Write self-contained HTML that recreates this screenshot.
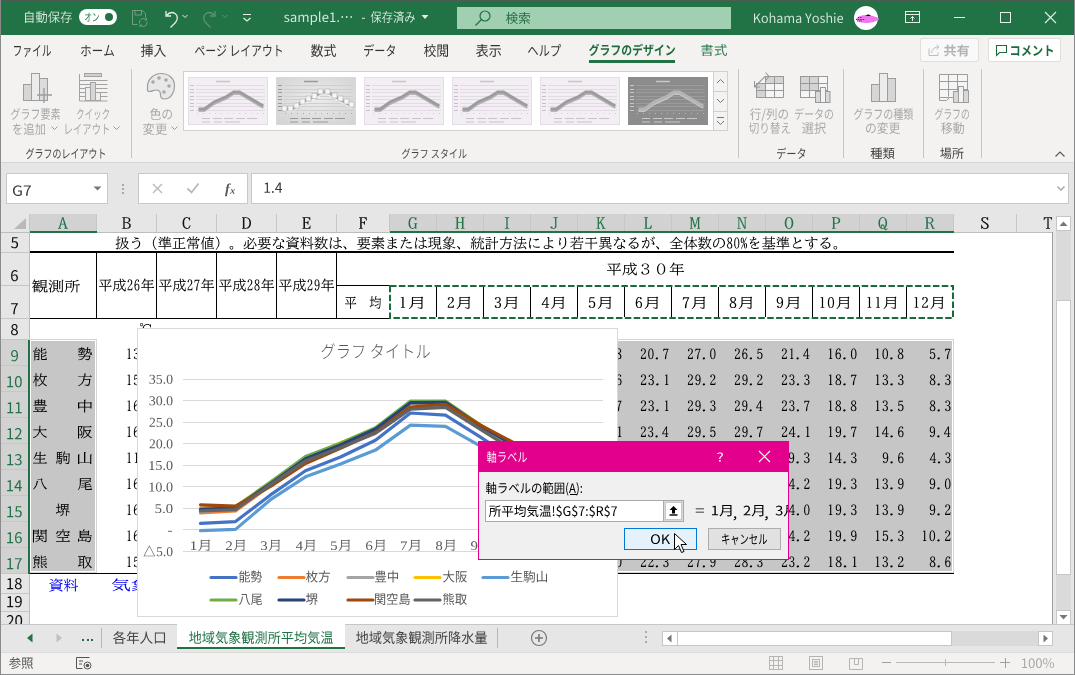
<!DOCTYPE html>
<html><head><meta charset="utf-8">
<style>
*{box-sizing:border-box;margin:0;padding:0}
html,body{width:1075px;height:675px;overflow:hidden;background:#fff;font-family:"Liberation Sans",sans-serif;position:relative}
.a{position:absolute}
.t{white-space:nowrap;transform-origin:0 50%}
svg.a{overflow:visible}
</style></head><body>
<svg width="0" height="0" style="position:absolute"><defs><path id="s0" d="M24-41 77-41 77-26 24-26zM24-48 24-63 77-63 77-48zM24-19 77-19 77-5 24-5zM46-84 44-80 43-75 42-70 16-70 16 8 24 8 24 2 77 2 77 8 85 8 85-70 49-70 51-74 53-79 54-83z"/><path id="s1" d="M66-83 65-77 65-71 65-66 65-61 53-61 53-54 65-54 65-47 64-42 63-36 63-30 61-25 60-20 58-15 56-11 53-7 33-5 33-13 52-13 52-19 33-19 33-25 52-25 52-55 33-55 33-61 54-61 54-67 33-67 33-74 38-75 43-76 48-76 52-77 49-83 44-82 40-81 34-81 29-80 23-79 17-79 11-78 5-78 6-75 7-72 12-73 16-73 21-73 26-74 26-67 4-67 4-61 26-61 26-55 7-55 7-25 26-25 26-19 7-19 7-13 26-13 26-4 4-2 5 4 10 4 14 3 19 3 25 2 30 2 36 1 42 0 47 0 45 1 43 3 46 6 49 8 54 4 58-1 61-6 64-11 67-18 69-24 70-31 71-38 72-46 72-54 86-54 86-42 86-33 85-24 85-18 84-12 84-8 83-4 83-2 82-1 80 0 78 1 74 1 67 0 69 4 69 8 74 8 78 8 82 7 85 6 88 4 89 2 90 0 91-3 91-7 92-12 92-19 93-26 93-35 93-45 94-57 94-59 94-61 72-61 73-66 73-71 73-77 73-83zM13-37 26-37 26-30 13-30zM33-37 46-37 46-30 33-30zM13-50 26-50 26-42 13-42zM33-50 46-50 46-42 33-42z"/><path id="s2" d="M45-73 82-73 82-54 45-54zM38-79 38-47 60-47 60-35 31-35 31-28 55-28 52-24 49-19 45-15 41-11 37-8 32-5 28-2 30 0 33 4 37 1 41-2 45-6 49-10 53-14 57-19 60-23 60 8 67 8 67-24 70-19 74-14 77-10 81-6 85-2 89 1 93 4 95 1 98-2 94-5 90-8 86-11 82-15 78-19 75-24 72-28 95-28 95-35 67-35 67-47 90-47 90-79zM28-84 25-78 23-72 20-67 17-62 13-57 10-52 6-48 2-44 5-40 6-37 10-41 14-45 17-50 17 8 24 8 24-61 27-66 30-71 32-76 35-82z"/><path id="s3" d="M62-36 62-27 34-27 34-20 62-20 62-1 61 0 59 1 56 1 51 1 45 1 46 4 47 8 55 8 61 8 65 7 68 4 69-1 69-20 96-20 96-27 69-27 69-32 73-35 78-38 82-42 86-45 89-49 85-53 83-52 42-52 42-46 76-46 73-42 69-39 64-36zM38-84 37-80 36-75 34-71 6-71 6-64 31-64 29-59 26-54 23-49 19-44 16-40 12-36 8-32 3-28 5-25 7-21 11-25 15-28 19-32 19 8 26 8 26-41 29-45 32-50 35-54 37-59 40-64 94-64 94-71 43-71 45-76 46-82z"/><path id="s4" d="M9-14 14-8 20-11 25-14 30-18 35-22 40-25 44-30 48-34 52-38 55-41 58-45 58-9 58-6 55-5 50-5 46-5 41-6 41 2 46 3 52 3 57 3 62 2 65-1 66-5 66-10 66-16 66-22 66-28 66-34 66-41 66-47 66-53 82-53 86-53 90-52 90-61 86-60 81-60 66-60 65-70 66-74 66-78 57-78 57-75 58-70 58-60 22-60 17-60 12-61 12-52 17-53 22-53 55-53 52-49 49-45 45-41 41-37 36-33 31-28 26-25 20-21 15-17z"/><path id="s5" d="M23-73 17-67 21-64 26-61 30-57 35-53 39-49 42-46 48-53 45-56 41-59 36-63 31-67 27-71zM14-6 19 2 25 1 31-1 36-3 42-5 46-7 51-9 55-11 59-14 64-17 68-20 73-24 77-28 80-32 84-37 87-41 90-45 92-49 88-58 85-54 83-49 80-45 76-40 72-36 68-32 64-28 59-24 54-21 50-19 46-16 42-14 37-12 32-11 26-9 20-7z"/><path id="s6" d="M23 1 29 1 34-1 38-3 41-7 43-11 43-15 42-20 40-24 36-27 31-29 27-31 21-34 17-37 15-41 16-45 19-48 25-49 30-48 34-46 37-44 42-50 38-52 34-54 30-55 25-56 19-55 15-54 11-51 8-48 7-44 6-40 7-35 10-32 13-29 17-26 22-25 26-23 30-21 33-18 34-14 33-10 30-7 24-6 19-6 15-8 11-10 8-12 3-6 7-3 12-1 18 1z"/><path id="s7" d="M22 1 27 1 31-1 36-3 40-6 41 0 48 0 48-33 48-39 47-44 45-48 42-51 39-54 35-55 30-56 23-55 17-53 12-51 8-49 12-42 16-45 22-47 28-48 34-47 37-44 39-39 39-34 31-33 24-32 19-30 14-28 10-25 8-22 6-18 6-14 7-9 9-4 12-1 17 1zM24-6 19-7 16-10 15-15 15-18 17-21 20-23 25-25 31-27 39-28 39-13 34-9 29-7z"/><path id="s8" d="M9 0 18 0 18-39 23-44 28-47 32-48 36-47 40-44 41-40 42-33 42 0 51 0 51-39 56-44 61-47 65-48 69-47 73-44 74-40 75-33 75 0 84 0 84-34 84-41 82-46 80-50 77-53 73-55 68-56 63-55 58-53 54-49 50-45 48-50 45-53 40-55 35-56 30-55 26-53 22-50 18-46 17-54 9-54z"/><path id="s9" d="M9 23 18 23 18 4 18-5 23-2 28 1 33 1 38 1 42-1 46-3 50-6 53-11 55-16 56-21 57-28 56-34 55-39 54-44 51-48 48-51 44-54 40-55 35-56 30-55 26-53 22-51 18-48 17-54 9-54zM32-6 28-7 23-9 18-12 18-41 23-45 28-47 33-48 37-47 41-45 44-42 46-38 47-34 47-28 47-22 45-16 43-12 40-9 36-7z"/><path id="s10" d="M19 1 22 1 24 0 23-6 22-6 21-6 19-7 18-10 18-80 9-80 9-11 10-6 11-2 14 0z"/><path id="s11" d="M31 1 36 1 41 0 45-2 49-4 46-10 42-8 37-7 32-6 27-7 23-8 20-11 17-15 15-20 14-25 51-25 51-27 51-30 51-36 50-41 48-45 46-49 42-52 39-54 34-55 30-56 25-55 20-54 16-51 13-48 10-44 7-39 6-33 5-27 6-21 7-15 10-10 13-6 17-3 21-1 26 1zM14-32 15-37 18-42 21-46 25-48 30-48 34-48 38-46 41-42 43-37 43-32z"/><path id="s12" d="M9 0 49 0 49-8 34-8 34-73 27-73 23-71 18-69 12-68 12-62 25-62 25-8 9-8z"/><path id="s13" d="M14 1 19-1 20-6 19-11 14-13 9-11 7-6 9-1z"/><path id="s14" d="M17-45 12-43 10-38 12-33 17-31 21-33 23-38 21-43zM50-45 45-43 43-38 45-33 50-31 55-33 57-38 55-43zM83-45 79-43 77-38 79-33 83-31 88-33 90-38 88-43z"/><path id="s15" d="M5-24 30-24 30-32 5-32z"/><path id="s16" d="M9-78 14-75 19-72 24-69 27-66 31-72 28-75 23-78 18-81 13-83zM4-51 9-48 14-45 18-43 22-40 26-46 23-49 18-52 13-54 8-56zM7 2 13 7 16 2 18-2 21-7 23-12 26-17 28-21 30-26 25-31 22-26 20-21 17-16 14-11 12-6 9-2zM60-84 60-74 32-74 32-67 42-67 46-63 49-59 53-55 57-52 52-50 47-48 41-47 35-45 29-44 31-41 33-38 39-39 44-41 49-42 54-44 59-46 64-48 68-46 73-44 77-43 82-41 88-40 93-39 95-42 97-45 91-47 86-48 80-49 75-51 71-53 74-56 78-59 81-63 84-67 95-67 95-74 67-74 67-84zM75-67 72-63 68-59 64-56 59-59 55-63 51-67zM79-27 79-18 47-18 48-22 48-26 48-27zM41-39 41-26 41-22 40-18 39-13 38-8 35-4 32 1 28 5 31 7 34 9 37 5 41 2 43-3 45-7 46-11 79-11 79 8 87 8 87-39 79-39 79-34 48-34 48-39z"/><path id="s17" d="M85-51 77-52 77-48 77-43 76-39 76-36 71-38 66-40 60-41 54-43 48-44 51-49 53-55 56-60 58-64 60-68 61-69 62-71 57-75 55-74 52-74 48-74 42-73 35-73 30-73 26-73 22-73 23-65 26-66 30-66 35-66 41-66 47-67 51-67 49-63 47-58 45-54 43-49 40-44 34-43 28-42 23-40 19-38 15-34 11-31 9-27 8-22 7-18 8-12 11-8 15-5 20-4 25-4 29-7 33-11 35-15 38-20 40-25 43-31 45-37 51-36 56-35 60-34 65-32 70-30 74-28 72-23 70-19 67-14 64-10 59-6 54-3 48 0 54 6 60 3 64 0 68-3 71-7 74-10 77-15 79-19 81-24 84-21 88-18 91-16 95-24 91-27 87-29 83-32 83-37 84-41 84-46zM37-37 35-32 33-27 31-23 29-19 26-15 24-12 20-12 16-13 14-18 15-23 17-27 20-31 25-34 31-36z"/><path id="s18" d="M40-45 40-19 61-19 59-15 57-12 55-9 51-5 46-2 41 0 34 3 36 6 38 8 45 6 50 3 55 0 59-3 62-7 65-11 66-14 69-10 72-5 76-2 79 1 83 4 88 6 93 8 95 5 97 2 92 0 87-2 82-5 78-9 75-13 72-19 92-19 92-45 69-45 69-54 85-54 85-59 90-56 94-54 96-57 98-60 93-62 89-65 84-68 80-72 76-76 72-80 69-84 62-84 59-80 56-75 52-71 47-67 42-64 37-61 37-63 26-63 26-84 19-84 19-63 5-63 5-56 19-56 17-50 15-43 13-37 11-32 8-26 6-22 3-18 5-14 7-11 9-15 11-19 14-23 16-28 18-33 19-39 19 8 26 8 26-39 29-34 32-29 34-25 38-31 36-34 33-39 29-44 26-48 26-56 37-56 39-54 43-56 47-59 47-54 62-54 62-45zM66-77 69-74 72-70 75-67 79-64 83-60 49-60 54-64 59-69 63-73zM47-39 62-39 62-30 62-28 62-25 47-25zM69-39 85-39 85-25 69-25 69-28 69-30z"/><path id="s19" d="M63-10 69-7 74-3 80 0 84 4 88 7 94 2 90-1 85-4 80-8 74-11 69-14zM29-14 25-10 20-7 15-4 10-1 4 2 8 4 10 7 15 5 19 2 24-1 28-4 32-8 36-11zM7-59 7-40 14-40 14-52 41-52 37-48 32-44 28-41 22-43 18-39 22-36 28-33 32-30 36-27 30-23 7-23 7-16 46-17 46 8 54 8 54-17 82-18 85-15 88-12 93-17 90-20 86-23 82-26 77-29 72-32 68-35 63-31 67-29 71-26 74-23 41-23 45-26 50-29 54-32 59-35 63-38 67-41 71-44 64-48 60-45 56-41 52-38 47-35 43-31 38-34 33-38 37-40 41-44 45-47 49-51 46-52 86-52 86-40 93-40 93-59 54-59 54-69 92-69 92-75 54-75 54-84 46-84 46-75 8-75 8-69 46-69 46-59z"/><path id="s20" d="M10 0 19 0 19-23 32-38 54 0 64 0 38-46 61-73 50-73 20-36 19-36 19-73 10-73z"/><path id="s21" d="M30 1 35 1 40-1 44-3 48-6 51-10 53-15 55-21 55-27 55-34 53-39 51-44 48-48 44-51 40-54 35-55 30-56 25-55 21-54 17-51 13-48 10-44 7-39 6-34 5-27 6-21 7-15 10-10 13-6 17-3 21-1 25 1zM30-6 26-7 22-9 19-12 17-16 15-21 15-27 15-33 17-38 19-42 22-45 26-47 30-48 35-47 39-45 42-42 44-38 46-33 46-27 46-21 44-16 42-12 39-9 35-7z"/><path id="s22" d="M9 0 18 0 18-39 22-43 26-46 29-47 33-48 38-47 41-44 43-40 44-33 44 0 53 0 53-34 52-41 51-46 49-50 45-53 41-55 36-56 31-55 26-53 22-50 18-47 18-58 18-80 9-80z"/><path id="s23" d="M22 0 31 0 31-28 53-73 44-73 34-53 32-47 29-42 27-36 26-36 24-42 22-47 19-53 10-73 0-73 22-28z"/><path id="s24" d="M9 0 18 0 18-54 9-54zM14-66 18-67 20-72 18-76 14-78 9-76 8-72 9-67z"/><path id="s25" d="M86-66 80-70 77-70 75-70 72-70 67-70 61-70 54-70 46-70 39-70 33-70 28-70 24-70 19-70 14-70 14-62 19-62 24-62 28-62 33-62 39-62 46-62 54-62 61-62 67-62 73-62 76-62 75-57 73-51 71-46 69-40 66-34 62-29 59-25 56-22 52-18 47-15 42-12 37-10 30-7 24-5 30 2 36 0 42-2 47-5 51-8 56-11 60-14 63-17 67-21 70-25 73-29 76-35 78-40 80-46 82-51 83-57 85-62 85-64z"/><path id="s26" d="M86-50 82-55 79-54 76-54 74-54 69-54 62-54 55-54 48-54 41-54 34-54 30-54 27-54 22-54 18-55 18-47 22-47 27-47 30-47 35-47 42-47 50-47 58-47 66-47 71-47 75-47 73-44 70-40 66-36 62-32 58-29 64-24 69-28 73-32 77-37 80-41 83-45 84-48 85-49zM53-40 44-40 45-37 45-34 45-29 44-24 43-19 41-14 38-9 35-5 29-1 26 1 22 2 30 8 35 4 40 0 44-4 47-8 49-13 51-17 52-23 52-28 53-34z"/><path id="s27" d="M9-36 13-28 19-30 24-32 30-35 36-37 41-39 46-42 51-45 51-8 51-2 50 3 60 3 59-2 59-8 59-50 64-53 69-57 74-61 78-64 82-68 86-72 80-78 76-75 73-71 69-68 65-64 61-61 57-58 52-55 48-52 43-50 38-47 33-45 27-42 21-40 15-38z"/><path id="s28" d="M52-2 58 2 59 1 61 0 66-2 70-5 75-8 79-12 84-15 88-19 92-23 95-28 90-34 87-30 83-25 79-21 74-18 70-15 65-12 61-10 61-12 61-16 61-23 61-30 61-38 61-45 61-53 61-59 61-65 61-68 61-72 62-75 52-75 53-72 53-68 53-65 53-59 53-53 53-45 53-37 53-29 53-21 53-15 53-10 53-8 53-5zM7-3 14 2 18-1 22-5 25-10 28-15 30-20 32-25 33-29 34-34 34-40 34-46 35-52 35-58 35-63 35-68 35-72 36-75 26-75 27-71 27-67 27-62 27-56 27-50 26-43 26-37 25-32 24-27 22-22 20-18 17-14 14-9 11-6z"/><path id="s29" d="M34-38 27-41 25-37 22-32 19-28 15-23 12-19 8-15 15-11 18-14 22-19 25-23 29-28 32-33zM76-41 69-38 72-34 75-30 78-25 81-20 84-15 86-11 93-15 91-19 88-24 85-29 82-33 79-38zM11-62 11-53 15-53 20-54 48-54 48-53 48-50 48-45 48-38 48-31 48-24 48-17 48-12 48-8 47-5 44-5 39-5 32-6 33 2 37 3 42 3 47 3 52 2 55-1 56-5 56-9 56-14 56-21 56-29 56-36 56-43 56-49 56-53 56-54 82-54 86-53 90-53 90-62 86-61 82-61 56-61 56-71 56-75 56-78 47-78 47-75 48-71 48-61 20-61 15-61z"/><path id="s30" d="M10-43 10-34 14-34 19-34 24-34 27-34 32-34 38-34 45-34 52-34 59-34 65-34 71-34 76-34 79-34 85-34 90-34 90-43 85-43 79-43 76-43 71-43 65-43 59-43 52-43 44-43 38-43 32-43 27-43 24-43 19-43 14-43z"/><path id="s31" d="M17-11 12-11 7-11 9-2 13-2 17-3 22-3 27-4 34-4 40-5 48-6 55-7 62-8 68-8 74-9 80-10 82-5 84-1 85 3 93 0 92-5 89-10 86-15 83-21 80-26 77-32 74-37 71-41 64-38 67-34 70-29 73-23 76-17 71-17 66-16 61-15 55-15 49-14 43-13 37-13 31-12 33-17 34-22 37-28 39-34 41-40 43-46 45-52 46-57 48-62 49-65 51-71 52-75 42-77 42-73 40-67 39-63 38-59 36-53 34-47 32-41 30-34 28-28 26-22 24-16 22-11z"/><path id="s32" d="M39-50 39-7 46-7 46-12 62-12 62 8 69 8 69-12 85-12 85-8 92-8 92-50 69-50 69-58 95-58 95-64 69-64 69-73 75-74 81-75 86-76 91-76 87-82 82-81 78-81 73-80 67-79 61-79 55-78 49-78 43-78 38-77 39-74 39-71 45-72 50-72 56-72 62-73 62-64 36-64 36-58 62-58 62-50zM46-28 62-28 62-18 46-18zM46-34 46-44 62-44 62-34zM85-28 85-18 69-18 69-28zM85-34 69-34 69-44 85-44zM18-84 18-64 4-64 4-57 18-57 18-35 3-31 4-24 18-28 18-1 18 0 16 1 12 1 6 1 8 4 8 8 14 8 19 7 22 6 24 4 25-1 25-30 36-33 35-40 25-37 25-57 35-57 35-64 25-64 25-84z"/><path id="s33" d="M44-58 42-50 40-42 37-35 34-28 30-22 26-16 21-11 16-6 10-2 4 2 7 5 10 8 16 4 22 0 26-5 31-10 35-15 39-21 42-27 45-34 48-41 51-48 52-42 54-37 57-31 60-25 63-19 67-13 72-7 77-2 84 3 91 8 93 4 97 1 86-6 77-14 70-23 65-32 61-40 58-49 56-57 55-65 55-72 55-78 23-78 23-70 48-70 48-66 48-62 49-58z"/><path id="s34" d="M70-60 71-64 74-66 78-67 81-66 84-64 85-60 84-56 81-54 78-53 74-54 71-56zM66-60 67-55 69-51 73-49 78-48 83-49 86-51 89-55 90-60 89-65 86-69 83-71 78-72 73-71 69-69 67-65zM5-26 13-19 15-22 18-26 22-30 25-35 29-40 33-45 36-49 39-52 42-52 45-50 48-46 52-42 57-38 61-33 65-29 68-25 72-21 76-16 79-12 83-7 87-3 94-10 90-14 86-19 81-24 77-28 73-32 70-36 66-40 61-45 57-49 53-53 49-57 44-61 40-62 36-60 32-56 29-52 25-48 22-44 18-40 15-36 12-33 9-29z"/><path id="s35" d="M72-75 66-72 69-69 71-65 73-61 75-56 81-59 79-63 76-67 74-71zM85-79 79-77 82-73 84-70 86-66 89-62 94-64 92-68 90-72 87-76zM29-76 24-69 28-67 33-64 38-61 42-58 46-55 51-62 47-64 43-67 38-71 33-74zM14-5 18 4 23 2 29 1 35-1 41-3 46-6 52-9 57-12 62-16 67-19 71-23 76-27 80-31 84-36 87-40 90-45 85-53 82-48 79-44 76-39 72-35 67-31 63-27 58-23 53-19 47-16 42-13 37-11 31-9 25-7 19-6zM14-54 9-47 13-45 18-42 23-39 28-36 31-33 36-40 32-42 28-45 23-48 18-51z"/><path id="s36" d="M22-3 28 2 30 1 32 0 40-2 47-5 53-8 60-11 66-15 72-18 77-22 82-26 87-31 91-36 86-43 82-38 78-33 73-29 67-25 61-21 55-18 49-15 43-12 37-10 32-9 32-11 32-16 31-21 32-28 32-35 32-43 32-50 32-56 32-62 32-65 32-70 32-74 22-74 23-70 23-65 23-62 23-56 23-50 23-43 23-35 23-28 23-21 23-16 23-11 23-8 23-6z"/><path id="s37" d="M93-68 88-72 85-72 81-72 78-72 73-72 67-72 60-72 52-72 44-72 37-72 31-72 26-72 24-72 18-72 12-73 12-64 18-64 24-64 26-64 31-64 37-64 44-64 51-64 59-64 66-64 73-64 78-64 81-64 79-61 76-57 72-53 68-48 63-45 59-42 66-36 70-40 75-44 79-48 83-53 86-57 88-61 90-64 92-66zM53-54 44-54 45-51 45-47 45-42 44-36 43-31 42-27 41-22 38-18 35-14 32-10 27-7 22-4 18-2 25 4 32 0 38-5 43-9 46-14 49-20 51-26 52-32 53-39 53-47z"/><path id="s38" d="M88-61 83-64 80-64 76-63 54-63 54-73 54-76 54-80 44-80 45-76 45-73 45-63 23-63 18-63 14-64 14-60 14-56 14-51 14-44 14-38 14-35 14-32 22-32 22-35 22-38 22-43 22-50 22-56 78-56 77-51 76-46 75-41 73-36 71-31 68-27 65-22 61-18 56-14 51-11 46-9 41-7 36-5 31-4 37 4 43 2 49 0 54-3 59-6 63-9 67-13 71-16 74-20 77-25 79-30 82-35 83-40 85-45 86-50 87-55 87-58z"/><path id="s39" d="M34-9 34-3 33 3 43 3 42-3 42-9 42-42 46-40 51-39 56-37 62-35 67-32 72-30 77-28 81-26 85-34 80-36 75-38 70-41 64-43 59-45 53-47 47-49 42-51 42-67 42-72 43-77 33-77 34-72 34-67 34-63 34-58 34-52 34-44 34-37 34-29 34-22 34-16 34-12z"/><path id="s40" d="M44-82 42-78 39-73 36-69 41-66 44-70 47-75 50-79zM8-79 11-75 13-70 14-66 20-69 19-73 17-77 14-82zM63-84 62-78 61-72 59-67 58-61 56-56 54-51 52-47 49-43 46-39 50-36 52-34 55-38 58-42 60-46 61-40 63-34 65-29 67-24 69-18 66-14 62-10 58-7 54-3 49 0 45-3 41-5 37-8 40-11 41-15 43-20 44-24 53-24 53-31 26-31 30-38 28-38 32-38 32-53 37-49 42-45 46-42 50-48 47-50 42-53 36-56 32-59 53-59 53-66 32-66 32-84 25-84 25-66 4-66 4-59 23-59 20-56 16-52 12-49 8-46 3-44 6-41 8-38 12-41 17-44 21-48 25-53 25-39 22-39 18-31 4-31 4-24 15-24 13-19 10-14 8-10 14-8 16-11 21-8 26-6 21-3 16-1 11 0 4 2 6 5 8 8 14 6 19 5 24 3 28 0 32-2 37 0 41 3 44 6 46 3 48 6 50 8 54 6 59 3 63 0 66-4 70-7 73-11 76-6 79-2 83 2 87 5 92 8 94 5 97 2 92-1 88-5 84-9 81-13 78-18 80-22 82-27 83-31 85-36 86-42 88-47 89-53 90-59 96-59 96-66 67-66 68-71 69-77 70-83zM23-24 37-24 35-19 33-15 31-11 27-13 23-15 19-16zM65-59 82-59 81-53 80-47 79-41 77-36 75-31 73-26 71-31 70-36 68-42 67-47 66-53z"/><path id="s41" d="M71-79 75-76 79-73 83-69 85-66 90-71 88-74 84-77 80-80 76-83zM56-84 57-79 57-74 57-70 57-65 6-65 6-58 58-58 58-47 60-37 61-27 64-19 66-11 69-4 72 1 76 5 80 7 85 8 88 8 91 6 93 3 95-1 96-7 97-14 93-16 90-19 89-10 89-4 87-1 86 0 83 0 80-2 77-6 75-10 73-16 71-23 69-30 67-39 66-48 65-58 95-58 95-65 65-65 65-70 65-74 65-79 64-84zM6-2 8 5 13 4 18 3 23 2 28 1 34-1 39-2 45-3 51-5 56-6 56-13 34-8 34-36 53-36 53-43 9-43 9-36 27-36 27-7z"/><path id="s42" d="M20-73 20-65 25-65 30-65 34-65 40-65 47-65 54-65 60-65 64-65 69-65 73-65 73-73 69-73 64-72 60-73 54-73 47-72 40-72 34-72 29-72 25-73zM78-81 73-79 76-75 79-70 81-65 87-68 84-72 81-77zM90-85 84-83 87-79 90-74 92-69 98-72 95-76 92-81zM8-48 8-40 13-40 17-40 47-40 47-34 46-29 45-24 44-19 41-15 39-11 35-8 31-5 27-2 22 0 30 6 35 3 39-1 43-5 47-8 50-12 52-17 53-22 54-28 55-34 55-40 83-40 87-40 90-40 90-48 86-48 83-48 80-48 74-48 67-47 59-47 50-48 41-48 33-48 26-48 20-48 17-48 13-48z"/><path id="s43" d="M54-78 44-81 43-77 41-74 40-70 37-67 35-63 32-59 28-55 24-50 20-46 15-42 9-39 16-34 21-37 25-41 29-44 33-48 36-52 40-56 42-60 76-60 75-56 73-51 71-46 69-42 66-37 63-32 58-35 54-38 50-41 46-43 42-46 36-40 40-38 44-35 49-32 53-29 57-26 54-22 50-19 46-15 41-12 36-9 31-6 25-4 19-2 26 4 32 2 38-1 43-4 48-7 52-10 57-14 60-17 64-21 68-18 72-15 75-12 81-19 77-22 73-25 69-28 73-33 76-38 79-44 81-49 83-54 85-59 86-61 87-64 81-68 78-67 74-67 47-67 49-71 51-74z"/><path id="s44" d="M53-59 51-55 48-50 45-46 41-42 38-38 40-36 43-34 47-38 51-42 54-47 57-52 60-56zM74-56 78-52 82-48 85-43 88-38 90-34 97-38 94-42 91-46 88-51 84-55 80-60zM64-84 64-69 40-69 40-62 95-62 95-69 71-69 71-84zM77-42 75-36 73-31 70-26 67-21 64-26 61-31 59-36 56-41 50-39 52-34 54-29 57-24 60-20 62-15 59-12 55-8 51-5 46-2 41 0 36 2 38 5 40 8 45 6 50 3 55 1 59-3 63-6 67-10 71-6 74-2 78 1 83 4 87 6 92 8 94 5 97 2 92 0 88-3 83-5 79-8 75-12 72-15 75-20 78-25 80-29 82-35 84-40zM20-84 20-63 5-63 5-56 19-56 18-50 16-43 14-37 11-32 9-26 6-22 3-18 5-14 7-11 9-14 12-19 14-23 16-28 18-34 20-39 20 8 27 8 27-39 30-33 33-28 36-24 40-30 38-33 34-38 30-44 27-48 27-56 39-56 39-63 27-63 27-84z"/><path id="s45" d="M35-31 64-31 64-20 35-20zM88-80 54-80 54-47 84-47 84-2 84 0 82 0 74 0 75-3 75-7 72-8 70-9 69-2 67-1 64-1 61-1 59-1 59-3 59-15 71-15 71-36 62-36 64-40 67-44 60-47 58-41 55-36 44-36 42-41 38-46 32-44 35-40 37-36 29-36 29-15 38-15 37-11 35-7 32-4 28-2 22 0 24 3 26 5 31 3 36 1 39-2 42-6 43-10 44-15 52-15 52-3 53 1 55 4 60 4 64 4 68 4 71 4 73 3 74 5 74 8 80 8 85 7 88 6 91 4 92-2 92-80zM38-61 38-53 16-53 16-61zM38-66 16-66 16-74 38-74zM84-61 84-52 61-52 61-61zM84-66 61-66 61-74 84-74zM9-80 9 8 16 8 16-47 45-47 45-80z"/><path id="s46" d="M14 1 16 8 21 7 26 6 32 4 37 3 43 1 49 0 55-2 61-4 60-10 36-4 36-27 40-30 44-33 47-36 50-39 53-32 55-26 58-20 62-15 66-10 70-5 75-1 80 2 86 5 92 8 94 4 97 1 91-1 86-3 82-6 77-9 73-13 70-17 74-19 78-22 83-25 87-28 91-31 85-36 81-32 76-28 71-25 66-22 64-26 61-30 59-34 58-39 94-39 94-46 54-46 54-55 86-55 86-61 54-61 54-69 90-69 90-76 54-76 54-84 46-84 46-76 10-76 10-69 46-69 46-61 14-61 14-55 46-55 46-46 6-46 6-39 41-39 37-36 33-33 28-30 23-28 18-25 13-23 8-21 3-20 5-17 8-13 13-15 18-17 23-20 28-22 28-2z"/><path id="s47" d="M23-35 21-30 19-26 16-21 13-17 10-13 7-9 4-6 7-3 10-1 14-5 17-9 20-13 23-18 26-23 29-28 31-33zM68-32 72-27 76-22 79-16 82-11 84-6 86-1 93-4 92-9 89-14 86-19 83-25 79-30 75-35zM15-77 15-69 85-69 85-77zM6-52 6-45 46-45 46-2 46 0 44 0 40 0 35 0 28 0 30 4 31 8 37 8 42 8 46 7 49 7 53 4 54-2 54-45 94-45 94-52z"/><path id="s48" d="M6-28 14-21 16-24 19-28 23-32 26-37 30-42 34-47 37-51 40-53 43-54 46-51 49-48 53-44 58-40 62-35 66-31 69-27 73-23 76-18 80-14 84-9 88-5 95-12 91-16 87-21 82-25 78-30 74-34 70-38 67-42 62-47 58-51 54-55 50-59 45-63 41-63 37-62 33-58 30-54 26-50 23-45 19-41 16-38 13-35 10-31z"/><path id="s49" d="M80-72 82-77 87-78 92-77 94-72 92-67 87-65 82-67zM76-72 76-70 76-69 73-68 70-68 66-68 59-68 52-68 45-68 38-68 31-68 26-68 23-68 18-69 13-69 13-60 17-60 23-61 26-61 31-61 37-61 45-61 52-61 60-61 66-61 71-61 74-61 73-55 72-50 70-44 67-38 64-33 61-28 58-24 54-20 50-17 46-14 41-11 35-8 29-6 22-4 29 4 35 1 40-1 45-3 50-6 54-9 58-12 62-16 65-19 68-23 71-28 74-33 77-39 79-44 81-50 82-55 83-60 83-61 85-61 87-61 91-61 95-64 98-67 98-72 98-76 95-80 91-82 87-83 83-82 79-80 77-76z"/><path id="b50" d="M90-86 82-83 85-79 87-74 90-69 98-73 95-77 93-82zM54-76 40-80 38-75 35-70 33-67 31-63 28-59 24-55 20-50 15-46 10-42 4-38 15-30 20-33 25-37 29-41 33-45 37-49 40-54 68-54 67-50 66-45 63-40 61-35 58-31 54-26 51-23 48-20 44-17 41-14 36-11 32-9 26-6 20-4 14-2 26 9 32 6 37 4 42 1 47-2 52-5 56-9 59-12 63-16 66-19 70-24 73-29 76-34 78-39 81-44 82-49 84-53 85-57 87-60 78-65 86-68 84-73 81-78 78-82 70-79 73-75 75-70 77-66 73-65 68-65 48-65 48-66 51-70z"/><path id="b51" d="M22-77 22-64 27-64 33-64 36-64 42-64 49-64 55-64 62-64 67-64 71-64 77-64 82-64 82-77 77-76 71-76 68-76 62-76 56-76 49-76 42-76 37-76 33-76 27-76zM90-48 82-53 79-52 74-52 71-52 66-52 60-52 53-52 46-52 39-52 33-52 28-52 25-52 19-52 13-53 13-40 20-40 25-40 29-40 34-40 40-40 47-40 54-40 60-40 66-40 70-40 73-40 71-36 69-32 66-27 63-23 59-20 55-17 51-14 46-11 40-9 34-7 28-6 38 6 43 4 48 2 52 0 57-2 61-5 66-8 70-12 74-16 77-20 80-25 83-29 85-34 87-39 88-44 89-46z"/><path id="b52" d="M89-67 79-73 75-72 71-72 68-72 63-72 56-72 49-72 41-72 35-72 29-72 25-72 21-72 17-73 13-73 13-59 18-59 25-59 29-59 35-59 41-59 49-59 56-59 63-59 68-59 72-59 71-55 69-50 68-45 65-40 63-35 60-31 57-27 53-24 49-20 45-17 40-14 34-12 28-9 21-8 32 4 37 2 43 0 48-3 53-6 57-9 61-12 65-16 69-19 72-23 75-28 78-34 80-39 82-45 84-50 86-55 87-60 88-63z"/><path id="b53" d="M45-62 44-57 43-52 42-47 41-42 39-38 37-30 34-25 32-21 30-18 27-18 24-19 22-21 20-26 19-33 20-37 21-41 23-46 26-50 29-54 34-57 39-60zM58-62 64-61 68-58 72-55 75-51 77-46 79-41 79-36 79-30 77-24 74-20 71-16 67-13 62-10 56-9 52-8 47-7 55 5 62 3 68 1 74-2 79-5 83-9 87-13 89-18 91-23 92-29 93-35 92-42 91-48 89-53 86-58 82-63 77-67 72-70 66-72 59-74 52-74 45-74 38-72 31-69 25-66 20-61 15-56 11-51 9-45 7-38 6-31 7-25 8-20 10-15 12-11 15-7 19-4 23-3 27-2 31-3 34-5 38-7 41-11 44-16 47-21 50-28 52-35 54-41 55-46 56-51 57-57z"/><path id="b54" d="M19-76 19-63 24-63 30-63 34-63 39-63 46-63 53-63 58-63 62-63 68-63 73-63 73-76 68-75 62-75 58-75 53-75 46-75 39-75 34-75 30-75 24-75zM79-82 71-79 74-75 77-70 79-65 87-69 85-73 82-78zM91-87 83-84 86-79 88-74 91-70 99-73 97-78 94-82zM7-50 7-37 12-37 17-37 44-37 44-31 43-25 41-20 38-15 35-11 30-7 25-3 20-1 32 8 37 5 42 1 46-3 49-7 52-12 54-16 55-21 57-26 58-31 58-37 82-37 87-37 91-37 91-50 87-49 82-49 79-49 74-49 67-49 58-49 50-49 41-49 33-49 25-49 20-49 17-49 12-49z"/><path id="b55" d="M82-78 75-76 77-71 79-66 80-62 87-64 86-68 84-73zM92-81 85-79 87-74 89-70 91-65 98-67 96-72 94-77zM4-59 4-46 8-46 15-46 23-46 23-32 23-26 23-22 37-22 37-26 36-32 36-46 60-46 60-42 60-35 59-29 58-24 56-19 53-16 50-12 47-9 43-7 38-4 32-2 43 8 50 5 55 1 60-3 64-7 67-12 69-17 71-23 72-29 73-36 73-43 73-46 81-46 87-46 92-46 92-59 87-58 80-58 73-58 73-69 73-74 74-78 60-78 60-74 60-69 60-58 36-58 36-68 37-73 37-77 23-77 23-73 23-68 23-58 15-58 8-59z"/><path id="b56" d="M6-39 12-26 18-28 23-30 28-32 33-34 38-36 43-38 48-41 48-9 48-4 47 1 47 4 63 4 62 1 62-4 62-9 62-49 67-52 72-56 76-60 81-63 85-67 89-71 78-81 75-78 71-74 68-70 63-67 59-63 54-60 50-57 46-54 41-52 36-49 31-47 25-45 19-43 13-41z"/><path id="b57" d="M24-76 15-66 19-63 23-59 28-55 33-51 37-48 40-44 50-55 46-58 42-62 37-66 33-70 28-73zM12-9 20 4 26 3 32 1 37-1 43-3 48-5 53-8 57-10 62-14 67-17 72-21 77-25 81-30 85-34 88-38 91-43 94-47 86-61 84-57 82-53 79-49 76-45 72-41 68-37 64-33 60-29 55-26 50-22 46-20 41-18 36-16 30-14 24-12 18-11z"/><path id="s58" d="M26-7 75-7 75 0 26 0zM26-12 26-18 75-18 75-12zM18-23 18 8 26 8 26 5 75 5 75 8 83 8 83-23zM6-33 6-28 94-28 94-33 53-33 53-39 88-39 88-44 53-44 53-50 82-50 82-61 94-61 94-66 82-66 82-77 53-77 53-84 46-84 46-77 16-77 16-72 46-72 46-66 6-66 6-61 46-61 46-55 15-55 15-50 46-50 46-44 12-44 12-39 46-39 46-33zM53-72 75-72 75-66 53-66zM53-55 53-61 75-61 75-55z"/><path id="b59" d="M57-14 62-10 67-6 71-2 76 2 80 6 83 9 95 2 92-1 87-5 82-9 77-13 72-16 68-20zM30-19 27-16 24-12 19-9 15-5 10-2 5 1 8 3 12 6 15 9 19 6 23 3 28 0 32-3 36-7 40-11 43-14zM8-66 8-54 26-54 26-35 4-35 4-23 96-23 96-35 74-35 74-54 93-54 93-66 74-66 74-84 62-84 62-66 38-66 38-84 26-84 26-66zM38-35 38-54 62-54 62-35z"/><path id="b60" d="M36-85 35-81 34-77 33-73 6-73 6-62 28-62 25-57 22-52 19-47 15-43 11-39 7-36 2-32 5-30 8-26 10-23 15-27 19-31 24-35 24 9 35 9 35-10 72-10 72-4 71-3 70-2 67-2 62-2 57-3 58 1 60 5 60 9 66 9 71 9 75 8 78 7 81 5 83 1 84-4 84-54 37-54 39-58 41-62 95-62 95-73 46-73 47-78 49-82zM35-27 72-27 72-20 35-20zM35-37 35-43 72-43 72-37z"/><path id="b61" d="M14-17 14-2 18-3 23-3 27-3 73-3 73 2 87 2 87-4 87-10 87-61 87-66 87-71 83-70 78-70 28-70 24-70 20-71 16-71 16-57 19-57 24-57 28-58 73-58 73-16 27-16 22-16 18-16z"/><path id="b62" d="M29-64 21-54 26-50 31-47 35-44 40-41 44-38 48-35 44-31 41-27 37-23 33-20 29-17 25-14 20-11 15-8 10-5 21 5 26 2 31-1 36-5 41-8 45-12 48-15 52-19 55-22 58-26 62-22 66-19 70-15 73-12 77-8 80-4 91-15 87-19 83-23 79-26 75-30 71-34 67-37 70-42 72-47 74-51 77-56 78-60 80-64 82-69 84-74 69-79 68-74 67-70 65-65 63-60 61-55 59-50 56-46 52-49 47-52 43-55 38-58 33-61z"/><path id="b63" d="M31-10 31-5 31 0 30 4 46 4 46 0 45-6 45-10 45-38 50-36 55-34 61-32 66-30 71-28 77-25 81-23 87-37 83-39 78-41 73-43 68-45 62-47 56-49 50-51 45-52 45-67 45-71 46-75 46-79 30-79 31-75 31-71 31-67 31-64 31-59 31-52 31-45 31-38 31-31 31-24 31-18 31-13z"/><path id="s64" d="M76-80 71-78 74-73 77-68 79-64 85-66 82-71 79-76zM88-84 82-82 85-77 88-73 90-68 96-70 93-75 90-80zM50-75 40-78 39-74 37-70 35-67 33-63 30-58 26-54 22-49 17-45 12-41 6-36 13-31 18-35 23-39 27-43 31-47 35-52 38-56 72-56 71-51 69-46 66-40 63-35 60-30 56-25 53-21 49-18 46-15 42-12 37-9 33-6 27-4 22-2 16 0 23 7 29 4 35 2 40-1 45-4 49-7 53-10 57-13 60-17 63-20 67-25 70-30 73-35 76-40 78-45 79-50 81-55 82-58 83-60 76-64 74-63 70-63 43-63 45-67 47-71z"/><path id="s65" d="M23-74 23-66 27-66 32-66 36-67 41-66 48-66 55-66 62-66 68-66 71-66 76-66 80-66 80-74 76-74 71-74 68-74 62-74 55-74 48-74 41-74 36-74 32-74 27-74zM88-48 82-52 80-51 77-51 74-51 68-51 62-51 54-51 46-51 39-51 32-51 27-51 24-51 19-51 14-52 14-43 19-43 24-43 27-43 32-43 39-43 47-43 55-43 62-43 69-43 74-43 77-43 76-39 74-34 71-30 69-25 65-21 61-18 57-14 52-11 47-9 42-6 36-4 30-3 36 4 41 3 46 1 50-1 55-3 59-6 64-9 68-13 72-17 75-21 78-26 81-30 83-35 85-40 86-45 87-47z"/><path id="s66" d="M12-64 12-39 38-39 32-29 5-29 5-23 28-23 25-19 22-15 20-12 17-9 24-6 26-9 31-8 36-7 40-6 44-5 40-3 35-2 30-1 25 0 19 0 13 1 6 1 8 4 9 8 15 7 21 7 27 6 33 5 38 4 43 3 47 1 51 0 55-2 62-1 68 1 73 3 79 5 83 6 88 8 92 2 88 1 84-1 79-2 74-4 69-6 63-7 67-10 70-14 73-18 76-23 96-23 96-29 41-29 47-38 44-39 89-39 89-64 65-64 65-73 93-73 93-80 7-80 7-73 34-73 34-64zM37-23 67-23 65-19 62-15 58-12 54-9 48-11 42-12 36-13 30-14zM41-73 58-73 58-64 41-64zM19-58 34-58 34-45 19-45zM41-58 58-58 58-45 41-45zM65-58 81-58 81-45 65-45z"/><path id="s67" d="M63-9 69-6 74-3 80 0 84 3 88 6 94 1 90-2 85-5 80-8 74-11 69-13zM29-13 25-10 20-7 15-4 10-1 4 1 7 4 10 6 15 4 19 2 24-1 28-4 32-7 36-10zM6-52 6-46 38-46 34-43 31-40 27-36 20-40 15-36 20-33 25-30 30-27 34-24 30-22 6-21 7-15 46-16 46 8 54 8 54-16 84-17 87-14 89-11 95-16 92-19 88-22 84-25 80-28 75-31 70-33 65-29 69-27 72-25 76-22 41-22 46-25 50-28 55-31 60-34 64-38 68-41 62-45 58-42 54-38 50-35 45-32 40-28 37-31 32-34 36-36 40-40 44-43 48-46 94-46 94-52 54-52 54-59 84-59 84-64 54-64 54-71 90-71 90-77 54-77 54-84 46-84 46-77 12-77 12-71 46-71 46-64 17-64 17-59 46-59 46-52z"/><path id="s68" d="M88-44 85-52 81-50 77-48 73-46 68-44 64-42 58-40 57-43 54-46 50-48 45-49 41-48 36-47 31-45 34-48 36-52 38-56 40-60 46-61 52-61 57-61 63-62 68-62 74-63 74-71 69-70 64-69 59-69 53-68 48-68 43-68 45-74 46-79 38-80 37-76 37-72 35-67 29-67 23-67 18-68 12-68 12-61 18-60 23-60 28-60 33-60 31-57 29-53 26-49 23-44 19-40 15-35 10-30 16-25 20-28 23-32 25-35 29-38 33-40 38-42 43-42 47-42 50-40 52-36 47-33 42-30 37-27 34-24 31-20 29-16 28-11 29-6 31-2 34 0 38 2 43 4 48 4 54 4 59 4 65 4 71 4 76 3 81 3 82-5 76-4 70-4 65-3 59-3 54-3 48-3 43-4 40-5 37-8 36-12 37-16 39-19 42-23 47-26 52-29 52-23 52-18 52-13 59-13 59-32 65-35 70-37 75-39 79-41 84-43z"/><path id="s69" d="M6-77 11-73 16-69 20-65 23-61 29-66 26-70 21-74 16-78 11-82zM26-44 5-44 5-38 19-38 19-12 15-9 11-6 7-3 4 0 8 7 11 4 15 1 19-3 23-6 26-2 30 1 35 3 40 5 45 6 51 6 56 6 61 6 67 6 73 6 79 6 84 6 89 6 94 6 95 2 96-2 92-2 86-1 80-1 74-1 67-1 61-1 56-1 51-1 45-2 39-3 34-5 30-8 26-12zM37-74 37-9 89-9 89-38 45-38 45-47 85-47 85-74 62-74 66-83 57-84 56-79 54-74zM45-67 78-67 78-54 45-54zM45-31 82-31 82-16 45-16z"/><path id="s70" d="M57-72 57 6 64 6 64-1 84-1 84 6 91 6 91-72zM64-8 64-64 84-64 84-8zM20-83 19-65 5-65 5-58 19-58 19-50 18-43 18-36 17-29 15-23 14-17 12-11 9-6 6-1 3 3 6 5 9 8 12 3 16-2 18-7 20-14 22-20 24-27 25-34 26-42 26-50 26-58 42-58 41-47 41-37 41-29 41-23 40-17 40-12 39-9 39-6 38-4 38-3 36-1 34-1 30-1 24-1 25 2 26 6 32 6 38 6 42 5 44 2 45 1 46-2 47-5 47-9 48-14 48-21 48-29 49-38 49-49 49-61 49-64 49-65 27-65 27-83z"/><path id="s71" d="M54-78 44-81 43-76 41-73 39-69 37-65 34-61 30-56 26-52 21-47 16-43 10-39 17-34 22-38 27-42 31-46 35-50 39-54 42-58 76-58 75-54 73-48 70-43 67-37 64-32 60-27 57-24 53-20 50-17 46-14 41-11 37-9 31-6 26-4 20-2 27 4 33 2 39-1 44-3 49-6 53-9 57-12 61-16 64-19 67-23 71-28 74-33 77-38 80-43 82-48 84-53 85-57 86-60 87-62 80-67 78-66 74-66 47-66 49-70 51-73z"/><path id="s72" d="M48-58 41-55 43-50 45-44 47-38 49-33 56-36 55-41 52-47 50-53zM84-52 76-55 75-49 74-44 72-39 70-34 68-29 65-24 62-20 58-16 54-12 50-9 45-6 40-3 35-1 30 1 36 8 41 5 46 3 51 0 56-3 60-7 65-11 69-16 72-21 75-26 78-31 80-36 82-42 83-47 84-49zM25-53 18-50 19-47 21-42 23-36 25-31 27-27 34-30 33-34 31-39 29-44 27-49z"/><path id="s73" d="M47-34 23-34 23-52 47-52zM55-34 55-52 80-52 80-34zM33-84 30-80 28-76 25-72 21-68 17-64 13-60 8-56 4-53 6-50 9-47 12-50 16-52 16-8 16-3 18 1 20 4 24 6 30 7 37 7 40 7 46 7 53 7 60 7 67 7 73 7 76 7 82 7 87 5 91 3 93-1 95-6 96-12 92-13 88-15 87-9 86-4 84-2 81 0 76 0 72 0 66 0 59 0 52 0 45 0 40 0 36 0 30 0 26-2 24-4 23-8 23-27 80-27 80-23 88-23 88-59 59-59 62-63 64-67 67-71 69-74 64-78 62-77 38-77 41-83zM23-59 26-63 30-67 33-71 58-71 56-67 53-63 50-59z"/><path id="s74" d="M48-64 47-59 46-53 45-48 43-42 42-37 39-30 37-24 34-19 32-16 29-14 27-14 24-14 21-16 19-20 17-25 17-32 17-36 18-41 20-46 23-50 27-54 31-58 36-61 41-63zM56-64 62-63 67-61 72-59 76-55 79-51 81-46 82-41 83-35 82-29 80-24 78-19 75-15 71-12 67-9 62-7 57-6 53-5 49-4 53 3 60 2 66 0 72-3 77-6 81-9 84-13 87-18 89-23 90-29 91-35 90-41 89-47 87-52 84-57 80-61 76-65 71-68 65-70 59-71 52-72 45-71 39-70 32-67 27-64 22-60 17-55 14-49 11-44 9-38 9-31 9-24 11-19 13-14 16-10 19-7 23-5 27-4 30-5 33-6 36-9 39-12 42-17 45-22 48-28 50-36 51-41 53-47 54-53 55-59z"/><path id="s75" d="M72-59 76-55 80-51 84-47 87-43 90-39 96-43 93-46 90-50 86-55 82-59 78-62zM21-62 19-58 16-54 13-50 9-47 4-44 7-42 10-40 14-43 18-47 22-51 26-55 29-60zM46-84 46-74 6-74 6-67 39-67 38-63 38-59 37-55 35-50 32-46 28-42 23-38 26-36 28-33 34-37 38-41 41-45 43-50 44-54 45-58 46-62 46-66 46-67 60-67 60-45 59-44 58-44 54-44 47-44 49-40 49-37 55-37 60-37 63-38 66-41 67-45 67-67 94-67 94-74 54-74 54-84zM39-39 36-35 33-32 29-28 24-25 19-22 13-19 7-16 10-14 12-11 17-13 21-15 25-18 29-20 32-17 36-13 39-10 43-8 38-6 33-4 28-2 22-1 16 0 10 1 5 2 7 5 8 8 14 7 19 6 25 5 30 4 35 2 41 1 45-1 50-3 55-1 59 1 64 3 69 4 74 5 80 7 86 7 92 8 94 5 96 1 90 1 84 0 78-1 73-2 68-4 63-5 58-7 62-10 66-13 70-16 74-20 77-24 80-28 75-32 73-31 42-31 45-34 47-37zM35-24 35-25 68-25 65-21 60-17 56-14 51-11 46-14 42-17 38-21z"/><path id="s76" d="M25-24 19-21 21-17 24-13 28-10 31-7 27-5 23-3 17-1 11 0 5 2 7 5 9 8 15 7 21 5 26 3 31 1 35-1 38-3 42-1 47 1 52 3 57 4 62 5 68 6 74 6 80 7 87 7 94 8 95 4 97 0 90 0 83 0 76-1 70-1 64-2 59-3 54-4 49-6 44-8 48-12 50-16 52-20 53-25 87-25 87-63 54-63 54-72 94-72 94-79 6-79 6-72 47-72 47-63 16-63 16-25 46-25 44-20 41-16 37-11 33-15 29-19zM23-41 47-41 47-37 47-34 46-31 23-31zM54-31 54-34 54-37 54-41 80-41 80-31zM23-57 47-57 47-47 23-47zM54-57 80-57 80-47 54-47z"/><path id="s77" d="M80-67 75-71 72-70 67-70 64-70 59-70 52-70 45-70 38-70 32-70 29-70 23-70 19-71 19-62 23-62 29-62 32-62 37-62 44-62 52-62 59-62 65-62 68-62 66-58 64-53 61-48 58-43 55-38 51-34 48-30 44-27 40-23 35-19 30-16 26-12 21-9 15-7 10-4 16 2 21 0 26-3 31-6 35-9 40-12 44-16 48-19 52-23 55-27 60-23 64-19 68-14 72-10 76-5 80-1 83 3 90-3 87-7 83-11 79-16 75-20 70-25 65-29 61-33 64-38 67-43 70-48 73-53 76-58 78-62 79-65z"/><path id="s78" d="M43-54 43-21 64-21 64-14 42-14 42-8 64-8 64 0 36 0 36 6 96 6 96 0 71 0 71-8 93-8 93-14 71-14 71-21 93-21 93-54 71-54 71-60 95-60 95-66 71-66 71-74 78-74 84-75 89-76 94-77 90-83 86-82 81-81 76-81 70-80 64-79 59-79 53-79 47-78 41-78 42-75 43-72 48-72 53-73 59-73 64-73 64-66 39-66 39-60 64-60 64-54zM50-35 64-35 64-27 50-27zM71-35 86-35 86-27 71-27zM50-48 64-48 64-40 50-40zM71-48 86-48 86-40 71-40zM36-83 32-81 27-79 22-78 16-77 10-75 4-74 6-72 6-69 11-69 16-70 21-71 21-56 5-56 5-49 20-49 18-44 16-39 14-34 11-29 8-25 6-21 3-17 5-14 7-10 9-14 12-18 14-22 17-27 19-31 21-36 21 8 29 8 29-35 32-31 35-26 38-23 42-29 40-32 36-36 32-40 29-43 29-49 41-49 41-56 29-56 29-73 33-74 37-75 41-77z"/><path id="s79" d="M40-82 38-78 36-73 34-70 39-68 42-71 44-75 46-80zM7-80 9-76 11-72 13-68 18-70 17-74 15-78 12-82zM58-42 85-42 85-33 58-33zM58-27 85-27 85-17 58-17zM58-57 85-57 85-48 58-48zM60-9 57-6 52-3 47 0 41 3 44 5 46 8 51 6 55 3 60 1 64-2 67-6zM75-5 80-2 84 1 89 5 92 8 98 4 94 1 90-3 85-6 81-9zM23-36 23-28 5-28 5-22 23-22 22-18 20-14 18-10 15-6 10-3 3 1 6 3 8 6 13 3 18 0 22-4 25-7 27-11 31-8 35-4 39-1 42 1 47-4 43-7 39-10 34-14 29-18 29-20 29-22 48-22 48-28 30-28 30-36zM23-83 23-66 5-66 5-60 21-60 18-56 15-53 11-49 7-46 4-44 6-42 8-39 12-42 16-45 20-49 23-54 23-39 30-39 30-53 34-50 38-47 41-44 44-42 48-47 45-49 39-53 34-56 30-59 30-60 47-60 47-66 30-66 30-83zM51-63 51-11 92-11 92-63 72-63 75-73 96-73 96-79 48-79 48-73 67-73 66-68 65-63z"/><path id="s80" d="M50-62 82-62 82-54 50-54zM50-75 82-75 82-68 50-68zM43-81 43-48 89-48 89-81zM33-43 33-36 47-36 44-32 40-27 36-23 32-19 27-16 30-14 32-12 37-15 41-19 45-23 56-23 52-19 49-14 45-10 41-6 37-3 33-1 36 2 38 4 42 1 46-2 50-6 53-10 57-14 60-19 62-23 72-23 70-18 67-13 64-8 60-3 56 1 52 4 55 6 58 8 62 5 65 1 68-3 71-8 74-13 76-18 78-23 86-23 85-15 84-8 84-4 83-1 82 1 80 2 79 2 75 2 70 1 71 4 72 8 77 8 82 8 85 7 88 5 89 3 90 0 91-4 92-10 93-17 93-26 94-28 94-29 50-29 53-33 55-36 96-36 96-43zM3-18 6-10 11-12 15-15 20-17 26-20 31-22 36-25 34-32 24-27 24-55 35-55 35-62 24-62 24-83 17-83 17-62 5-62 5-55 17-55 17-24 12-21 7-19z"/><path id="s81" d="M6-78 6-72 49-72 49-78zM88-83 84-81 80-79 75-77 70-76 65-74 60-73 54-74 54-48 53-43 53-38 53-33 52-27 51-22 50-17 48-12 45-7 42-2 38 3 41 5 44 8 47 3 51-2 53-7 55-12 57-17 59-22 60-28 60-33 61-38 61-43 78-43 78 8 86 8 86-43 97-43 97-50 61-50 61-66 67-68 73-69 79-71 84-73 90-75 94-77zM10-61 10-34 10-29 10-24 9-18 8-12 7-7 5-1 2 4 5 6 8 8 11 3 13-2 14-7 15-13 16-19 17-25 17-30 47-30 47-61zM17-54 39-54 39-37 17-37z"/><path id="s82" d="M44-78 44-71 93-71 93-78zM27-84 24-80 20-76 16-73 12-69 8-65 4-62 6-59 8-56 12-59 16-62 20-66 24-70 27-73 31-77 34-81zM39-50 39-43 73-43 73-2 72 0 70 0 67 1 61 1 54 0 56 4 57 8 64 8 69 8 73 7 76 7 79 4 80-2 80-43 96-43 96-50zM31-63 28-58 24-53 20-48 16-44 11-39 7-36 2-32 5-29 8-26 12-29 15-33 19-36 19 8 27 8 27-45 30-48 33-52 35-56 38-60z"/><path id="s83" d="M1 18 8 18 38-79 31-79z"/><path id="s84" d="M60-73 60-18 67-18 67-73zM84-82 84-2 83 0 81 1 78 1 73 1 66 1 68 4 69 8 75 8 80 8 84 7 87 7 90 4 91-2 91-82zM44-50 43-44 41-39 39-33 37-28 33-31 29-34 24-38 19-40 21-45 24-50zM6-79 6-72 23-72 22-66 20-61 18-55 15-49 13-44 10-39 6-35 2-30 5-28 8-26 10-28 13-32 15-35 20-32 25-28 30-25 34-22 31-17 28-13 24-9 21-6 17-3 13 0 8 3 11 5 14 8 19 5 25 1 29-4 34-9 38-15 42-22 45-29 48-37 51-46 52-56 48-57 46-57 26-57 28-62 30-67 31-72 56-72 56-79z"/><path id="s85" d="M40-75 40-68 58-68 57-59 57-51 56-43 55-35 53-27 51-20 47-13 43-7 38-2 31 2 34 5 36 8 43 3 49-2 54-9 58-16 60-24 62-32 64-41 64-50 65-59 65-68 86-68 86-55 86-44 85-34 85-26 84-19 84-14 83-9 82-6 82-4 81-2 79-1 77 0 74 0 69 0 63-1 65 3 66 7 71 7 76 7 80 7 84 6 88 2 89 1 90-2 91-6 91-11 92-17 92-24 93-33 93-44 94-57 94-71 94-74 94-75zM15-81 15-54 3-52 4-45 15-47 15-22 15-17 17-13 20-12 24-11 30-11 35-11 39-12 41-14 43-17 44-22 44-29 41-31 38-32 37-24 36-19 34-18 30-18 26-18 23-19 22-22 22-49 46-54 45-61 22-56 22-81z"/><path id="s86" d="M34-79 25-79 25-75 24-71 24-66 23-61 22-55 22-49 21-43 21-38 21-32 22-27 22-22 30-23 30-28 29-31 30-35 31-40 33-46 35-51 38-56 42-60 46-64 50-66 55-67 59-66 63-64 66-61 68-57 70-52 71-46 71-39 71-32 69-26 67-21 64-16 60-13 55-9 50-7 45-5 39-3 32-2 37 5 44 3 51 1 57-1 63-5 67-9 71-13 75-18 77-25 79-32 79-40 79-46 78-52 76-58 74-62 71-66 68-70 65-72 61-73 56-74 51-73 46-71 42-68 38-64 34-60 31-56 29-51 30-56 31-62 32-68 33-74z"/><path id="s87" d="M26-12 74-12 74-2 26-2zM26-18 26-28 74-28 74-18zM19-34 19 8 26 8 26 4 74 4 74 8 81 8 81-34zM24-84 24-75 9-75 9-69 24-69 24-65 24-60 6-60 6-54 22-54 20-50 18-47 14-43 10-39 4-36 7-34 9-31 14-34 18-37 22-41 25-44 27-48 32-44 37-40 41-37 46-42 42-45 38-48 34-51 29-54 30-54 47-54 47-60 31-60 31-65 32-69 45-69 45-75 32-75 32-84zM68-84 68-75 53-75 53-69 68-69 68-68 67-64 67-60 50-60 50-54 65-54 62-50 59-46 54-43 48-40 50-37 52-34 58-38 63-41 67-44 69-48 72-52 74-47 78-42 82-38 87-35 92-32 94-35 96-38 92-40 87-43 83-46 80-50 77-54 94-54 94-60 74-60 75-64 75-68 75-69 91-69 91-75 75-75 75-84z"/><path id="s88" d="M31-79 30-72 35-71 41-70 47-69 54-68 59-67 65-67 70-66 71-74 66-74 61-74 55-75 48-76 42-77 36-78zM73-50 68-56 66-55 63-55 59-54 54-54 47-53 41-53 35-52 30-52 27-52 22-52 18-52 19-43 22-44 27-44 31-45 36-45 42-46 48-46 53-46 58-47 54-43 50-39 45-34 40-29 35-24 30-19 25-14 21-11 18-7 17-6 14-3 12-1 19 4 22 0 26-4 30-8 34-12 37-16 40-18 43-21 47-22 51-20 53-16 54-13 55-8 56-5 59 0 62 2 66 4 72 4 76 4 81 3 86 3 90 2 91-6 87-5 82-5 77-4 72-4 66-5 63-9 62-15 60-21 57-26 52-28 50-28 48-28 51-31 56-35 60-39 64-43 67-46 70-48z"/><path id="s89" d="M5-78 9-74 14-69 17-65 20-61 26-65 23-69 20-73 15-78 11-82zM68-16 73-13 78-10 83-7 86-4 94-7 89-10 84-13 79-16 73-19zM50-19 46-16 41-14 36-11 31-9 34-7 36-4 42-7 47-10 52-13 56-17zM24-44 4-44 4-38 17-38 17-11 12-7 8-3 3 0 7 7 11 4 14 1 18-3 21-6 24-2 28 1 33 3 38 4 43 5 50 6 54 6 60 6 66 6 72 6 78 6 84 6 89 6 94 6 95 2 96-1 91-1 86-1 79-1 73-1 66-1 60-1 54-1 49-1 44-1 39-2 34-4 30-6 27-9 24-12zM70-49 70-42 53-42 53-49 46-49 46-42 31-42 31-36 46-36 46-26 28-26 28-20 95-20 95-26 77-26 77-36 92-36 92-42 77-42 77-49zM53-36 70-36 70-26 53-26zM32-68 32-58 33-53 35-51 41-50 45-50 50-50 54-50 58-51 60-53 62-58 58-59 56-61 55-56 53-56 47-56 42-56 39-56 38-58 38-63 58-63 58-80 30-80 30-75 52-75 52-68zM65-68 65-58 66-53 68-51 74-50 78-50 84-50 88-50 92-51 95-54 96-59 93-60 90-61 89-57 87-56 81-56 75-56 72-56 71-58 71-63 91-63 91-80 63-80 63-75 84-75 84-68z"/><path id="s90" d="M46-78 46-44 46-39 45-34 45-28 44-23 43-17 41-12 39-7 36-2 32 3 35 5 37 8 41 4 44-1 47-6 49-11 50-17 51-22 52-27 53-33 53-38 65-38 67-32 69-26 70-20 73-15 75-10 78-6 81-1 85 2 88 5 92 8 95 5 98 2 94-1 90-4 86-8 83-12 81-16 78-21 76-26 74-32 73-38 92-38 92-78zM53-71 85-71 85-45 53-45zM3-31 5-24 20-28 20-1 19 1 17 1 13 1 6 1 7 5 8 8 15 8 20 7 23 7 26 4 27-1 27-29 41-33 40-40 27-36 27-57 40-57 40-64 27-64 27-84 20-84 20-64 5-64 5-57 20-57 20-35z"/><path id="s91" d="M61-69 81-69 78-64 74-60 70-55 66-59 62-62 57-65zM64-84 62-80 58-76 54-72 50-68 45-64 39-61 41-59 44-56 48-59 52-61 57-58 61-55 65-51 60-49 56-46 51-44 46-42 40-41 43-38 44-35 50-37 56-39 62-42 67-45 72-48 77-52 81-57 85-62 88-67 91-73 86-76 85-75 67-75 69-79 72-83zM66-30 86-30 84-26 81-22 78-18 74-15 71-17 68-20 64-23 60-25 63-28zM70-46 67-42 64-39 61-35 56-31 51-27 46-24 40-21 43-18 45-16 50-18 54-21 58-19 62-16 66-13 69-10 64-8 60-5 54-3 49-1 44 0 38 2 40 5 42 8 49 6 56 4 63 1 69-2 75-6 80-11 85-16 90-21 93-28 96-35 91-37 90-37 72-37 75-41 77-45zM36-83 32-81 27-79 22-78 16-77 10-75 4-74 6-72 6-69 11-69 16-70 21-71 21-56 5-56 5-49 20-49 18-44 16-39 14-34 11-29 8-25 6-21 3-17 5-14 7-10 9-14 12-18 14-22 17-27 19-31 21-36 21 8 29 8 29-35 32-31 35-26 38-23 42-29 40-32 36-36 32-40 29-43 29-49 41-49 41-56 29-56 29-73 33-74 37-75 41-77z"/><path id="s92" d="M39 1 45 1 50 0 54-2 58-4 62-7 62-38 37-38 37-30 53-30 53-11 49-9 45-7 40-7 35-7 30-8 26-10 23-13 20-17 18-21 17-26 16-31 15-37 16-43 17-49 19-54 22-59 25-62 30-64 34-66 40-66 45-66 49-64 52-62 56-60 60-66 58-68 54-71 50-73 45-74 39-75 34-74 28-73 24-71 19-68 15-64 12-60 9-55 7-50 6-43 6-37 6-30 7-24 9-18 12-13 15-9 19-5 23-2 28 0 33 1z"/><path id="s93" d="M20 0 29 0 30-8 30-16 31-23 32-30 34-36 36-43 39-49 42-55 46-61 51-68 51-73 5-73 5-66 40-66 36-60 33-54 30-48 27-42 25-36 24-29 22-23 21-16 20-8z"/><path id="I94" d="M11-41 3-41 4-44 12-46 13-52 14-58 17-63 20-66 24-68 28-70 34-70 38-70 42-69 40-59 37-59 36-64 35-65 33-65 31-64 29-62 28-59 26-54 25-46 35-46 34-41 24-41 13 21 0 21z"/><path id="I95" d="M21-18 13-12 12-10 11-9 10-8 9-7 9-6 9-5 9-4 11-3 10 0 0 0-1-1-1-2-1-4 0-6 2-8 5-11 19-22 9-42 5-43 6-46 20-46 28-30 33-34 36-36 37-38 38-39 38-41 38-42 36-43 36-46 47-46 47-45 48-44 47-41 45-38 41-35 31-26 42-4 46-3 45 0 31 0z"/><path id="s96" d="M34 0 43 0 43-20 52-20 52-28 43-28 43-73 32-73 2-26 2-20 34-20zM34-28 12-28 28-52 30-56 32-60 34-63 34-59 34-54 34-50z"/><path id="r97" d="M21-77 27-77 42-9 43-7 44-5 45-4 48-4 48 0 31 0 31-4 34-5 35-6 35-7 34-8 31-28 16-28 13-10 13-9 12-8 12-7 13-6 14-4 15-4 16-4 16 0 2 0 2-4 4-4 5-5 6-7 7-9zM23-67 17-33 30-33z"/><path id="r98" d="M5-76 24-76 29-75 34-74 37-71 40-68 42-63 42-58 42-54 41-50 39-47 35-43 30-41 35-38 39-35 42-31 44-27 44-21 44-16 43-12 41-8 39-5 35-2 30-1 25 0 5 0 5-4 9-5 10-8 10-68 10-70 9-71 7-72 5-72zM16-43 22-43 26-43 30-45 33-48 35-52 35-58 35-62 34-66 31-69 28-70 24-71 20-71 17-70 16-66zM16-38 16-10 17-7 17-6 19-5 21-5 25-5 30-6 34-9 36-13 37-16 37-21 37-26 35-30 33-33 29-37 24-38z"/><path id="r99" d="M41-55 38-55 37-60 35-64 34-67 30-71 27-73 23-72 21-70 18-66 17-62 15-57 14-51 14-45 14-38 14-32 14-26 15-21 16-17 18-13 20-8 24-6 27-5 31-5 33-8 36-11 37-15 39-19 40-25 43-23 42-17 41-13 40-9 38-5 35-1 31 1 26 2 22 1 19-1 15-4 12-9 10-13 9-17 8-21 7-26 7-32 6-38 7-44 7-50 8-56 10-61 11-66 14-71 18-75 22-77 26-78 31-77 35-73 36-72 37-71 37-72 38-76 41-76z"/><path id="r100" d="M4-76 21-76 27-75 32-73 36-70 39-65 41-61 43-56 44-51 45-45 45-38 45-32 44-26 43-21 42-16 40-12 38-8 34-5 31-2 26-1 21 0 4 0 4-4 6-4 7-5 8-6 8-9 8-68 8-70 7-71 6-72 4-72zM15-67 15-10 15-7 16-6 17-5 19-5 22-5 26-6 30-9 33-14 35-17 36-22 37-27 38-33 38-39 38-45 37-51 36-56 35-60 33-65 30-68 26-70 21-71 19-71 17-71 15-70 15-69z"/><path id="r101" d="M5-76 41-76 42-57 38-57 37-63 35-68 32-70 28-71 21-71 19-71 17-70 17-69 17-67 17-43 23-43 26-44 29-46 29-49 30-53 33-53 33-27 30-27 29-32 28-35 26-37 23-38 17-38 17-9 17-7 18-6 19-5 22-5 28-5 33-6 37-9 38-12 39-16 40-21 43-21 42 0 5 0 5-4 8-4 9-5 10-7 10-8 10-67 10-70 9-71 8-72 5-72z"/><path id="r102" d="M7-76 42-76 43-55 39-55 39-60 37-64 36-67 33-70 29-71 22-71 21-71 19-70 19-69 19-67 19-43 24-43 27-43 29-45 30-48 31-52 34-52 34-27 31-27 30-32 29-35 27-37 24-38 19-38 19-8 19-6 20-5 21-4 24-4 24 0 7 0 7-4 9-4 11-5 12-6 12-8 12-67 12-70 11-71 9-72 7-72z"/><path id="r103" d="M38 2 36-8 34-4 31-1 28 1 24 2 21 1 17-1 14-4 12-8 10-12 8-17 7-21 6-27 6-32 6-38 6-45 7-51 8-56 9-62 11-66 14-71 18-75 21-77 26-78 30-77 33-76 35-73 36-72 37-71 38-73 39-76 42-76 42-56 38-56 36-63 35-67 31-71 26-73 23-72 20-69 17-65 16-60 15-56 14-50 13-44 13-38 13-31 14-25 15-19 16-14 18-10 21-5 25-4 29-5 33-9 35-14 35-20 35-28 35-31 34-32 33-33 30-34 30-37 47-37 47-34 44-33 43-32 42-30 42-27 42 2z"/><path id="r104" d="M4-76 20-76 20-72 18-72 17-71 16-70 16-67 16-43 34-43 34-67 34-70 34-71 32-72 30-72 30-76 46-76 46-72 43-72 42-71 41-70 41-67 41-8 41-6 42-5 43-4 46-4 46 0 30 0 30-4 32-4 34-5 34-6 34-8 34-38 16-38 16-8 16-6 17-5 18-4 20-4 20 0 4 0 4-4 7-4 8-5 9-6 9-8 9-67 9-70 8-71 7-72 4-72z"/><path id="r105" d="M15-76 35-76 35-72 32-72 30-71 29-70 28-67 28-9 29-6 30-5 32-4 35-4 35 0 15 0 15-4 19-4 20-5 21-7 22-9 22-67 21-70 20-71 18-72 15-72z"/><path id="r106" d="M21-76 40-76 40-72 37-72 35-71 34-69 34-67 34-18 34-13 33-8 31-5 28-1 24 1 20 2 15 1 11-1 8-5 6-10 7-11 7-13 9-15 12-15 14-15 16-13 17-12 17-10 16-7 14-5 16-3 19-3 23-4 26-7 27-11 28-18 28-67 27-70 26-71 24-72 21-72z"/><path id="r107" d="M5-76 21-76 21-72 19-72 17-71 17-70 16-67 16-38 31-67 32-69 32-70 31-71 28-72 28-76 43-76 43-72 41-72 39-71 37-69 36-67 26-46 40-9 41-7 43-5 44-4 46-4 46 0 30 0 30-4 33-4 34-6 33-8 33-9 22-39 16-29 16-8 17-6 17-5 19-4 21-4 21 0 5 0 5-4 7-4 9-5 10-6 10-8 10-67 10-70 9-71 7-72 5-72z"/><path id="r108" d="M8-76 26-76 26-72 23-72 21-71 20-69 20-66 20-10 20-8 21-6 22-5 25-5 28-5 32-6 34-8 36-12 38-17 39-23 43-23 41 0 8 0 8-4 10-4 12-5 13-7 13-10 13-66 13-69 12-71 10-72 8-72z"/><path id="r109" d="M1-76 14-76 25-21 36-76 48-76 48-72 46-72 45-71 45-70 44-68 44-8 45-6 45-5 46-4 48-4 48 0 34 0 34-4 36-4 37-5 38-6 38-8 38-66 26-8 22-8 10-67 10-8 10-6 10-5 12-4 14-4 14 0 1 0 1-4 3-4 4-5 5-6 5-8 5-68 5-70 5-71 3-72 1-72z"/><path id="r110" d="M4-76 17-76 37-14 38-14 38-67 37-69 36-71 35-72 32-72 32-76 47-76 47-72 45-72 43-71 42-69 42-67 42 1 36 1 14-67 13-67 13-8 13-6 14-5 16-4 19-4 19 0 4 0 4-4 6-4 8-5 9-6 9-8 9-67 9-70 8-71 6-72 4-72z"/><path id="r111" d="M25-78 29-77 33-75 36-72 39-67 40-63 42-59 43-54 44-49 44-44 45-38 44-31 44-25 43-19 41-14 39-9 36-4 33-1 29 1 25 2 21 1 17-1 14-4 11-9 9-14 7-19 6-25 6-31 5-38 6-44 6-50 7-56 8-60 10-65 12-69 16-74 20-77zM25-73 22-72 19-69 17-65 16-60 14-56 14-50 13-44 13-38 13-31 14-26 14-20 16-16 17-12 19-7 22-4 25-4 29-5 33-10 34-14 35-19 36-25 37-31 37-38 37-45 36-52 35-58 34-63 32-67 29-71z"/><path id="r112" d="M6-76 25-76 31-75 35-74 39-71 41-67 43-63 44-59 44-54 44-49 43-45 41-41 39-38 34-35 29-34 24-33 18-33 18-8 18-6 19-5 20-4 23-4 23 0 6 0 6-4 8-4 10-5 11-6 11-8 11-67 11-70 10-71 8-72 6-72zM18-38 24-38 28-39 32-41 35-44 36-48 37-54 36-60 35-64 33-67 30-70 25-71 22-71 20-71 18-70 18-69 18-67z"/><path id="r113" d="M47-1 45 5 43 9 39 10 36 9 33 5 31-1 28 1 25 2 21 1 17 0 14-3 11-7 10-11 8-15 7-20 6-26 5-31 5-38 5-43 6-49 6-54 8-58 9-63 11-67 14-72 17-75 21-77 25-78 29-77 32-75 35-72 38-68 40-64 42-60 43-55 44-49 44-44 45-38 44-32 44-26 43-20 42-16 40-11 38-8 36-4 38 2 40 4 41 3 43 1 44-1 44-4zM17-8 16-11 16-15 16-20 17-24 20-28 24-29 27-28 29-26 31-23 33-18 34-11 35-15 36-20 37-25 37-31 38-38 37-44 37-50 36-55 35-60 34-64 31-69 28-72 25-73 22-72 19-70 17-66 15-62 14-57 13-51 12-45 12-37 12-31 13-25 13-20 14-15 15-11 16-8zM30-8 29-14 27-19 25-21 23-22 21-20 20-14 20-8 22-5 25-4 27-4 29-5 30-7z"/><path id="r114" d="M4-76 24-76 29-75 33-74 37-70 39-67 41-62 42-56 41-51 40-47 37-43 33-40 27-38 32-36 34-32 36-28 37-24 39-18 41-12 42-8 43-6 45-4 48-4 48 0 36 0 35-8 33-14 31-20 30-24 29-28 28-31 25-35 21-36 16-36 16-8 16-6 17-5 18-4 20-4 20 0 4 0 4-4 7-4 8-5 9-6 9-8 9-67 9-70 8-71 7-72 4-72zM16-41 21-41 27-42 31-45 33-48 34-52 35-56 34-62 33-66 31-69 27-70 23-71 19-71 18-71 16-70 16-69 16-67z"/><path id="r115" d="M8-26 11-26 12-19 14-14 16-9 18-6 22-4 25-4 29-4 32-7 35-12 35-18 35-23 32-27 29-31 26-35 20-40 16-44 13-48 10-53 9-57 8-62 9-66 10-70 13-73 16-76 20-77 24-78 29-77 34-73 35-73 36-74 37-77 40-77 40-56 37-56 35-62 33-66 30-70 28-72 24-73 20-71 17-68 16-65 15-61 16-57 18-52 21-49 24-46 30-41 34-37 37-34 39-31 41-27 42-23 43-18 42-12 41-8 38-3 34 0 30 1 26 2 22 1 18 0 15-3 14-4 13-4 12-3 11 1 8 1z"/><path id="r116" d="M6-76 44-76 45-56 42-56 41-63 39-67 36-70 32-71 28-71 28-8 29-6 29-5 31-4 34-4 34 0 16 0 16-4 19-4 21-5 21-6 22-8 22-71 18-71 14-70 11-67 9-62 8-56 5-56z"/><path id="s117" d="M26 1 31 1 35 0 39-2 43-5 46-9 48-13 50-18 50-24 50-30 48-36 45-40 42-43 38-45 33-47 28-47 22-46 17-44 19-66 47-66 47-73 11-73 9-39 14-36 17-38 21-40 26-40 31-40 35-37 38-34 40-29 41-24 40-18 38-13 35-9 30-7 25-6 19-7 15-9 11-11 7-14 3-8 6-6 10-3 14-1 20 1z"/><path id="s118" d="M30 1 35 1 39-1 43-4 46-7 49-12 51-17 51-22 51-29 49-34 47-38 44-41 40-44 36-45 31-46 26-45 22-43 18-40 14-37 15-45 16-51 18-56 20-60 23-63 26-66 29-67 33-67 37-66 41-64 45-62 50-67 47-70 43-72 38-74 33-75 28-74 24-73 21-71 17-69 14-66 11-61 9-56 7-50 6-43 6-35 6-28 7-22 8-16 10-12 13-8 15-5 19-2 22 0 26 1zM14-29 18-34 22-37 26-38 29-39 34-38 38-36 40-32 42-28 42-22 42-17 40-12 37-9 34-7 30-6 26-7 22-9 19-12 17-17 15-22z"/><path id="s119" d="M28 1 34 1 39-1 43-3 46-6 49-9 50-13 51-18 50-23 48-28 46-31 42-34 39-37 42-41 45-45 47-50 48-55 48-60 46-65 43-69 39-72 34-74 28-74 23-74 18-72 14-69 11-66 9-61 8-56 9-50 11-46 14-42 18-39 18-38 14-36 10-33 7-29 5-24 5-18 5-14 7-9 10-6 13-3 17-1 22 1zM33-40 28-42 23-44 20-47 17-51 16-56 17-61 20-64 23-67 28-68 33-67 37-64 40-60 40-55 40-49 37-44zM28-6 23-6 19-8 16-11 13-15 13-19 13-24 16-28 19-32 23-36 28-34 32-31 36-29 39-26 41-22 42-18 41-13 38-9 34-6z"/><path id="s120" d="M24 1 28 1 32 0 35-2 39-5 42-8 45-13 47-18 49-24 50-31 50-40 50-47 49-54 47-59 44-64 42-68 38-71 34-73 30-74 25-75 21-74 16-72 12-70 9-66 7-62 5-57 4-51 5-45 6-40 9-35 12-32 15-30 20-28 25-28 29-28 34-30 38-33 42-37 41-29 40-22 38-17 36-13 33-10 30-8 27-7 23-6 19-7 14-9 11-12 6-6 9-3 13-1 18 1zM41-44 38-40 34-37 30-35 26-35 21-35 18-37 15-41 14-45 13-51 14-56 15-61 18-65 21-67 26-68 30-67 34-65 37-62 39-57 41-51z"/><path id="s121" d="M28 1 32 1 36 0 39-2 42-5 44-8 47-12 48-17 50-23 50-30 51-37 50-44 50-51 48-56 47-61 44-65 42-69 39-71 36-73 32-74 28-75 24-74 20-73 17-71 14-69 11-65 9-61 7-56 6-51 5-44 5-37 5-30 6-23 7-17 9-12 11-8 14-5 17-2 20 0 24 1zM28-6 24-7 21-8 19-11 17-16 15-21 14-28 14-37 14-45 15-52 17-58 19-62 21-65 24-67 28-67 31-67 34-65 37-62 39-58 40-52 41-45 42-37 41-28 40-21 39-16 37-11 34-8 31-7z"/><path id="s122" d="M4 0 50 0 50-8 30-8 26-8 22-8 18-7 23-12 28-17 32-22 36-26 39-31 42-35 44-40 46-44 47-49 47-53 47-58 45-63 43-67 40-70 36-73 31-74 26-75 20-74 16-73 11-70 8-68 4-64 9-59 13-62 16-65 20-67 24-67 29-66 33-65 36-61 37-57 38-53 38-49 37-45 35-41 33-36 30-32 26-27 22-22 17-17 11-11 4-5z"/><path id="s123" d="M26 1 32 1 37-1 41-3 45-6 48-10 49-14 50-20 49-25 47-30 44-34 39-36 34-38 34-39 39-41 42-43 45-47 47-51 47-56 47-62 45-66 41-70 37-72 32-74 26-75 20-74 15-72 10-69 6-66 10-60 15-64 20-66 26-67 31-66 35-64 37-60 38-56 38-52 36-48 34-46 30-43 25-42 18-42 18-35 25-34 31-33 36-31 38-28 40-24 41-20 40-15 38-11 35-9 31-7 26-6 20-7 15-9 11-12 8-15 3-9 6-6 10-3 15-1 20 1z"/><path id="r124" d="M54-49 54-47 53-42 52-36 51-31 50-26 48-21 46-16 44-11 41-7 38-2 35 2 30 7 27 4 31 0 34-5 37-10 40-15 41-20 43-25 44-30 46-36 47-42 47-48 48-54 48-60 48-67 48-72 34-72 33-76 73-76 77-80 81-76 83-73 83-72 82-72 79-70 78-65 77-59 75-54 73-49 85-49 88-53 93-48 94-46 94-45 93-44 91-43 89-37 87-32 85-28 82-23 80-19 76-15 80-11 84-8 89-4 93-1 98 2 95 5 93 8 88 4 84 1 80-3 76-6 73-10 69-7 65-3 60 0 56 2 52 5 47 7 43 8 41 5 46 3 51 0 55-3 60-7 64-11 69-15 66-19 63-24 61-28 59-33 57-38 55-43 54-48zM73-20 76-24 78-28 81-33 83-39 84-44 71-44 71-43 70-42 70-40 64-42 66-47 68-52 69-56 71-61 72-67 74-72 55-72 55-66 55-60 56-54 58-49 59-44 61-38 64-33 66-29 69-24zM24-58 24-37 29-39 33-41 38-43 38-39 34-37 30-35 26-33 24-32 24 1 23 5 20 7 17 8 14 8 14 6 12 4 9 4 5 3 5-1 11 0 16 0 17 0 18-1 18-2 18-29 14-28 10-26 9-23 8-22 6-24 3-31 9-33 14-34 18-35 18-58 5-58 4-62 18-62 18-84 24-84 28-83 29-82 28-80 24-79 24-62 28-62 32-68 35-65 38-61 36-58z"/><path id="r125" d="M37-64 46-70 41-72 37-75 34-79 37-82 40-79 43-77 47-76 52-75 58-75 62-74 65-72 66-69 65-66 62-65 61-66 60-66 58-66 55-66 51-66 45-64 39-61zM24-51 25-48 27-47 28-47 31-49 37-51 43-53 48-54 53-55 57-55 62-55 66-54 70-52 72-49 74-46 76-42 76-37 77-32 76-26 75-21 73-16 70-11 67-7 63-4 59-1 54 1 49 3 43 5 37 6 34 3 41 1 47-1 52-4 56-7 60-10 63-14 66-18 67-23 68-27 69-33 68-38 68-42 67-46 65-48 63-50 60-50 57-51 53-50 48-49 44-48 39-45 35-43 30-39 28-38 26-37 24-38 21-41 20-44 20-47 20-48 20-49z"/><path id="r126" d="M88 10 84 6 81 3 78-1 75-6 73-10 70-16 68-21 67-27 66-33 66-38 66-43 67-48 68-54 70-59 72-64 75-69 78-74 81-78 84-82 88-85 93-85 89-81 85-76 82-72 80-67 77-62 76-58 74-53 73-48 73-43 72-38 73-32 73-27 75-22 76-16 79-11 81-6 84-2 86 1 90 5 93 10z"/><path id="r127" d="M68-65 68-58 78-58 82-61 86-58 89-55 87-53 68-53 68-45 78-45 82-49 86-46 89-43 88-41 68-41 68-32 83-32 87-37 90-34 94-31 92-28 47-28 47-24 41-24 41-58 38-55 35-51 32-49 29-52 33-55 36-60 39-64 41-69 44-74 46-79 48-84 54-82 56-80 55-78 52-78 50-74 48-69 62-69 64-74 66-79 67-84 74-81 77-79 76-78 73-77 70-73 67-69 81-69 86-74 90-71 93-68 91-65zM62-65 47-65 47-58 62-58zM47-32 62-32 62-41 47-41zM62-53 47-53 47-45 62-45zM53-11 53 9 47 9 47-11 5-11 4-16 47-16 47-24 52-23 56-23 57-21 56-20 53-18 53-16 84-16 89-21 93-18 96-14 95-11zM7-70 12-67 16-65 19-62 19-60 19-58 17-56 16-55 14-55 13-56 12-58 11-61 8-64 5-67zM38-74 22-44 21-41 21-39 21-37 21-35 22-31 22-27 22-25 21-24 20-23 18-23 15-24 14-25 14-26 15-27 15-32 15-34 15-38 13-40 10-41 6-41 6-45 8-45 10-45 14-46 17-49 20-52 23-57 26-61 29-66 32-71 34-76zM14-83 18-81 22-79 24-77 26-75 27-73 27-71 25-70 24-69 22-68 21-69 20-71 18-74 15-78 12-81z"/><path id="r128" d="M56-2 82-2 88-8 92-5 96 0 94 3 5 3 4-2 23-2 23-50 28-50 32-49 33-47 32-46 29-44 29-2 49-2 49-68 10-68 9-73 77-73 83-79 87-76 91-71 90-68 56-68 56-38 73-38 78-44 82-41 85-37 83-34 56-34z"/><path id="r129" d="M53-34 53-25 77-25 80-29 85-25 87-22 87-21 86-21 84-19 84-5 83-1 81 1 78 2 74 3 73 1 71-1 68-1 63-2 63-6 68-6 74-5 76-6 77-6 78-7 78-8 78-20 53-20 53 9 47 9 47-20 22-20 22 3 16 3 16-28 19-27 23-25 47-25 47-34 31-34 31-31 25-31 25-57 28-56 31-54 68-54 72-58 76-54 78-52 78-51 77-50 75-49 75-31 69-31 69-34zM31-39 69-39 69-50 31-50zM47-66 47-85 53-84 56-83 57-82 56-81 53-79 53-66 63-66 65-70 68-74 70-78 72-82 77-80 80-78 81-76 80-75 76-75 72-70 68-66 85-66 88-70 93-66 95-63 96-61 96-60 95-60 91-59 88-54 84-50 81-52 83-57 85-62 17-62 16-56 14-51 12-48 9-47 8-47 6-49 5-50 4-51 5-52 6-54 9-58 11-61 12-66 13-71 16-70 17-68 17-66zM22-82 28-79 32-76 34-73 35-71 35-69 34-68 32-67 30-66 29-67 28-68 26-72 23-76 20-79z"/><path id="r130" d="M56-58 59-58 60-61 61-66 61-67 35-67 34-72 62-72 62-76 63-80 63-84 70-83 73-81 72-80 69-79 68-75 68-72 84-72 88-77 92-74 96-70 94-67 67-67 66-62 65-58 78-58 82-61 87-57 88-55 88-54 85-52 85-8 79-8 79-12 56-12 56-6 50-6 50-60 54-59zM56-53 56-44 79-44 79-53zM56-40 56-31 79-31 79-40zM56-26 56-17 79-17 79-26zM21-56 25-55 26-53 25-52 22-50 22 9 16 9 16-46 14-41 11-36 8-32 5-28 2-30 5-34 8-39 10-44 12-49 14-54 16-60 18-65 20-71 22-78 23-84 30-82 33-79 31-78 28-77 27-72 25-66 23-61zM39 3 39 9 33 9 33-50 40-49 43-47 42-46 39-44 39-1 85-1 90-7 94-3 97 0 96 3z"/><path id="r131" d="M7 10 11 5 15 0 18-4 20-9 23-14 24-18 26-23 27-28 27-33 28-38 27-43 27-49 25-54 24-60 21-65 19-70 16-74 14-77 10-81 7-85 12-85 16-82 19-78 22-75 25-70 27-66 30-60 32-54 33-49 34-43 34-38 34-33 33-28 32-22 30-17 28-12 25-7 22-2 19 2 16 6 12 10z"/><path id="r132" d="M19-17 23-17 27-14 30-12 31-8 32-4 31-1 30 3 27 6 23 8 19 8 16 8 13 7 11 5 9 4 7 0 6-5 6-7 7-10 9-13 12-15 15-17 17-17zM19-13 17-13 15-12 12-9 11-4 11-2 12 0 15 3 19 4 22 3 25 2 27-1 27-4 27-8 24-11 22-12z"/><path id="r133" d="M40-23 44-27 48-32 51-36 55-41 59-46 62-51 65-56 68-62 71-67 74-73 81-70 83-67 82-66 78-65 74-59 71-54 67-48 64-43 60-38 56-33 53-29 49-24 45-20 41-16 40-15 40-5 40-3 41-2 45-1 53-1 59-1 63-2 66-2 68-3 69-6 70-9 71-15 71-22 75-20 75-15 75-11 75-6 76-3 77-3 79-2 78 1 77 3 75 4 71 4 67 4 63 4 58 5 52 5 46 5 41 4 38 4 35 2 34 0 34-2 33-4 33-10 30-7 25-4 21-1 17 2 12 4 7 6 4 3 9 0 15-3 20-6 25-9 29-13 33-17 33-59 39-59 42-58 44-56 43-55 40-53zM35-82 42-78 48-75 53-72 56-69 59-67 60-64 61-62 61-60 59-59 58-58 57-58 55-58 54-60 51-64 47-68 43-72 38-75 33-79zM76-49 80-45 83-41 87-37 90-33 93-28 95-23 96-19 96-17 95-16 93-14 91-14 89-15 88-17 87-22 85-27 83-32 80-37 77-41 73-46zM19-50 23-48 22-42 21-36 20-31 19-26 17-22 15-19 12-15 9-13 7-14 6-15 5-16 5-17 5-19 6-20 9-24 12-28 14-33 16-38 18-43z"/><path id="r134" d="M78-39 21-39 21-35 15-35 15-66 18-64 21-63 35-63 35-73 6-73 5-78 82-78 87-83 91-80 95-76 94-73 63-73 63-63 78-63 81-67 86-63 88-61 88-60 87-59 84-57 84-36 78-36zM42-58 42-44 57-44 57-58zM42-63 57-63 57-73 42-73zM78-44 78-58 63-58 63-44zM21-58 21-44 35-44 35-58zM29-10 27-8 26-6 20-9 24-13 27-17 30-21 33-24 5-24 4-29 36-29 39-34 42-39 48-37 51-35 49-34 46-33 45-31 44-29 83-29 88-34 93-31 96-27 94-24 73-24 71-20 68-16 65-11 62-7 68-5 73-4 78-3 82-1 85 0 89 2 91 4 91 5 90 7 89 8 88 9 86 8 85 8 81 6 76 4 70 2 64-1 57-3 53 0 48 3 43 5 37 6 32 7 27 8 21 9 14 9 8 9 6 5 13 5 20 4 26 3 32 2 37 1 42-1 47-3 51-5 45-6 41-7 36-8 32-9zM32-13 36-13 41-12 48-10 55-8 58-12 61-16 64-20 66-24 40-24 38-21 35-17z"/><path id="r135" d="M64-45 68-43 67-39 66-34 66-32 66-29 67-23 68-18 73-16 78-14 83-11 87-7 89-3 88 0 85 1 83 0 81-2 76-6 72-9 68-11 68-10 68-9 68-5 66-1 64 2 61 4 57 5 52 5 47 5 43 4 39 2 35-1 33-4 32-8 33-11 35-14 38-17 42-19 47-20 52-20 57-20 61-19 61-23 60-26 60-30 60-33 61-38 62-42zM61-14 56-15 51-15 46-15 42-13 39-11 38-8 38-6 41-3 45-2 51-1 55-2 59-3 61-6 61-10 61-12 61-13zM33-80 34-81 36-81 39-80 42-79 44-77 45-74 45-73 44-71 43-68 41-65 41-64 41-63 45-65 47-67 49-68 51-68 54-67 56-66 56-65 56-64 55-62 52-61 46-59 38-57 38-56 35-51 33-45 30-40 27-35 25-31 22-26 19-22 16-18 14-16 11-18 10-21 11-24 12-26 15-30 18-33 21-37 24-42 26-46 29-51 31-56 29-56 27-56 22-56 18-58 15-60 13-63 16-66 20-62 25-61 30-61 34-62 36-69 37-73 35-76 31-77zM73-49 77-51 81-51 82-51 82-52 82-53 80-55 77-58 74-60 69-62 71-66 77-64 82-61 86-59 89-56 90-53 91-49 90-47 89-45 88-44 87-44 85-44 84-45 81-46 78-47 76-47 75-46z"/><path id="r136" d="M25-44 74-44 77-47 82-43 84-41 84-40 83-40 81-38 81-7 75-7 75-9 24-9 24-6 18-6 18-46 21-45zM24-39 24-34 75-34 75-39zM75-14 75-19 24-19 24-14zM75-24 75-29 24-29 24-24zM62-64 60-60 57-57 53-54 49-51 44-49 38-47 32-45 30-49 36-50 41-52 46-55 50-58 53-61 57-66 58-71 47-71 44-68 40-64 36-61 33-64 36-67 39-70 42-74 44-77 46-81 47-85 54-83 56-81 55-80 52-79 51-77 50-76 84-76 87-79 92-75 94-72 94-71 93-70 89-70 87-67 84-64 80-61 77-64 80-68 83-71 63-71 64-67 66-63 70-60 74-57 79-54 84-52 89-50 96-49 93-46 91-43 86-45 81-46 77-49 73-51 69-54 66-57 64-60zM9-82 16-79 22-77 26-75 28-73 29-71 29-70 28-68 27-67 26-67 24-67 23-68 20-72 16-74 12-77 7-79zM35-61 35-57 31-55 26-53 21-51 16-49 11-47 10-44 9-44 7-46 4-52 10-53 15-54 20-56 25-57 30-59zM2 5 9 4 15 2 21 0 26-2 31-4 35-7 40-3 42-1 42 0 40 0 39 0 37 0 32 2 26 4 21 6 15 7 10 8 4 9zM58-7 64-6 70-5 75-4 80-3 84-2 88-1 92 2 94 4 94 6 93 7 91 8 90 9 89 9 88 8 84 6 80 4 75 2 69 0 63-2 56-4z"/><path id="r137" d="M21-40 5-40 4-45 22-45 22-84 27-83 31-83 32-81 31-80 28-78 28-45 36-45 40-50 43-47 46-43 44-40 28-40 28-34 34-30 39-26 42-23 44-20 45-17 44-16 42-14 41-14 40-13 39-14 38-15 35-20 32-25 28-29 28 9 22 9 22-28 19-23 16-18 12-14 9-9 5-4 2-7 6-12 9-17 12-21 14-26 17-31 19-35zM76-25 76-83 82-82 85-81 86-80 85-78 82-77 82-27 87-28 90-35 94-32 97-28 96-25 83-22 83 9 76 9 76-21 49-14 46-18zM54-74 60-71 64-68 68-65 70-62 71-59 70-58 69-56 67-55 66-55 65-56 64-57 62-61 60-64 56-68 52-71zM7-77 10-72 13-67 15-62 16-59 17-55 16-51 12-50 11-51 10-53 10-59 8-64 6-70 4-75zM51-53 57-50 61-47 65-44 67-40 68-37 68-35 66-34 64-33 63-33 62-33 61-35 59-39 57-43 53-46 49-50zM31-52 33-57 35-61 37-67 38-72 40-77 46-75 49-72 48-71 45-70 42-65 40-60 37-55 34-50z"/><path id="r138" d="M57-49 55-44 52-39 50-36 46-38 49-43 51-48 53-53 55-58 56-64 57-68 58-73 59-78 60-84 66-83 69-81 70-80 69-79 66-78 65-72 64-67 62-63 85-63 89-68 93-65 96-61 95-58 86-58 86-57 85-51 84-45 83-39 81-34 79-29 77-24 74-19 78-15 81-11 85-7 89-4 93-1 98 2 95 4 92 7 87 4 83 0 78-5 75-9 71-13 68-9 64-5 60-1 55 2 50 6 45 8 43 5 48 2 52-1 56-5 60-9 64-14 68-19 65-23 63-28 62-33 60-38 58-43zM60-56 61-50 63-44 64-39 66-34 68-29 71-24 73-30 75-35 77-40 78-46 79-52 80-58 61-58 60-57zM22-59 5-59 4-63 25-63 25-83 32-83 35-81 34-80 31-78 31-63 43-63 46-68 49-65 52-61 50-59 31-59 31-56 38-53 43-51 46-48 47-46 47-45 46-43 45-42 44-42 43-42 42-43 39-47 35-50 31-52 31-39 25-39 25-54 22-50 18-47 14-43 10-41 5-38 3-41 7-44 11-47 15-50 18-54zM33-4 30-1 26 1 22 4 17 6 12 7 6 8 4 5 10 3 15 1 20-1 24-4 28-7 25-9 21-11 16-13 15-11 13-9 8-11 11-16 14-21 16-26 4-26 3-31 19-31 20-35 22-39 28-36 30-34 29-33 26-33 25-32 25-31 43-31 47-35 50-32 53-29 52-26 44-26 42-21 40-16 38-12 36-9 41-6 44-4 45-2 45 0 44 1 43 2 42 3 41 2 40 1 37-2zM23-26 21-21 18-16 23-14 27-13 31-11 33-16 35-21 37-26zM8-80 14-77 18-73 19-71 19-69 19-67 18-66 16-65 15-65 14-65 13-67 11-71 9-75 6-78zM35-67 38-71 41-76 43-81 48-78 50-76 49-75 47-74 44-71 41-68 38-65z"/><path id="r139" d="M38-59 40-56 44-54 47-53 52-53 55-53 60-53 65-54 65-59 65-63 65-67 65-68 64-72 62-74 60-75 58-76 60-79 65-79 69-78 72-75 73-72 73-71 72-70 72-67 72-62 71-56 71-55 77-57 81-58 82-60 84-60 86-60 88-59 89-57 90-56 89-54 86-52 82-51 77-50 71-49 71-43 71-37 72-32 72-26 72-20 78-19 82-17 87-16 91-13 95-10 97-6 97-5 96-4 95-3 94-2 92-3 90-4 86-7 82-10 77-12 73-14 73-13 73-12 73-11 73-10 72-6 71-3 68 0 65 2 61 3 56 3 51 3 47 2 42 0 39-3 37-6 36-10 37-14 39-17 43-19 47-21 52-22 58-22 61-22 66-21 66-27 66-33 65-38 65-44 65-48 60-48 56-47 52-47 47-48 43-49 40-50 38-53 35-56zM66-16 60-17 55-17 50-17 46-16 43-13 42-10 43-7 46-4 50-3 55-2 60-3 64-5 66-8 66-12zM25-29 27-26 24-20 22-15 21-11 21-7 21-6 21-5 21-2 21 0 21 3 19 4 16 3 14-1 13-5 11-9 11-15 11-21 11-25 11-30 12-35 12-39 13-44 15-50 17-58 17-61 17-63 18-66 18-69 17-73 15-76 18-79 21-77 24-74 26-71 27-67 26-65 25-62 23-57 21-51 19-46 18-40 17-34 17-29 16-24 16-21 16-18 17-14z"/><path id="r140" d="M8-17 13-14 18-12 22-9 25-6 27-2 28 2 28 4 27 5 26 7 23 8 21 7 20 6 19 5 19 3 16-2 13-6 10-10 6-14z"/><path id="r141" d="M33-35 38-38 42-42 46-47 52-43 54-41 53-40 51-40 50-40 49-40 46-38 42-36 37-34 37-33 40-31 41-28 40-27 39-25 38-24 37-24 36-24 35-25 31-29 27-32 23-35 18-38 20-41 25-39 30-37zM83-21 78-21 73-20 68-20 62-19 57-19 53-18 53 9 46 9 46-18 40-17 36-17 31-17 25-16 19-16 13-16 12-13 10-12 9-13 8-16 6-22 13-22 19-22 25-22 30-22 34-22 37-23 42-25 46-28 51-30 55-33 59-37 63-40 67-43 73-40 75-38 74-37 71-36 70-36 66-34 62-31 57-29 51-26 46-23 54-23 59-23 64-24 70-24 75-24 80-25 76-28 71-31 73-34 80-31 86-27 90-24 92-22 93-19 93-17 91-16 90-15 89-15 87-15 86-17 85-19zM53-69 53-63 73-63 78-67 82-64 85-61 83-58 53-58 53-52 82-52 88-57 92-54 96-50 94-47 6-47 5-52 46-52 46-58 16-58 15-63 46-63 46-69 10-69 9-74 46-74 46-84 52-84 56-83 57-82 56-81 53-79 53-74 78-74 84-79 87-76 91-72 89-69zM4 3 9 1 13-1 18-4 22-7 27-10 31-14 37-10 39-8 38-7 36-6 35-6 34-7 29-4 25-1 20 1 16 3 11 5 6 6zM62-15 69-13 74-11 79-9 83-7 86-5 91-2 92 1 92 2 91 4 89 5 88 5 87 5 86 4 83 1 80-1 76-4 71-6 66-9 60-12z"/><path id="r142" d="M43-79 45-80 47-80 51-80 54-78 56-76 57-74 57-73 56-72 56-68 56-60 59-61 62-62 67-63 70-65 72-65 74-65 77-65 79-64 81-63 81-61 80-59 78-58 74-57 70-57 63-56 56-55 56-54 56-50 56-46 56-42 56-41 61-42 65-43 68-44 70-45 72-45 76-45 78-43 79-42 79-41 78-39 75-38 72-37 68-36 62-36 56-35 56-34 56-30 56-25 56-21 56-19 63-18 68-16 73-14 77-12 82-10 85-7 85-4 85-2 82-1 80-1 77-3 73-5 68-8 62-10 57-13 57-12 57-11 57-10 56-5 55-1 52 2 48 3 44 5 39 5 34 5 29 3 24 2 20-1 18-4 17-8 18-12 20-16 24-19 29-20 34-21 39-21 44-21 50-20 50-21 50-25 50-29 50-33 50-34 45-34 40-34 34-35 29-36 24-38 21-41 23-44 25-42 28-41 32-40 38-39 43-40 49-40 49-44 49-49 49-54 44-54 38-54 33-54 28-55 24-56 21-58 17-61 19-64 22-62 26-60 30-59 36-59 40-59 44-59 49-60 49-65 49-71 48-74 46-76 42-76zM50-15 46-16 41-16 37-16 32-16 27-14 24-12 23-8 24-5 27-3 32-1 38-1 45-2 48-4 50-7 50-13z"/><path id="r143" d="M35-79 37-80 39-80 43-79 46-77 47-75 48-73 47-72 47-71 46-69 44-65 42-59 41-57 45-58 47-59 50-60 52-62 54-63 56-63 59-63 62-62 62-61 63-60 61-57 57-55 53-54 49-53 44-52 39-51 37-47 36-43 34-38 32-32 30-29 29-25 26-20 24-15 21-9 20-6 19-4 17-1 16 1 15 2 13 2 12 2 11 2 10-1 10-3 10-6 12-10 15-13 18-18 21-24 23-29 26-34 28-39 30-45 32-51 30-50 27-50 22-51 17-53 15-55 12-58 15-61 18-58 22-56 27-56 30-56 34-56 35-57 35-59 36-62 38-68 38-72 38-74 35-75 34-75 33-75zM49-19 51-14 53-11 56-9 60-7 64-6 69-6 75-6 79-7 82-7 84-7 87-7 90-5 90-4 91-3 90-1 87 0 82 1 76 1 69 1 64 0 59-1 55-2 52-5 49-8 47-12 45-17zM64-35 70-40 65-40 60-39 55-37 50-35 49-39 54-42 59-44 64-45 69-46 73-47 79-46 83-45 84-43 85-42 84-41 82-40 77-39 72-36 68-33z"/><path id="r144" d="M49-27 49-23 43-23 43-81 46-80 49-79 81-79 84-83 89-78 91-76 91-75 90-74 88-73 88-23 81-23 81-27 74-27 74-2 75 0 75 1 77 1 81 1 85 1 87 1 88-1 89-4 90-9 90-16 94-15 94-10 94-7 94-3 95-1 95 0 97 1 98 0 97 4 94 6 92 7 88 7 81 7 74 7 70 6 69 4 68 0 68-27 61-27 60-21 59-16 57-12 55-7 52-4 49-1 45 2 40 5 35 7 29 9 26 5 31 3 36 1 40-1 43-3 47-7 50-11 52-16 53-21 54-27zM49-32 81-32 81-43 49-43zM49-48 81-48 81-59 49-59zM49-63 81-63 81-74 49-74zM24-70 24-47 28-47 32-53 35-49 38-46 36-43 24-43 24-20 29-21 34-23 38-25 38-21 34-18 30-16 25-14 20-12 15-10 10-8 9-5 8-4 7-6 5-9 3-14 8-15 12-16 17-17 18-18 18-43 6-43 5-47 18-47 18-70 5-70 4-75 29-75 33-80 36-77 39-73 38-70z"/><path id="r145" d="M18-57 14-55 8-51 6-55 10-58 15-61 19-64 23-68 26-72 30-76 33-80 36-85 43-83 45-81 44-80 41-79 39-78 38-76 57-76 61-80 66-76 68-74 68-73 66-72 63-70 61-68 58-65 54-62 77-62 80-66 85-62 87-60 87-59 86-58 83-57 83-39 77-39 77-41 54-41 50-39 46-36 50-32 53-28 56-23 61-26 65-28 69-31 73-34 77-38 82-34 84-31 84-30 82-30 81-30 79-30 74-27 69-25 64-23 58-21 63-18 68-15 73-12 79-10 84-8 90-7 96-6 93-3 91 1 86-1 81-3 76-5 72-7 67-10 63-13 58-16 59-13 59-9 59-3 58 2 56 5 54 7 50 8 46 9 46 7 44 6 41 5 35 4 35 0 39 0 43 1 47 1 50 0 52-2 53-6 53-10 53-13 53-15 49-13 45-10 41-8 35-5 30-3 24-1 18 1 13 3 7 4 5 0 10-1 16-3 21-5 27-7 32-9 37-12 42-15 47-18 50-21 51-21 50-23 49-26 45-24 41-21 35-19 30-17 25-15 20-13 15-11 9-10 7-14 12-15 18-17 23-18 28-21 32-23 37-25 41-28 46-31 44-33 42-34 38-32 33-30 28-28 22-26 17-25 11-23 8-27 14-28 20-30 26-32 31-34 36-36 40-38 45-41 24-41 24-38 18-38zM24-58 24-46 47-46 47-58zM26-62 48-62 52-66 54-69 57-72 34-72 31-68 28-65 25-63 25-62zM53-58 53-46 77-46 77-58z"/><path id="r146" d="M19-41 24-42 30-42 34-43 32-46 30-50 33-52 37-47 41-43 42-39 43-35 43-33 41-32 40-31 39-31 38-31 37-32 37-33 37-34 36-36 36-39 35-39 31-38 26-37 26 9 20 9 20-36 15-35 9-35 8-33 7-32 5-34 3-41 9-41 14-41 17-45 20-49 23-53 26-58 28-62 31-67 34-72 40-69 42-66 41-65 38-65 34-60 31-55 27-51 23-46 20-42zM60-46 65-46 71-47 77-47 84-48 83-48 80-53 77-57 79-59 83-56 87-53 89-50 92-47 94-43 95-40 94-39 93-37 92-37 90-36 89-37 88-38 87-41 86-44 85-44 80-43 74-42 69-42 63-41 57-40 51-40 49-37 48-37 46-39 44-46 47-46 50-46 55-46 57-50 60-54 62-58 63-63 64-64 45-64 44-68 65-68 65-84 71-84 74-83 75-81 74-80 71-79 71-68 85-68 89-74 90-73 91-72 94-70 96-67 95-64 71-64 69-59 66-55 63-50zM14-66 17-70 19-75 21-80 22-85 29-82 31-80 30-79 27-78 25-74 22-70 20-67 17-64 20-60 22-56 21-54 20-53 19-52 18-52 16-52 15-54 13-59 9-63 5-67 7-70 11-68zM3 1 4-4 6-10 7-15 8-21 8-28 15-26 18-24 17-23 14-22 13-16 12-11 10-6 8-2 6 2zM32-30 36-24 39-19 41-15 41-11 40-7 37-6 35-7 35-8 34-13 33-18 32-23 29-28zM95-15 94-11 94-8 95-4 95-2 96-1 98-1 97 2 96 4 94 6 91 6 85 6 80 6 76 6 73 5 72 3 71-1 71-36 77-36 80-35 81-33 80-32 77-31 77-3 78-1 79 0 80 0 83 0 86 0 88 0 89-3 90-9 91-16zM36 5 41 2 45-1 48-4 50-8 52-12 54-17 55-22 55-26 55-30 55-35 61-34 64-33 65-32 65-30 62-29 61-23 61-18 60-14 58-9 56-6 53-1 49 2 44 6 38 8z"/><path id="r147" d="M17 3 17 9 10 9 10-28 13-27 17-25 34-25 38-29 42-25 44-22 43-21 41-19 41 9 35 9 35 3zM17-2 35-2 35-21 17-21zM73-42 73 9 67 9 67-42 46-42 45-47 67-47 67-82 72-81 76-80 77-79 76-77 73-76 73-47 85-47 90-53 93-50 96-46 95-42zM39-64 43-69 46-66 50-63 48-60 5-60 4-64zM32-51 37-56 40-53 44-50 42-47 11-47 10-51zM32-38 37-43 40-40 44-37 42-34 11-34 10-38zM32-77 36-82 40-79 43-75 41-73 12-73 11-77z"/><path id="r148" d="M46-64 46-83 52-83 56-82 57-80 56-79 53-77 53-64 80-64 86-70 90-66 94-62 92-59 48-59 48-53 47-48 46-42 75-42 79-46 84-42 86-39 86-38 85-38 83-36 82-28 82-22 81-16 80-11 79-6 78-3 76 1 73 4 69 6 67 7 64 7 64 5 63 4 60 3 55 2 48 1 48-3 53-3 59-2 64-2 68-3 71-5 72-7 73-11 74-16 75-20 76-26 76-31 76-37 45-37 44-31 42-26 40-22 38-17 36-13 33-10 30-6 26-2 21 1 16 5 10 8 8 4 12 1 17-2 21-5 24-8 27-12 30-16 33-20 35-25 37-30 38-35 39-40 40-46 41-52 41-59 8-59 7-64z"/><path id="r149" d="M64-39 84-39 89-45 93-41 96-37 94-34 63-34 61-29 59-25 56-20 54-15 51-10 48-5 52-6 57-6 63-7 68-7 74-8 80-9 77-13 74-18 69-23 72-25 77-21 81-17 85-13 88-9 91-5 93-1 94 2 94 4 93 5 91 6 89 7 88 6 87 4 85-1 83-5 81-5 75-4 70-3 65-2 59-1 54 0 48 1 42 1 37 2 35 5 34 6 33 5 31 1 30-4 35-5 39-5 43-5 45-9 47-14 49-18 51-23 53-28 55-33 56-34 31-34 29-39 58-39 58-59 37-59 36-64 58-64 58-83 63-82 67-81 68-80 67-78 64-77 64-64 78-64 82-70 86-66 89-62 88-59 64-59zM11-83 18-80 22-76 25-74 26-71 25-69 24-67 23-66 21-66 20-66 19-68 17-72 14-76 9-80zM33-61 20-21 19-16 19-12 19-11 19-8 20-4 20 0 20 4 20 6 19 8 18 8 16 8 13 8 12 6 12 4 13 0 13-3 13-7 13-12 10-16 8-17 5-17 5-21 8-21 9-21 12-21 15-24 16-26 18-30 20-36 22-41 24-46 26-51 28-57 29-63zM6-61 12-57 16-54 19-51 20-48 19-46 17-44 16-44 15-44 14-44 13-46 11-51 8-55 4-58z"/><path id="r150" d="M25-26 29-24 27-18 25-13 25-8 25-7 25-5 25-3 25-1 25 2 23 3 20 1 17-3 15-8 14-13 13-19 13-26 13-30 13-34 14-39 15-44 16-50 17-55 18-57 18-58 19-63 20-66 19-70 16-74 19-76 23-74 26-71 28-68 28-65 28-62 26-59 25-56 23-52 21-46 20-40 19-35 19-29 18-24 19-19 20-14zM57-54 64-60 63-60 62-60 56-60 51-61 47-62 44-64 45-68 48-66 52-65 57-65 61-65 66-66 70-67 74-68 76-68 79-68 81-67 83-65 83-63 83-62 81-61 80-60 77-60 74-60 70-58 65-55 60-51zM44-24 46-19 49-16 53-13 57-12 61-11 66-11 70-11 74-11 78-12 80-12 81-13 83-13 85-13 88-11 89-10 90-8 89-6 86-5 82-4 77-4 71-4 65-4 60-5 55-6 51-7 48-10 45-13 42-17 40-21z"/><path id="r151" d="M42-80 44-80 46-80 50-80 53-79 55-77 56-74 56-72 56-70 55-68 55-66 55-61 55-56 58-55 62-55 68-56 72-58 74-58 76-59 78-58 80-57 82-56 82-55 81-52 78-51 73-50 66-49 60-50 55-51 55-47 55-42 55-37 55-31 55-26 56-19 61-18 66-17 70-15 75-13 80-10 83-8 85-4 84-3 83-1 82-1 81-1 78-1 76-3 70-6 65-9 60-11 56-13 56-12 56-10 56-8 56-7 55-3 53 1 50 3 45 5 39 5 33 5 28 4 23 2 19-1 17-4 16-8 17-12 19-15 22-18 26-20 32-21 39-21 44-21 49-20 49-25 49-31 49-35 48-40 48-43 48-62 47-70 47-73 45-75 42-76 41-76zM49-15 45-15 40-16 36-16 31-16 26-14 23-12 22-8 23-5 27-3 32-1 38-1 43-1 47-3 49-6 49-11 49-12 49-13 49-14z"/><path id="r152" d="M38-44 40-42 37-37 35-33 34-28 33-24 33-21 31-20 30-21 28-22 26-27 25-32 24-38 25-42 25-47 26-53 28-59 29-64 29-67 28-71 26-74 29-76 34-73 37-69 38-66 37-63 36-60 34-58 33-55 31-49 30-43 30-38 30-37 30-35zM58-76 61-78 64-79 68-78 70-76 72-72 73-68 74-63 74-57 75-51 75-43 75-37 74-32 73-27 72-22 70-17 68-13 65-9 62-6 58-2 54 0 50 3 45 5 39 7 37 3 42 1 47-2 52-5 56-9 59-12 62-17 64-21 65-26 66-32 67-38 67-45 67-52 67-58 66-63 66-67 65-70 64-73 62-74 61-73 59-73z"/><path id="r153" d="M34-27 74-27 78-31 83-27 85-25 84-24 84-23 81-22 81 9 75 9 75 3 34 3 34 9 27 9 27-23 23-20 19-16 14-13 10-10 5-7 2-10 8-14 12-17 17-21 21-24 25-29 29-33 33-37 36-42 6-42 5-47 39-47 42-52 44-57 47-62 53-60 55-57 54-56 51-55 48-51 46-47 83-47 88-52 92-48 96-45 94-42 43-42 40-37 36-33 32-28 33-28zM34-23 34-2 75-2 75-23zM68-66 68-55 62-55 62-66 37-66 37-55 31-55 31-66 6-66 5-71 31-71 31-83 37-83 40-82 41-80 40-79 37-78 37-71 62-71 62-83 67-83 71-82 72-80 71-79 68-78 68-71 83-71 88-77 92-73 95-69 94-66z"/><path id="r154" d="M53-68 53-40 80-40 86-46 90-42 94-38 92-35 53-35 53 8 46 8 46-35 8-35 6-40 46-40 46-68 14-68 13-73 74-73 79-79 84-76 88-71 86-68z"/><path id="r155" d="M76-45 66-45 66-35 77-35 82-40 86-36 89-33 87-30 66-30 66-18 84-18 89-23 93-20 96-16 94-13 6-13 4-18 33-18 33-30 13-30 11-35 33-35 33-45 23-45 23-42 17-42 17-81 18-81 19-81 21-80 24-79 75-79 78-83 83-78 85-76 85-75 84-74 82-73 82-42 76-42zM76-50 76-60 52-60 52-50zM76-65 76-74 52-74 52-65zM46-50 46-60 23-60 23-50zM46-65 46-74 23-74 23-65zM60-45 39-45 39-35 60-35zM39-30 39-18 60-18 60-30zM6 6 12 4 17 2 22-1 27-4 31-7 36-10 41-7 43-4 42-3 40-2 39-2 38-3 33 0 28 2 24 4 19 6 14 8 9 9zM60-10 69-8 76-6 82-4 86-2 90 0 92 1 92 3 92 4 91 6 89 7 88 8 87 7 84 6 81 3 78 1 73-1 69-3 63-5 58-7z"/><path id="r156" d="M28-74 31-72 34-71 36-71 41-72 46-73 53-75 54-75 55-75 57-76 59-77 60-78 62-78 64-77 67-75 69-72 69-70 69-68 68-68 66-67 63-65 60-62 56-59 52-56 48-52 44-48 39-44 35-39 39-41 44-43 48-44 53-44 58-45 63-44 68-43 72-42 76-39 80-36 82-32 84-28 84-24 84-18 82-13 79-9 75-5 71-2 67 0 62 2 57 3 52 3 47 3 43 2 39 1 35-1 31-4 28-8 27-12 28-16 31-19 35-21 39-22 44-21 48-20 52-18 55-15 57-12 59-8 60-4 64-6 69-9 72-12 74-15 76-19 76-24 75-28 73-33 70-36 65-38 61-40 55-40 50-40 46-39 41-37 36-35 32-32 29-30 25-26 22-23 21-21 20-20 19-18 17-18 15-19 14-23 14-26 16-28 16-29 18-31 21-34 25-37 28-41 32-44 36-48 40-52 45-57 50-62 54-66 57-69 60-72 60-73 56-71 52-70 48-68 46-68 42-66 38-64 35-63 34-63 30-64 27-67 25-72zM53-3 51-8 49-12 46-15 43-17 39-17 35-16 33-12 34-10 36-7 38-6 40-5 45-3 50-3z"/><path id="r157" d="M11-55 12-53 15-52 18-52 25-54 29-55 33-56 35-61 36-66 36-69 34-73 30-75 31-78 33-78 34-78 38-78 41-77 43-75 44-72 44-70 43-68 42-66 41-62 41-61 40-59 40-58 40-57 43-57 46-58 50-57 54-55 56-52 59-48 60-43 60-37 60-31 59-25 58-20 55-14 53-9 50-5 47-1 44 1 42 1 40 1 40 0 39 0 39-1 38-5 36-9 34-10 31-12 33-15 37-13 41-11 42-11 42-10 43-10 44-10 46-11 47-14 49-17 51-21 52-25 53-30 54-35 54-39 53-45 52-50 49-52 46-53 42-53 38-52 36-46 34-40 32-34 30-29 28-23 25-18 23-13 20-8 17-3 14 0 13 1 12 1 11 0 10-1 9-4 10-7 12-10 14-13 17-17 19-21 21-25 24-31 26-36 29-42 31-49 32-50 27-49 22-47 19-45 16-44 14-43 11-44 8-48 8-53zM75-36 81-35 84-35 86-35 87-37 86-41 83-46 81-50 77-53 74-57 70-59 65-62 68-65 73-63 77-60 81-58 84-55 87-51 91-47 93-42 95-37 96-31 95-28 94-25 93-24 91-23 90-23 89-25 85-28 81-30 79-31 75-32zM76-78 81-76 85-73 88-70 89-66 88-64 87-63 86-62 85-62 83-63 82-65 80-69 77-73 74-76zM85-85 90-83 94-81 97-77 98-73 98-71 97-70 96-70 95-69 93-70 92-71 92-72 91-73 90-77 87-80 83-83z"/><path id="r158" d="M53-77 56-74 59-70 62-67 66-64 70-60 74-57 78-55 83-52 87-50 92-47 97-45 94-43 92-39 87-42 82-45 77-48 73-51 69-54 65-57 61-61 57-65 54-69 50-74 47-69 43-64 39-60 35-56 31-52 27-48 22-45 17-42 12-39 6-36 3-39 8-42 13-45 18-48 22-51 26-55 30-59 34-63 36-67 39-70 42-74 45-79 47-83 54-81 56-79 55-78zM53-40 53-24 69-24 74-29 77-26 81-22 79-19 53-19 53 0 79 0 85-6 88-3 92 1 90 4 10 4 8 0 46 0 46-19 21-19 19-24 46-24 46-40 25-40 23-45 65-45 70-49 73-47 77-43 75-40z"/><path id="r159" d="M63-51 63-16 70-16 74-21 75-20 76-19 78-17 80-14 79-11 63-11 63 9 57 9 57-11 43-11 41-16 57-16 57-48 55-43 53-38 50-33 47-28 44-24 40-19 37-15 33-11 29-7 26-10 30-14 34-19 37-23 41-28 44-33 47-38 49-43 52-49 54-55 54-56 31-56 29-60 57-60 57-83 63-83 66-82 68-80 67-79 63-77 63-60 83-60 88-66 91-63 95-59 94-56 65-56 66-55 69-50 72-44 75-40 78-35 82-31 86-26 90-22 94-18 98-15 95-13 92-10 88-13 85-17 81-22 78-26 75-31 72-36 69-41 66-46zM22-54 26-53 28-51 27-50 24-48 24 9 17 9 17-45 14-40 11-36 8-32 5-28 2-30 5-35 8-39 11-44 13-49 16-54 18-59 19-63 21-68 22-73 24-79 25-84 31-82 34-81 35-79 34-78 31-77 29-72 27-67 25-63 24-58z"/><path id="r160" d="M52-4 57-5 62-7 67-9 71-11 74-14 78-18 81-22 83-27 83-32 84-37 83-42 82-47 81-52 78-56 75-59 72-62 69-65 64-67 59-68 54-68 52-68 50-68 51-63 52-58 52-54 51-49 50-44 48-39 47-34 44-29 41-24 39-19 36-15 32-12 29-9 25-7 21-6 17-7 14-9 11-13 10-17 9-22 8-28 9-33 10-38 11-43 14-49 16-53 19-57 23-60 26-63 31-66 35-69 40-70 44-72 49-73 54-73 60-73 65-72 70-70 75-68 79-65 83-61 87-56 89-52 91-47 92-42 92-38 92-32 91-27 89-23 87-19 85-15 82-12 78-9 74-7 70-5 65-3 60-1 54 0zM45-67 40-66 35-63 30-60 26-56 23-52 20-47 18-43 17-38 16-33 16-27 16-21 17-17 19-14 22-13 25-15 30-19 32-22 35-26 37-31 40-35 42-41 44-46 45-51 46-56 46-60 46-64z"/><path id="r161" d="M20-40 16-44 13-48 11-51 10-55 9-59 10-64 11-68 13-72 17-75 21-77 26-78 31-77 35-75 38-72 40-68 41-64 42-59 41-55 40-51 37-47 34-44 30-41 35-38 38-34 41-29 43-24 44-18 43-13 42-8 40-4 36-1 31 1 25 2 20 1 15-1 11-4 9-8 7-13 7-18 7-23 9-28 12-32 15-36zM26-44 29-46 32-49 34-54 35-59 35-64 34-68 30-72 26-73 22-72 18-69 17-65 16-59 17-54 20-50 21-48 24-46 25-44zM24-37 20-34 17-31 15-27 14-23 13-18 14-13 16-9 18-6 21-4 25-3 30-4 33-8 36-12 36-18 36-22 35-26 33-29 30-33 27-35 25-37z"/><path id="r162" d="M25-78 30-77 34-74 37-69 39-65 40-60 42-55 42-50 43-43 43-37 43-30 42-24 41-18 40-13 38-8 36-4 32-1 29 1 25 2 21 1 18 0 15-3 12-7 11-11 9-15 8-20 7-25 7-31 7-37 7-44 8-50 8-56 10-61 11-66 13-70 17-74 21-77zM25-74 21-72 18-67 17-64 16-60 15-55 15-49 14-43 14-37 14-30 15-25 15-20 16-15 17-11 19-6 22-3 25-2 28-3 30-6 32-10 34-14 35-19 35-24 36-30 36-37 36-44 35-50 35-56 34-61 32-65 31-69 28-72z"/><path id="r163" d="M42-81 45-78 8 4 5 2zM14-77 18-76 22-72 23-68 24-63 25-57 24-52 24-48 23-44 20-41 17-39 14-38 9-39 6-42 4-46 3-51 3-57 3-63 4-68 6-72 9-76zM14-73 12-72 11-71 10-68 10-63 9-57 9-52 10-48 10-45 12-43 14-42 15-43 17-44 17-47 18-51 18-57 18-63 17-68 17-70 15-72zM36-38 41-37 44-33 46-30 47-25 47-19 47-14 46-9 45-6 43-2 40 0 36 1 32 0 29-4 27-8 26-13 25-19 26-25 27-30 28-33 32-37zM36-34 35-33 33-32 33-29 32-25 32-19 32-13 32-9 33-7 34-4 36-3 38-4 39-5 40-8 40-13 41-19 40-25 40-29 39-32 38-33z"/><path id="r164" d="M38-82 39-82 41-82 44-82 47-80 49-79 50-77 50-75 49-74 48-73 47-71 44-66 42-64 47-65 51-67 54-69 56-70 59-70 61-70 63-69 65-68 65-67 64-65 62-64 58-62 54-61 49-60 44-58 38-58 37-56 34-52 32-48 29-44 27-41 32-45 38-47 43-47 47-47 51-45 54-42 56-37 61-39 65-41 69-42 73-44 75-46 74-48 72-49 75-51 80-48 83-46 84-43 83-41 81-39 77-38 72-36 68-35 64-34 58-31 59-26 59-21 59-19 57-16 56-15 54-14 52-15 51-16 51-17 51-18 51-20 51-24 51-26 50-28 44-26 40-23 36-20 32-16 31-11 32-8 36-6 39-4 43-3 48-3 53-3 61-3 67-4 71-5 73-6 75-6 77-6 79-5 81-3 81-1 80 1 76 2 71 3 66 3 60 4 53 4 47 4 42 3 38 2 34 0 29-3 27-6 26-11 27-16 29-20 33-24 36-26 40-29 45-31 50-34 49-37 48-40 45-42 41-43 37-42 32-40 29-37 26-33 25-32 24-30 23-29 22-29 20-29 19-30 18-32 18-35 18-37 20-39 22-41 24-45 25-46 26-47 28-50 30-53 32-57 31-57 29-57 24-58 19-60 18-62 17-64 19-67 23-63 28-62 32-62 35-62 39-68 40-73 41-75 40-78 36-79z"/><path id="r165" d="M27-35 27-66 9-66 8-71 27-71 27-84 33-84 36-83 37-82 36-80 33-79 33-71 66-71 66-84 72-84 75-83 76-82 75-80 72-79 72-71 81-71 86-77 89-73 93-69 91-66 72-66 72-35 83-35 89-41 93-37 96-33 94-30 67-30 71-27 76-24 81-22 86-20 92-18 98-17 95-13 93-10 87-12 82-14 77-17 72-20 68-23 65-27 61-30 39-30 36-27 32-23 29-20 24-17 20-14 15-12 10-9 5-7 2-11 8-13 13-16 18-19 23-22 27-26 31-30 6-30 4-35zM33-66 33-59 66-59 66-66zM33-55 33-48 66-48 66-55zM33-43 33-35 66-35 66-43zM47 1 47-10 25-10 23-15 47-15 47-26 52-26 55-25 57-24 56-22 53-21 53-15 66-15 70-19 73-16 77-13 75-10 53-10 53 1 78 1 83-4 87-1 91 3 89 6 11 6 9 1z"/><path id="r166" d="M28-78 30-78 32-79 36-78 39-77 41-74 42-72 42-69 41-67 41-65 41-62 41-57 42-52 43-48 44-43 47-45 52-47 56-50 62-53 64-54 65-55 67-56 68-58 67-60 66-61 69-63 73-61 75-59 77-56 77-54 76-51 73-49 69-48 64-46 57-43 51-40 46-37 42-35 38-33 35-31 31-27 28-24 26-20 25-17 26-13 29-11 33-8 37-7 43-6 50-6 56-6 62-7 67-7 70-9 73-10 75-10 78-10 80-9 82-7 82-5 81-2 77-1 72 0 66 0 61 1 57 1 54 1 47 1 40 0 35-1 31-3 27-4 24-7 22-10 21-13 20-17 21-20 22-24 25-28 29-32 33-36 39-40 37-45 36-49 35-55 34-61 33-67 33-71 31-73 29-74 26-75z"/><path id="r167" d="M52-63 52-68 52-73 51-76 49-78 46-79 47-82 53-82 57-81 59-79 60-77 60-76 60-75 59-72 59-68 59-67 59-63 64-64 68-64 73-64 78-64 81-65 83-66 84-66 89-65 93-63 94-61 95-60 94-58 92-57 91-57 89-57 86-58 83-58 78-59 73-59 69-59 65-59 59-58 58-51 58-46 58-42 61-37 62-31 63-25 62-19 61-13 60-8 57-4 54 0 49 3 44 6 39 9 36 5 41 3 46-1 50-4 53-8 54-12 55-16 56-21 53-16 50-13 46-12 42-13 38-15 36-19 34-24 33-30 34-36 36-40 40-44 44-47 48-48 50-48 52-47 52-48 52-52 52-57 52-58 44-57 38-56 32-55 27-54 23-53 20-52 17-52 15-51 12-52 9-54 7-57 6-61 9-64 10-62 12-60 14-60 17-59 20-59 25-60 32-61 38-61 43-62 48-62zM48-43 45-42 42-39 40-35 39-30 40-24 42-20 44-18 46-17 49-18 51-21 53-24 54-28 54-33 53-38 52-41 50-43z"/><path id="r168" d="M34-37 34-30 40-30 43-34 46-31 49-28 47-25 34-25 34-17 40-17 43-21 46-19 49-15 47-13 34-13 34-4 41-4 45-9 49-6 51-3 50 0 18 0 18 6 12 6 12-33 10-30 7-27 4-24 1-27 5-31 8-35 11-39 14-44 16-49 19-54 4-54 3-59 20-59 22-64 23-69 14-69 11-64 8-59 4-62 7-66 9-70 11-74 12-79 14-85 20-83 22-81 22-80 19-79 18-76 17-74 38-74 42-79 46-75 48-72 47-69 29-69 28-64 27-59 40-59 44-64 48-61 51-57 49-54 25-54 23-50 21-46 19-42 29-42 31-47 33-53 39-51 41-49 40-48 37-47 36-45 34-42 41-42 45-47 48-43 51-40 49-37zM29-37 18-37 18-30 29-30zM29-25 18-25 18-17 29-17zM29-13 18-13 18-4 29-4zM69-27 69-20 67-15 66-9 63-5 61-2 58 1 54 4 50 7 45 9 42 6 47 3 52 0 55-4 58-8 60-13 62-17 63-22 63-27 59-27 59-23 53-23 53-81 57-80 60-79 83-79 87-83 92-78 93-76 93-75 90-73 90-23 84-23 84-27 80-27 80-1 80 0 81 1 82 2 84 2 87 1 89 0 90-3 91-9 91-16 95-14 95-8 95-3 95-1 96 0 98 0 98 3 97 5 95 6 91 7 86 7 79 7 75 5 74 3 74 0 74-27zM84-32 84-43 59-43 59-32zM84-48 84-59 59-59 59-48zM84-63 84-74 59-74 59-63z"/><path id="r169" d="M39-19 39-15 33-15 33-80 35-79 37-78 38-78 39-78 54-78 58-81 62-77 64-75 64-74 63-74 61-72 61-15 55-15 55-19zM39-60 55-60 55-73 39-73zM39-55 39-42 55-42 55-55zM39-37 39-23 55-23 55-37zM9-83 15-79 19-76 22-74 22-71 22-69 20-67 19-66 18-66 17-66 16-68 14-72 11-76 7-80zM30-63 19-21 18-16 17-12 17-10 18-8 18-4 19 0 19 3 19 6 18 8 17 8 15 8 12 8 11 6 11 4 12 0 12-3 12-7 11-12 9-16 7-17 4-17 4-21 6-21 8-21 11-22 14-25 15-29 17-32 18-37 20-42 21-47 23-53 24-59 26-65zM51-14 57-10 61-6 64-3 66 0 66 3 66 5 65 6 63 7 62 7 60 7 60 5 58 0 56-4 53-8 49-12zM70-1 76 0 82 0 84-1 85-1 85-2 85-4 85-83 91-82 94-81 95-80 94-78 91-77 91 0 90 5 87 7 84 8 82 8 81 6 80 5 77 4 70 3zM5-61 10-57 14-54 16-51 17-48 16-46 15-44 13-44 12-43 11-44 10-46 9-50 6-54 3-58zM23 5 26 2 29-1 32-5 35-9 38-14 44-11 46-8 45-7 41-7 38-2 34 2 30 5 26 8zM69-15 69-74 74-73 78-72 79-71 78-69 75-68 75-15z"/><path id="r170" d="M17-28 17-22 16-16 15-11 13-6 11-1 9 3 6 7 3 5 5 0 7-4 9-9 10-14 11-20 11-26 11-33 11-59 15-58 18-56 38-56 41-61 46-56 47-54 47-53 46-53 44-51 44-23 38-23 38-28zM17-33 38-33 38-52 17-52zM60-73 66-74 71-76 75-77 79-80 83-82 89-78 91-76 90-75 88-74 87-75 85-75 81-73 76-72 71-71 65-70 60-69 60-48 85-48 90-54 93-50 97-46 95-43 81-43 81 9 75 9 75-43 60-43 60-37 59-31 58-25 57-20 56-15 54-9 52-5 49 0 46 4 42 8 39 6 42 1 45-4 48-9 50-14 51-20 52-24 53-29 53-34 53-39 53-44 53-75 56-74zM39-74 44-80 47-76 50-72 48-69 7-69 6-74z"/><path id="r171" d="M53-31 82-31 87-37 92-33 95-29 93-26 53-26 53 9 46 9 46-26 6-26 5-31 46-31 46-70 10-70 9-75 77-75 83-81 87-77 91-73 89-70 53-70zM61-37 64-41 66-46 69-50 71-55 73-60 75-66 81-63 84-61 85-59 84-58 80-57 77-52 74-48 71-43 68-39 64-35zM18-64 22-60 26-56 29-52 31-48 33-43 34-40 34-37 32-35 30-35 29-35 28-36 27-38 25-43 23-48 21-52 18-57 15-61z"/><path id="r172" d="M64-19 62-24 60-29 58-35 57-41 56-46 55-53 54-59 21-59 21-44 40-44 43-48 48-44 49-41 48-40 46-39 46-30 46-23 45-18 44-14 43-11 41-8 38-7 34-6 34-8 32-9 30-10 26-11 24-11 24-15 29-14 34-14 37-15 38-16 39-17 39-19 40-23 40-27 40-32 41-38 40-40 20-40 20-34 20-28 19-22 18-17 17-11 15-6 12-1 9 4 6 8 3 6 6 1 8-5 10-10 12-16 13-20 14-25 14-30 14-35 14-41 14-67 17-66 21-64 54-64 54-68 53-72 53-77 53-84 59-83 62-83 63-81 62-80 60-79 60-77 60-73 60-69 60-64 85-64 89-70 93-67 96-62 95-59 60-59 61-54 62-48 63-43 64-38 65-33 67-29 68-25 71-29 74-34 77-39 79-45 82-51 88-48 91-45 89-44 86-43 83-37 80-32 77-27 74-23 71-19 74-15 76-11 79-8 83-5 84-3 86-3 87-4 88-6 90-10 91-15 92-21 95-18 94-11 94-7 93-3 94-1 94 1 95 2 97 2 95 6 91 7 87 6 82 4 78 0 74-4 70-8 67-14 63-10 58-6 54-2 49 1 44 4 39 7 36 3 40 1 44-1 47-4 51-7 55-10 58-13 61-16zM70-83 76-79 80-76 83-73 83-71 83-69 81-68 80-67 79-67 77-67 76-69 74-73 71-77 67-80z"/><path id="r173" d="M8 0 8-6 9-12 11-17 13-21 15-24 18-28 21-32 22-33 24-35 27-39 29-43 31-46 32-50 33-54 34-59 33-64 32-68 28-72 23-73 20-73 18-71 16-69 15-67 17-65 18-62 18-60 17-59 16-57 13-57 11-57 9-59 8-61 8-63 9-67 11-71 14-75 19-77 24-78 29-77 33-75 37-72 39-68 41-64 41-58 41-54 40-49 38-45 36-42 34-39 31-36 28-32 26-31 22-27 19-22 17-18 15-13 13-8 30-8 34-9 37-11 39-14 40-20 43-20 41 0z"/><path id="r174" d="M14-39 16-42 19-45 23-47 27-47 31-47 35-44 38-40 40-37 41-33 42-28 42-23 42-17 41-12 39-8 37-3 34 0 30 1 26 2 21 1 17-1 14-4 11-9 10-13 8-17 8-22 7-28 7-34 7-40 8-46 9-52 10-57 11-62 13-67 16-72 19-75 23-77 28-78 33-77 37-74 40-71 40-67 40-65 40-63 38-62 36-61 34-62 32-63 31-65 31-66 32-69 33-71 31-72 28-73 24-72 21-69 18-64 17-60 16-55 15-50 14-45zM26-42 23-41 20-39 17-35 15-30 14-24 15-18 16-13 18-9 21-4 25-3 29-4 33-8 34-12 35-17 35-22 35-29 34-34 32-37 29-41z"/><path id="r175" d="M27-65 24-60 21-55 18-51 14-47 10-43 7-46 10-50 14-54 16-59 19-63 21-68 24-73 26-79 27-84 33-83 36-81 38-80 36-78 33-77 31-73 29-70 79-70 84-76 88-72 92-68 90-65 58-65 58-47 75-47 80-53 84-50 88-46 86-42 58-42 58-22 83-22 89-28 93-24 96-20 95-17 58-17 58 9 51 9 51-17 5-17 4-22 23-22 23-50 26-49 29-47 51-47 51-65zM51-42 29-42 29-22 51-22z"/><path id="r176" d="M9-76 43-76 43-71 40-65 38-60 36-54 34-48 33-43 31-38 30-34 30-29 29-25 28-19 28-14 28-9 27-4 26 1 23 3 20 1 19-3 19-7 20-12 20-17 21-23 23-29 24-35 26-41 28-47 30-53 32-58 34-63 36-68 19-68 16-67 13-65 11-61 10-56 7-56z"/><path id="r177" d="M36-37 32-33 28-30 23-29 19-29 15-32 12-36 10-39 9-43 8-48 8-53 8-59 9-64 11-68 13-73 16-76 20-77 24-78 29-77 32-76 35-73 38-69 40-65 41-60 42-55 43-49 43-42 43-35 42-28 42-22 40-17 39-13 37-9 34-4 31-1 27 1 22 2 17 1 13-2 10-5 9-10 9-11 10-12 12-14 14-15 16-14 18-13 19-11 19-10 18-7 17-5 19-4 22-3 26-4 29-7 32-12 34-16 35-20 35-25 36-31zM25-73 21-72 17-68 16-64 15-59 15-54 15-47 16-42 18-39 21-35 24-34 28-35 31-38 34-42 35-47 36-52 35-57 34-62 33-66 31-69 28-72z"/><path id="r178" d="M41-43 47-43 53-43 57-45 60-48 63-51 64-55 64-59 64-63 62-67 60-70 55-72 49-73 45-73 41-72 37-70 35-69 34-67 37-65 38-62 37-59 36-58 34-56 32-56 30-56 28-57 27-59 26-62 28-67 31-71 35-74 39-76 44-78 49-78 55-77 59-76 64-74 67-71 70-67 72-64 72-59 72-54 70-50 67-46 64-43 60-42 56-41 52-40 57-39 62-38 65-36 69-33 72-29 74-25 74-20 74-14 72-9 69-5 64-2 60 0 54 1 48 2 43 2 38 1 34-1 30-3 27-6 24-10 24-14 24-16 25-17 27-19 30-20 32-20 33-19 35-17 35-14 34-11 32-9 35-6 39-5 43-3 48-3 53-3 57-5 60-7 64-10 66-15 67-20 66-25 65-29 62-32 59-34 56-36 52-37 47-37 41-37z"/><path id="r179" d="M50-78 55-77 59-76 62-74 66-71 69-66 71-62 73-58 75-53 76-48 76-43 76-37 76-32 76-27 75-22 74-18 72-14 69-9 66-5 62-2 58 0 54 1 50 2 45 1 41 0 36-3 33-6 30-10 28-15 26-20 25-25 24-31 24-37 24-43 24-48 25-53 27-58 29-62 31-66 34-70 37-74 41-76 46-77zM50-74 45-73 41-70 38-65 36-62 34-58 33-53 33-48 32-43 32-37 32-30 33-24 34-19 36-14 38-9 42-5 46-3 50-2 54-3 58-5 61-8 63-12 65-16 66-20 67-25 68-31 68-37 68-43 67-49 67-54 65-58 64-62 62-66 59-70 54-73z"/><path id="r180" d="M18-17 18-53 5-53 4-57 18-57 18-83 26-82 28-80 27-79 25-77 25-57 29-57 34-63 37-60 40-56 38-53 25-53 25-19 29-21 34-23 39-25 39-21 35-18 30-16 25-14 20-12 15-10 10-8 9-5 8-4 6-6 4-13 8-14 13-15zM53-65 84-65 88-69 93-64 95-62 94-61 94-60 91-59 91-50 91-41 91-33 90-26 90-20 89-15 89-10 88-6 87-3 87 0 84 4 79 7 76 7 74 8 73 5 70 4 66 3 59 2 59-2 63-2 68-1 73-1 77-1 80-3 81-5 82-8 83-11 83-15 84-20 84-25 84-31 85-37 85-44 85-52 85-60 51-60 48-55 45-49 42-45 39-40 35-43 38-47 41-51 43-56 45-61 47-66 48-72 50-78 51-84 56-82 60-81 61-80 60-78 56-77 55-72 54-68zM78-30 78-25 74-23 69-21 65-19 60-17 55-15 50-13 49-10 48-9 45-11 43-18 47-19 52-20 57-21 62-23 67-25 72-27zM67-45 71-50 75-46 78-43 76-40 47-40 46-45z"/><path id="r181" d="M14-70 14-74 20-75 25-76 29-79 29-11 29-8 31-5 33-4 37-4 37 0 14 0 14-4 18-4 21-6 22-8 22-11 22-65 22-68 22-69 21-70 19-70z"/><path id="r182" d="M73-27 29-27 28-21 27-17 26-12 24-8 21-4 18 0 14 4 10 8 7 5 10 1 14-3 16-7 19-12 20-17 21-21 22-26 23-31 23-37 23-79 26-78 30-76 72-76 76-80 81-76 83-73 82-72 79-70 79-1 78 4 75 6 72 7 68 8 68 6 67 5 64 4 60 3 53 2 53-2 59-2 64-1 69-1 71-1 73-2 73-3 73-4zM73-55 73-71 29-71 29-55zM73-50 29-50 29-37 29-34 29-32 73-32z"/><path id="r183" d="M18-43 22-43 27-44 31-48 33-53 33-59 33-64 32-67 30-70 27-72 23-73 17-72 14-68 17-66 17-64 17-62 17-61 15-60 13-59 9-60 8-65 9-69 12-73 15-76 19-77 23-78 28-77 32-75 36-72 38-68 40-64 40-59 40-53 38-49 36-45 32-42 27-40 32-38 36-36 39-33 41-29 42-25 42-20 42-15 41-11 39-7 36-3 33 0 29 1 24 2 18 1 13-1 9-4 8-8 7-12 7-14 8-16 10-17 12-18 13-18 14-17 16-15 17-13 16-9 14-8 16-5 19-4 23-3 27-4 30-6 32-9 34-12 34-16 35-20 34-25 33-30 31-33 27-36 22-37 18-37z"/><path id="r184" d="M30-77 36-77 36-25 46-25 46-20 36-20 36-9 36-7 37-5 39-4 43-4 43 0 22 0 22-4 26-4 28-5 29-7 30-9 30-20 3-20 3-25zM30-67 9-25 30-25z"/><path id="r185" d="M12-76 40-76 39-68 16-68 14-44 17-47 21-49 25-50 30-49 35-46 39-42 41-39 42-34 43-30 43-25 43-19 42-15 41-10 39-6 36-3 32 0 28 1 24 2 19 1 15 0 12-2 8-7 7-12 8-14 9-16 10-17 12-18 15-17 16-16 17-14 18-12 17-10 14-8 15-6 17-5 20-3 23-3 28-4 32-8 34-13 35-18 36-25 36-31 34-35 32-39 29-43 24-44 20-43 16-40 13-36 9-38z"/><path id="r186" d="M18-15 18 9 12 9 12-50 15-49 19-48 39-48 42-51 47-47 48-45 48-44 47-44 45-42 45 1 45 4 43 6 41 7 37 8 36 8 35 6 34 5 31 4 26 3 26 0 31 0 35 0 37 0 38 0 39-1 39-3 39-15zM18-34 39-34 39-43 18-43zM18-29 18-20 39-20 39-29zM63-64 68-65 72-68 76-70 80-72 84-75 89-71 91-69 90-68 89-67 87-68 86-68 82-66 77-64 73-63 68-61 63-59 63-49 63-47 64-46 67-46 75-46 80-46 83-46 85-48 86-50 87-54 87-60 91-58 91-56 91-54 91-51 91-48 92-47 94-47 94-43 91-42 88-41 83-40 75-40 67-40 62-41 59-42 57-44 57-48 57-82 62-82 66-81 67-80 66-78 63-77zM63-18 68-20 73-23 77-25 81-28 85-31 90-27 92-24 91-23 90-23 88-23 87-23 82-21 78-19 73-17 68-15 63-14 63-3 63-1 65 0 68 0 76 0 81 0 84 0 86-1 87-4 88-8 89-15 92-13 92-11 92-10 92-5 93-2 94-1 95-1 96-1 95 2 94 4 92 5 90 6 86 6 80 6 74 6 67 6 62 6 59 5 57 2 57-2 57-37 62-36 66-35 67-34 66-32 63-31zM14-60 16-65 18-69 20-74 22-79 23-83 28-82 32-80 33-78 32-77 28-77 26-73 24-69 21-65 18-60 22-61 27-61 32-61 37-62 43-62 40-66 38-69 35-71 37-74 43-70 48-66 51-62 53-59 53-56 53-54 51-53 50-52 49-52 48-53 47-54 46-57 45-59 44-59 38-58 33-57 27-56 21-55 15-55 9-54 8-52 7-51 5-53 3-60 10-60z"/><path id="r187" d="M48-19 46-14 43-9 39-5 35-1 30 2 26 4 20 6 14 7 8 8 5 5 12 3 18 2 23 0 27-3 32-6 36-10 39-14 41-19 11-19 10-23 43-23 44-27 44-31 52-30 54-28 53-27 50-26 50-25 50-24 78-24 81-27 86-23 88-21 88-20 87-20 85-18 84-12 83-7 82-2 80 1 78 4 75 6 72 8 67 8 66 6 64 5 62 4 58 4 52 3 52-1 58 0 63 0 68 0 72 0 74-2 76-5 77-8 78-13 79-19zM70-66 70-61 69-57 69-53 73-50 76-47 77-44 76-43 75-42 74-41 73-41 72-41 71-42 69-45 67-48 65-43 62-39 59-36 56-33 51-30 49-33 52-36 56-39 58-43 61-47 62-52 59-54 56-56 52-58 55-61 60-58 63-56 64-60 64-65 53-65 51-70 64-70 64-71 64-74 64-84 71-84 74-82 73-81 70-80 70-74 70-71 70-70 79-70 82-74 87-70 88-68 88-67 87-66 85-65 85-59 85-54 86-51 87-46 88-40 89-39 90-40 92-44 93-50 97-48 95-42 95-38 95-36 95-33 97-32 95-29 92-29 89-29 86-32 84-37 82-40 81-45 80-50 80-55 79-60 79-66zM31-43 31-36 35-37 39-38 45-38 50-39 50-35 44-34 39-33 33-32 27-31 22-30 16-29 10-29 9-26 8-25 6-27 4-34 9-34 14-35 20-35 25-36 25-43 9-43 8-47 25-47 25-54 31-53 33-52 33-51 31-50 31-47 39-47 42-50 45-48 49-45 47-43zM31-73 31-68 42-68 46-71 50-68 52-66 50-63 36-63 36-58 37-57 38-56 41-56 44-57 46-58 46-60 46-62 49-61 49-59 50-58 50-57 51-57 52-57 51-54 49-53 46-52 42-52 37-52 33-53 31-54 31-57 31-63 24-63 22-59 20-56 16-53 12-50 6-49 4-52 9-54 13-56 16-59 18-63 5-63 4-68 25-68 25-73 10-73 8-77 25-77 25-84 26-84 32-84 34-83 33-82 31-80 31-77 39-77 43-81 45-79 48-76 47-73z"/><path id="r188" d="M15-12 17-11 19-10 22-8 23-4 22-1 21 1 18 3 15 4 13 4 11 3 8 0 7-4 8-7 10-9 12-11z"/><path id="r189" d="M19-58 6-58 4-62 20-62 20-84 27-83 29-82 29-80 26-79 26-62 31-62 35-68 39-64 42-60 40-58 26-58 26-47 26-46 27-46 33-41 37-37 39-33 40-30 39-28 38-27 37-26 35-26 34-26 33-28 32-33 29-37 26-42 26 9 20 9 20-43 18-37 15-33 13-28 11-23 8-19 6-15 3-17 5-22 8-26 10-31 12-36 14-41 16-46 17-52zM70-18 74-14 78-10 82-7 86-4 91-1 96 2 93 5 91 8 86 5 82 2 78-1 74-5 70-9 67-13 64-9 60-5 56-2 52 1 47 4 42 6 37 9 34 5 39 2 44 0 48-3 52-7 56-10 60-14 63-18 60-23 57-28 55-33 53-38 51-44 50-50 47-45 44-40 41-36 38-39 40-43 42-47 45-52 46-56 48-61 50-67 51-72 52-78 53-84 59-83 62-81 64-80 62-79 59-77 58-72 57-68 55-63 84-63 89-69 93-65 96-61 94-58 84-58 83-52 82-46 81-41 79-36 77-31 75-27 73-22zM67-23 69-27 71-32 73-37 74-42 75-47 77-52 77-58 53-58 53-57 52-56 54-51 55-46 57-41 59-36 62-32 64-27z"/><path id="r190" d="M84-46 15-46 15-77 18-76 22-75 36-75 36-84 43-83 46-81 45-80 42-79 42-75 57-75 57-84 64-83 66-81 65-80 63-79 63-75 77-75 81-79 85-75 87-72 87-71 86-71 84-69zM42-63 57-63 57-70 42-70zM42-58 42-51 57-51 57-58zM36-51 36-58 21-58 21-51zM36-63 36-70 21-70 21-63zM78-51 78-58 63-58 63-51zM78-63 78-70 63-70 63-63zM74-12 25-12 25-10 19-10 19-32 22-31 25-30 26-30 73-30 76-33 81-30 83-27 82-26 80-24 80-10 74-10zM74-17 74-25 25-25 25-17zM38 1 57 1 59-3 61-7 64-12 70-9 72-6 71-5 68-5 65-2 62 1 83 1 88-5 93-1 96 3 95 6 5 6 4 1 35 1 34 0 32-5 28-9 30-12 36-8 40-5 41-2 40 0zM83-40 88-46 91-43 95-39 94-36 6-36 5-40z"/><path id="r191" d="M19-25 19-18 12-18 12-63 16-62 20-61 46-61 46-82 52-82 56-81 57-79 56-78 52-76 52-61 80-61 83-65 89-60 90-58 90-57 89-56 87-55 87-19 81-19 81-25 52-25 52 9 46 9 46-25zM19-31 46-31 46-56 19-56zM81-31 81-56 52-56 52-31z"/><path id="r192" d="M54-49 55-43 57-38 60-33 63-28 66-23 70-19 73-15 77-12 82-9 86-6 91-4 96-1 93 1 90 5 86 3 82 0 78-2 75-5 71-9 67-13 63-17 60-22 57-27 55-32 53-37 51-41 51-44 49-39 48-34 46-29 43-24 41-20 38-16 34-12 31-8 27-5 23-1 18 2 13 4 7 7 5 3 10 0 16-3 20-6 25-10 29-14 32-18 35-23 38-28 40-33 42-38 44-43 45-49 8-49 6-54 45-54 45-57 46-60 46-81 52-81 55-80 56-78 55-77 52-75 52-60 52-56 52-54 81-54 86-60 90-56 94-52 92-49z"/><path id="r193" d="M50-46 50-40 49-34 48-28 47-23 46-18 44-13 42-8 40-4 37 0 34 4 30 8 27 5 30 1 33-3 35-8 38-12 39-17 41-22 42-27 42-32 43-37 43-42 43-48 43-78 44-78 45-77 48-76 49-76 50-75 83-75 88-81 92-77 96-73 94-70 50-70 50-51 82-51 85-55 90-50 92-47 92-46 91-45 89-44 87-39 85-33 83-29 81-24 78-20 75-15 79-11 83-7 87-4 92-1 98 1 95 4 92 8 88 5 83 1 79-2 75-6 71-10 67-6 63-2 58 1 53 4 48 6 43 9 41 5 45 3 49 1 53-2 56-4 61-8 64-11 67-15 64-19 62-24 59-29 57-34 55-40 54-46zM71-19 74-24 76-29 78-34 80-40 82-46 58-46 60-40 62-35 65-29 68-24zM26-50 27-50 30-46 33-42 35-37 36-33 37-28 36-23 35-19 33-15 31-13 28-11 24-11 23-13 21-14 19-15 16-16 16 9 9 9 9-80 12-79 16-78 30-78 33-82 38-77 39-74 38-73 36-72 34-66 31-60 29-55zM21-50 23-54 25-58 27-63 28-68 30-73 16-73 16-19 20-19 24-19 28-19 30-22 30-25 31-29 30-34 28-40 25-45z"/><path id="r194" d="M47-2 47-26 19-26 18-31 47-31 47-53 24-53 22-48 19-43 17-39 14-34 10-30 7-33 10-37 12-41 14-45 16-50 18-55 20-60 21-65 23-71 24-77 30-76 33-74 34-72 33-71 30-70 28-66 27-61 26-58 47-58 47-82 53-81 57-80 58-79 57-77 54-76 54-58 76-58 81-64 85-60 89-56 87-53 54-53 54-31 71-31 76-37 80-34 84-29 82-26 54-26 54-2 82-2 88-8 92-4 96 0 94 3 6 3 4-2z"/><path id="r195" d="M59-50 69-50 72-53 77-49 79-47 78-46 75-44 75-14 70-14 70-20 58-20 58-13 52-13 52-52 55-51 58-50zM58-45 58-25 70-25 70-45zM29-74 29-64 33-64 37-68 40-65 42-62 40-59 29-59 29-49 33-49 37-54 39-51 42-47 40-44 29-44 29-34 36-34 39-37 44-33 45-31 45-30 44-30 42-28 42-20 42-12 41-6 40-1 39 3 37 5 34 8 29 8 28 7 27 6 24 5 20 4 20 1 24 1 29 1 32 1 34-1 35-4 36-9 36-14 37-21 37-29 14-29 14-25 8-25 8-81 9-81 10-80 12-80 14-79 35-79 40-83 43-80 45-77 44-74zM23-74 14-74 14-64 23-64zM23-59 14-59 14-49 23-49zM23-44 14-44 14-34 23-34zM57-63 55-58 52-53 50-48 46-43 43-45 46-50 48-55 50-60 51-66 53-72 54-78 55-84 60-83 63-82 64-81 63-79 60-78 59-72 58-67 85-67 88-71 93-67 95-64 94-63 92-61 92-46 91-38 91-31 91-24 91-19 91-14 91-10 90-6 89 0 87 4 83 6 80 7 77 8 76 5 73 4 70 3 63 2 63-2 68-2 72-1 77-1 81-2 83-4 84-5 84-8 85-12 85-17 85-23 85-30 86-38 86-47 85-63zM7-21 10-20 11-17 11-14 10-9 10-4 8 0 7 3 5 3 4 3 3 2 2 1 2 0 2-1 4-5 6-9 6-13 7-17zM22-23 25-18 27-13 27-9 26-6 24-5 23-5 22-6 22-7 22-8 22-12 21-17 19-22zM27-26 31-21 34-17 34-13 33-11 31-10 30-10 29-12 29-16 27-20 25-24zM16-22 18-16 19-11 19-7 18-3 16-2 14-3 14-4 14-5 14-8 14-11 14-16 13-21z"/><path id="r196" d="M20-7 46-7 46-80 52-80 56-79 57-78 56-76 53-75 53-7 80-7 80-62 86-62 89-61 90-59 89-58 86-56 86 6 80 6 80-2 20-2 20 7 13 7 13-62 19-61 23-60 24-59 23-58 20-56z"/><path id="r197" d="M5 0 9-4 12-8 15-13 18-18 21-23 23-28 24-33 26-37 27-43 28-48 29-54 30-60 36-58 39-57 41-55 40-54 36-52 35-46 34-40 32-34 30-29 28-24 26-19 23-14 20-9 16-5 12-1 8 3zM57-73 61-78 66-73 68-70 67-69 63-67 64-61 65-56 67-51 68-46 70-41 72-36 74-32 76-28 79-23 82-19 85-15 89-11 93-7 97-4 93-1 90 3 86-1 82-6 79-10 76-15 73-20 70-25 67-31 66-36 64-41 62-46 61-51 60-56 59-62 58-68 36-68 34-73z"/><path id="r198" d="M23-77 79-77 82-81 88-76 89-74 89-73 88-73 86-71 86-51 80-51 80-56 22-56 22-52 22-46 21-39 21-33 20-28 19-23 18-18 17-13 15-7 12-2 9 3 6 7 3 5 5 0 8-5 10-10 12-15 13-21 14-26 14-31 15-35 15-41 15-46 15-52 15-79 19-78zM22-72 22-61 80-61 80-72zM56-43 56-33 74-35 78-40 83-37 86-34 85-31 56-28 56-19 80-21 85-27 89-23 92-20 91-17 56-14 56-3 56-1 57 0 59 0 64 0 70 0 76 0 80 0 83 0 85-1 86-4 87-8 87-12 91-11 91-9 91-8 91-4 92-2 93-1 95-1 95 2 94 4 92 5 89 6 85 6 80 6 75 6 70 6 62 6 56 6 53 5 50 3 50-2 50-13 23-11 21-15 50-18 50-28 26-25 24-30 50-32 50-42 44-41 38-40 33-40 28-39 26-43 32-44 39-44 44-45 50-47 55-48 60-50 65-51 69-53 74-50 76-48 75-47 73-47 72-47 70-47 66-46 61-44z"/><path id="r199" d="M53-42 43-42 43-39 37-39 37-80 40-79 43-78 81-78 85-81 89-77 91-75 91-74 90-73 88-72 88-39 82-39 82-42 71-42 75-38 79-34 84-31 88-28 93-26 99-24 96-21 94-18 89-20 84-23 79-27 78-26 77-25 77 7 71 7 71-30 74-30 77-29 73-34 69-38 66-42 60-42 57-38 54-34 51-30 57-29 59-28 58-26 55-25 55-22 55-16 54-11 52-7 50-3 46 1 43 4 38 6 33 8 31 5 36 2 40 0 43-4 46-7 47-12 49-17 49-22 49-28 45-25 42-22 38-19 33-17 28-14 26-18 31-20 36-23 40-26 44-30 47-34 50-38zM65-63 82-63 82-73 65-73zM65-58 65-47 82-47 82-58zM59-47 59-58 43-58 43-47zM59-63 59-73 43-73 43-63zM16-23 16-53 4-53 3-58 16-58 16-83 21-82 25-81 26-80 25-79 22-77 22-58 25-58 29-64 32-61 35-56 33-53 22-53 22-25 26-27 30-30 35-32 35-28 30-24 25-21 20-18 15-16 10-13 9-10 8-9 5-11 3-18 8-20 12-21z"/><path id="r200" d="M46-32 27-32 26-36 40-36 39-37 38-38 36-43 32-47 34-49 40-46 44-43 45-40 44-38 42-36 52-36 55-40 57-45 58-49 65-47 67-45 65-44 62-43 60-40 57-36 65-36 69-41 69-40 72-37 74-34 73-32 52-32 52-23 67-23 72-27 75-24 78-21 77-18 52-18 52-17 51-15 52-15 58-12 64-9 68-6 70-4 71-2 70-1 69 1 68 2 67 2 66 2 64 0 62-3 58-6 54-9 50-12 47-8 44-4 40-1 36 1 31 2 25 4 24 0 30-1 35-4 39-7 42-10 44-14 46-18 23-18 22-23 46-23zM62-80 84-80 87-84 92-79 94-77 94-76 93-76 91-74 91 1 90 5 87 7 84 8 81 8 80 6 79 5 76 4 72 3 72 0 76 0 81 0 83 0 84 0 85-1 85-2 85-52 61-52 61-50 55-50 55-82 58-82zM61-75 61-69 85-69 85-75zM85-56 85-64 61-64 61-56zM16-80 37-80 40-84 45-80 47-77 46-77 46-76 44-75 44-49 38-49 38-52 15-52 15 9 9 9 9-82 12-81zM15-75 15-69 38-69 38-75zM15-56 38-56 38-64 15-64z"/><path id="r201" d="M43-64 41-59 40-55 38-51 35-47 32-44 29-41 25-39 20-37 15-35 10-33 8-37 13-39 18-41 22-43 26-45 29-49 32-54 35-59 36-64 18-64 17-59 15-54 13-51 10-50 9-50 7-52 6-53 6-54 6-56 8-57 10-60 12-64 14-68 14-73 18-72 18-71 19-69 47-69 47-84 52-84 56-83 57-82 56-81 53-79 53-69 84-69 87-73 93-68 95-64 94-63 93-63 89-62 85-58 81-53 78-56 80-60 83-64 61-64 61-46 62-44 63-43 66-43 72-43 78-43 81-43 82-45 84-48 84-53 88-52 88-47 89-45 90-44 92-44 91-40 89-38 87-38 83-38 77-37 69-37 63-37 60-38 57-39 56-41 55-42 55-44 55-64zM53-23 53 0 81 0 88-6 92-3 95 1 93 5 7 5 6 0 46 0 46-23 16-23 15-27 72-27 78-33 82-30 85-26 83-23z"/><path id="r202" d="M27-72 39-72 40-76 42-80 43-85 49-83 52-82 53-80 52-79 49-78 47-75 44-72 70-72 73-76 79-72 80-69 79-68 77-66 77-42 71-42 71-45 26-45 26-38 84-38 89-44 93-41 96-37 94-34 26-34 26-27 82-27 85-30 90-26 92-24 92-23 91-22 89-21 88-13 88-7 86-2 84 2 82 5 78 8 74 8 74 6 72 5 69 4 65 4 65 0 69 0 73 0 77 0 80-3 81-6 82-10 83-16 83-22 19-22 19-75 23-74zM26-68 26-61 71-61 71-68zM71-56 26-56 26-50 71-50zM15-5 32-5 32-20 39-19 42-18 41-16 38-15 38-5 55-5 55-17 62-17 65-15 64-14 61-12 61 4 55 4 55 0 15 0 15 5 9 5 9-17 14-17 18-16 19-15 18-13 15-12z"/><path id="r203" d="M40-33 18-33 18-16 12-16 12-60 15-59 18-58 39-58 42-61 47-57 48-55 48-54 46-52 46-24 45-20 43-18 40-18 36-17 35-19 34-21 31-21 26-22 26-25 31-25 37-25 39-25 40-26 40-27 40-28zM40-48 40-53 18-53 18-48zM40-43 18-43 18-37 40-37zM14-68 17-73 19-77 21-81 22-85 29-83 31-81 30-80 27-79 25-75 22-72 19-68 25-69 31-69 36-69 41-69 38-73 34-75 36-78 43-74 48-70 51-67 52-64 52-62 51-61 49-60 48-60 47-60 46-62 45-64 44-66 38-65 32-65 26-64 21-63 15-63 9-63 8-60 7-60 5-62 4-68 10-68zM61-70 66-71 71-72 75-74 80-76 84-79 88-75 90-73 89-72 88-71 87-71 85-72 81-70 77-69 72-68 67-67 61-66 61-60 62-58 63-57 67-57 75-57 81-57 84-57 86-58 87-60 87-63 87-67 91-66 91-62 92-59 93-58 95-58 94-56 94-54 92-53 89-52 85-52 80-52 74-52 66-52 61-52 58-53 56-55 56-59 56-83 63-82 65-81 64-79 61-78zM61-37 67-38 72-40 77-42 81-44 85-47 90-43 91-40 89-39 88-39 86-40 82-38 78-37 73-35 67-34 61-33 61-28 62-26 63-25 66-24 70-24 76-24 82-24 84-24 86-25 87-27 88-31 88-35 92-33 92-29 92-26 94-25 96-25 95-22 94-20 93-19 90-19 87-18 82-18 74-18 68-18 63-19 60-19 57-20 56-22 56-24 56-26 56-49 63-48 65-46 64-45 61-43zM76-17 81-13 85-10 89-6 92-3 94 0 95 2 94 4 93 6 91 7 90 7 88 7 88 5 86 2 84-2 81-6 78-10 74-14zM19-14 23-12 21-7 19-2 17 2 14 5 11 8 9 8 7 8 6 6 5 5 5 4 5 2 6 2 6 1 8 0 11-2 15-6 17-10zM37-15 39-10 42-5 43-1 43 2 42 6 38 7 36 7 36 5 36 4 36 2 36 0 36-4 35-9 33-13zM56-16 61-11 65-6 67-2 68 2 67 5 65 6 64 7 62 7 61 6 60 4 59 0 58-4 56-9 53-13z"/><path id="r204" d="M69-20 66-25 64-29 62-34 60-39 59-45 57-51 56-57 54-63 49-63 47-68 82-68 86-72 91-67 93-64 92-64 92-63 89-62 88-56 87-50 85-44 84-39 82-34 80-29 78-25 76-21 79-17 82-13 85-9 89-6 93-2 98 2 95 4 92 7 88 4 85 1 82-3 79-6 76-10 72-15 69-10 66-6 62-2 58 2 54 5 49 9 46 6 50 2 55-2 58-6 62-10 66-15zM72-26 74-31 76-36 78-41 79-46 80-52 82-57 82-63 59-63 60-58 61-53 63-49 64-45 65-40 67-36 70-31zM44-72 44 9 38 9 38-14 32-13 27-11 21-10 16-8 11-7 10-4 9-3 7-5 6-8 4-14 9-14 14-15 14-72 5-72 4-77 44-77 48-82 52-79 55-75 53-72zM38-72 20-72 20-58 38-58zM20-15 26-16 32-17 38-19 38-33 20-33zM38-53 20-53 20-38 38-38z"/><path id="r205" d="M37-16 32-20 27-23 22-26 17-29 20-33 24-30 29-28 33-26 37-23 41-21 44-24 47-28 50-32 53-37 59-33 61-31 60-30 56-29 53-25 50-21 46-17 51-14 55-11 58-8 61-5 62-2 62-1 61 0 60 1 58 2 57 1 56 0 53-3 50-6 46-9 42-13 38-9 34-6 30-3 25 0 21 2 16 5 12 7 9 3 14 1 19-2 24-5 28-9 33-12zM30-71 76-71 81-77 84-74 88-70 87-67 27-67 24-62 21-57 17-53 14-49 10-45 7-48 10-52 13-56 16-60 19-64 22-69 24-74 26-79 28-84 33-83 37-82 38-80 37-79 33-78 31-74zM71-59 76-63 79-60 83-57 81-54 26-54 25-59zM68-45 72-49 77-45 79-43 79-42 78-41 75-40 76-34 77-28 78-22 80-17 82-12 84-8 86-5 87-4 88-5 89-8 90-12 91-17 92-22 96-20 95-13 94-8 94-4 95 0 96 2 95 6 91 7 89 6 85 4 83 1 80-2 77-6 75-11 73-15 72-20 71-25 70-30 70-35 69-41 15-41 13-45z"/><path id="r206" d="M61-42 61 0 61 4 59 6 56 8 50 8 49 6 47 5 44 4 38 3 38-1 41 0 46 0 51 0 53 0 54-1 55-2 55-3 55-42 25-42 24-47 81-47 86-53 91-49 94-45 92-42zM20-62 20-46 20-39 20-33 19-27 19-22 18-17 16-12 15-7 13-2 10 3 7 7 4 5 6 0 8-5 10-10 11-15 12-21 13-25 13-30 14-35 14-40 14-46 14-70 17-69 21-67 48-67 48-84 54-84 57-83 59-81 57-80 54-78 54-67 81-67 86-73 90-70 94-66 92-62z"/><path id="r207" d="M15-85 20-84 24-81 26-77 27-73 27-70 26-68 24-65 22-63 19-62 15-61 12-61 9-63 6-66 4-69 4-73 4-76 5-78 8-82 11-84zM15-80 12-79 10-78 9-75 8-73 8-71 9-69 12-66 15-66 18-66 20-67 22-70 23-73 22-76 19-79 17-80zM88-53 84-53 83-58 80-62 77-66 74-69 69-71 65-72 59-73 54-72 49-71 45-68 41-65 38-61 35-57 34-53 33-48 32-43 32-38 32-32 33-27 35-22 37-17 41-13 45-10 49-7 55-5 60-5 65-5 70-6 74-8 78-10 81-13 84-17 86-22 88-27 92-25 90-20 88-15 86-11 83-8 80-5 76-2 71 0 65 1 59 2 54 2 49 1 44-1 40-3 36-6 33-10 30-13 27-18 26-22 24-27 23-32 23-38 23-43 24-48 26-53 27-58 30-62 33-66 37-70 41-73 46-75 50-77 54-78 59-78 64-78 69-77 74-75 78-73 81-72 82-71 83-72 84-76 88-76z"/><path id="l208" d="M76-79 72-77 75-73 78-68 80-63 84-65 81-70 78-75zM86-83 82-81 85-77 88-72 91-67 95-69 92-73 89-78zM47-75 41-77 40-73 39-70 37-67 35-64 32-60 29-56 26-51 22-47 17-43 12-39 7-36 11-32 16-36 21-39 25-43 28-46 31-50 34-54 37-57 74-57 73-53 71-48 69-43 66-38 64-33 60-28 57-24 54-20 50-17 46-13 42-10 38-7 33-5 28-2 23 0 17 2 22 6 28 3 33 1 38-2 43-5 47-8 51-11 55-14 58-17 61-21 65-26 68-31 71-36 74-41 76-46 78-51 79-56 80-58 81-60 76-63 74-62 71-62 40-62 42-65 44-68 45-72z"/><path id="l209" d="M24-73 24-68 28-68 32-68 35-68 41-68 48-68 55-68 62-68 68-68 72-68 76-68 80-68 80-73 76-73 72-73 68-73 62-73 55-73 48-73 41-73 35-73 32-73 27-73zM86-48 82-51 81-50 78-50 76-50 71-50 65-50 58-50 51-50 43-50 36-50 30-50 26-50 23-50 19-50 15-51 15-45 19-45 23-45 26-45 30-45 36-45 44-45 51-45 59-45 66-45 72-45 77-45 79-45 78-40 76-35 73-30 70-25 66-20 62-16 58-13 53-10 48-7 42-5 37-3 31-2 35 3 40 2 44 0 49-2 54-4 58-7 62-10 67-13 71-17 74-22 77-26 80-31 82-36 84-41 85-46 86-47z"/><path id="l210" d="M84-66 81-69 79-69 77-68 74-68 69-68 62-68 55-68 47-68 39-68 32-68 27-68 24-68 20-69 15-69 15-63 19-63 24-64 27-64 32-64 39-64 47-64 55-64 63-64 69-64 75-64 78-64 77-59 76-54 74-48 72-43 70-38 67-33 64-28 61-24 57-21 53-17 49-14 44-11 38-8 32-6 25-4 30 1 36-1 41-4 46-6 51-9 55-12 58-15 62-18 65-22 68-25 72-30 74-35 77-41 79-46 81-52 82-58 83-62 84-65z"/><path id="l211" d="M52-78 46-80 45-77 43-74 42-70 39-67 37-63 34-58 30-54 26-50 21-46 17-42 11-38 15-35 20-38 25-42 29-46 33-50 36-54 39-58 42-61 79-61 77-56 75-51 73-46 70-41 67-35 64-30 59-33 54-37 50-40 45-43 41-45 37-42 42-39 46-36 51-33 56-30 60-26 57-23 53-19 49-16 45-13 41-10 36-7 31-5 26-3 20-1 25 3 31 1 36-2 41-4 46-7 50-10 54-13 58-17 61-20 64-23 68-20 72-17 76-14 79-18 76-21 72-24 68-27 71-32 74-37 77-41 79-46 81-51 83-56 84-60 85-62 86-64 81-67 79-66 76-66 45-66 48-72 50-75z"/><path id="l212" d="M10-34 13-30 18-31 24-33 29-35 34-38 39-40 44-42 48-45 52-47 52-7 52-2 52 2 58 2 58-2 58-7 58-50 63-54 68-57 72-61 77-65 81-69 85-73 81-77 77-72 73-68 68-64 64-61 59-57 54-54 49-51 45-48 39-46 34-43 28-41 22-38 16-36z"/><path id="l213" d="M35-8 35-3 35 2 41 2 40-3 40-8 40-44 45-43 50-41 55-39 61-37 66-34 72-32 77-30 81-27 84-33 79-35 74-37 68-39 62-42 57-44 51-46 45-48 40-50 40-67 40-72 41-76 34-76 35-71 35-67 35-63 35-58 35-51 35-44 35-36 35-29 35-21 35-15 35-11z"/><path id="l214" d="M54-2 57 1 58 0 60-1 65-3 69-6 74-9 78-13 83-16 87-20 91-24 94-29 91-33 88-29 84-25 80-21 76-17 72-14 67-11 63-9 59-7 59-8 59-13 59-19 59-27 59-36 59-44 59-52 59-59 59-65 59-68 59-72 60-74 54-74 54-72 54-68 54-65 54-60 54-53 54-45 54-37 54-28 54-21 54-14 54-9 54-7 54-4zM8-2 13 1 17-2 21-6 24-11 27-15 29-20 31-25 32-30 32-35 33-40 33-46 34-52 34-58 34-63 34-68 34-71 34-74 28-74 29-71 29-68 29-62 29-57 29-50 28-44 28-37 27-32 26-27 24-22 22-17 19-13 16-9 12-5z"/><path id="r215" d="M50-81 93 2 7 2zM50-71 14-3 86-3z"/><path id="L216" d="M24-38 29-38 34-37 37-36 41-34 44-30 45-25 46-19 45-13 43-8 40-4 37-2 33 0 28 1 23 1 17 1 11 0 6-1 6-15 9-15 11-6 14-5 16-4 19-3 22-3 27-3 31-5 33-7 35-10 37-14 37-19 37-24 36-28 34-31 31-33 27-34 21-34 17-34 13-33 8-33 8-65 41-65 41-58 12-58 12-37 18-38z"/><path id="L217" d="M18-4 18-2 17 0 15 1 12 1 10 1 8 0 7-2 7-4 7-7 8-9 10-10 12-10 15-10 17-9 18-7z"/><path id="L218" d="M46-33 46-27 45-21 44-16 43-11 41-8 38-4 36-2 32 0 29 1 25 1 20 0 16-1 12-4 9-8 7-12 6-16 5-21 4-27 4-33 4-39 5-45 6-50 7-54 9-58 12-62 16-64 20-66 25-67 30-66 34-64 38-62 41-58 43-54 44-50 45-45 46-39zM37-33 37-40 36-47 36-52 34-56 32-60 29-62 25-63 21-62 18-60 16-56 14-52 13-47 13-41 13-33 13-25 14-19 14-14 16-10 18-6 21-4 25-3 29-4 32-6 34-10 36-14 36-19 37-26z"/><path id="L219" d="M4-20 4-27 30-27 30-20z"/><path id="L220" d="M31-4 44-3 44 0 9 0 9-3 22-4 22-57 9-53 9-55 28-66 31-66z"/><path id="L221" d="M44 0 4 0 4-7 13-15 19-20 23-24 26-28 30-33 32-38 34-43 34-49 33-55 31-59 27-61 22-62 19-62 16-61 14-61 12-60 10-52 7-52 7-64 12-65 17-66 22-66 28-66 34-64 38-62 41-58 43-54 43-49 43-44 41-39 38-34 35-29 32-26 29-23 25-20 20-16 17-13 14-10 11-8 44-8z"/><path id="L222" d="M46-18 45-12 43-8 40-4 37-2 33 0 28 1 23 1 17 1 11 0 5-1 5-15 8-15 10-6 13-5 16-4 19-3 22-3 27-3 31-5 33-7 35-9 37-13 37-18 36-24 34-28 29-31 23-32 16-32 16-36 23-37 28-38 31-40 33-44 34-50 33-55 31-59 28-61 22-62 19-62 17-61 14-61 12-60 10-52 7-52 7-64 11-65 15-66 19-66 22-66 28-66 32-65 36-63 39-61 41-58 43-54 43-50 43-46 41-42 39-39 37-37 33-35 29-34 34-33 39-32 42-29 44-26 46-22z"/><path id="L223" d="M40-14 40 0 31 0 31-14 2-14 2-21 34-66 40-66 40-21 48-21 48-14zM31-54 7-21 31-21z"/><path id="L224" d="M47-20 46-14 45-9 42-5 38-1 33 0 27 1 22 0 17-1 13-4 10-8 8-11 6-16 5-21 5-26 4-32 4-37 5-42 6-47 7-51 10-55 13-59 16-62 20-64 24-66 29-66 34-66 38-65 43-65 43-53 40-53 38-60 36-61 34-61 31-62 29-62 24-61 21-59 18-55 16-51 15-47 14-41 13-35 19-37 24-39 29-39 35-39 39-37 42-34 45-31 47-26zM27-3 32-4 35-7 37-10 38-14 38-19 38-24 37-28 35-31 32-34 27-35 23-34 18-33 13-32 13-25 14-19 15-14 17-10 19-6 23-4z"/><path id="L225" d="M10-50 7-50 7-65 47-65 47-62 18 0 12 0 40-58 12-58z"/><path id="L226" d="M44-50 44-45 42-40 39-37 35-35 39-32 43-28 45-23 46-18 46-12 44-7 41-4 38-2 34 0 30 1 25 1 19 1 14-1 11-2 8-5 6-9 4-13 4-18 5-24 7-28 11-32 15-35 12-37 8-40 6-45 6-50 6-55 8-59 11-62 15-65 19-66 25-67 31-66 35-65 39-62 42-59 44-55zM37-18 37-22 36-26 34-29 30-32 25-33 19-32 15-29 14-26 13-23 13-18 13-13 14-9 15-6 19-4 25-3 30-4 34-6 36-9 37-13zM35-50 35-55 33-59 29-62 25-63 20-62 17-60 15-55 15-50 15-44 17-40 20-38 25-37 30-38 33-40 35-44z"/><path id="L227" d="M3-46 4-52 6-57 9-61 13-64 18-66 24-66 30-66 34-64 38-62 41-58 43-55 44-50 45-45 46-39 46-33 46-27 45-21 43-16 42-12 39-8 36-4 31-1 26 0 20 1 15 1 10 0 6-1 6-12 9-12 11-5 13-4 15-4 18-3 20-3 25-4 29-6 32-10 34-14 35-18 36-24 37-30 32-28 27-26 22-26 16-27 12-28 8-31 5-35 4-40zM24-62 20-62 17-60 14-56 13-51 12-45 13-41 14-37 15-34 19-32 24-31 28-31 33-32 37-33 37-40 36-46 35-51 34-55 32-59 28-62z"/><path id="s228" d="M33-75 36-71 38-68 40-64 20-63 22-68 24-73 26-77 28-82 21-84 19-79 17-74 14-68 12-63 4-63 5-56 9-56 14-56 20-56 26-57 31-57 37-57 44-58 45-55 46-52 53-55 51-59 49-63 46-68 43-73 40-77zM38-42 38-33 17-33 17-42zM10-48 10 8 17 8 17-12 38-12 38-1 38 1 37 1 33 1 26 1 28 4 29 8 34 8 39 7 42 6 45 4 46-1 46-48zM17-28 38-28 38-18 17-18zM86-76 82-75 78-73 73-71 68-69 63-67 63-84 55-84 55-51 56-45 58-42 61-41 67-40 72-40 79-40 84-40 89-41 92-42 94-45 95-49 96-56 92-57 89-58 88-51 87-48 84-47 79-47 72-47 68-47 64-48 63-51 63-61 68-63 74-65 80-67 86-69 91-71zM87-32 83-30 78-27 73-25 68-23 62-21 62-37 55-37 55-4 56 2 58 5 61 7 68 7 73 7 80 7 85 7 90 7 93 5 95 2 96-3 97-10 93-11 90-13 89-4 88-1 85 0 80 0 73 0 68 0 64 0 62-4 62-15 68-17 73-18 78-20 83-22 88-24 92-26z"/><path id="s229" d="M9-47 9-42 24-42 24-35 5-34 5-28 10-28 15-29 20-29 25-29 31-30 37-30 43-31 48-31 48-37 31-35 31-42 47-42 47-47 31-47 31-52 24-52 24-47zM24-84 24-78 9-78 9-73 24-73 24-68 5-68 5-62 18-62 15-58 11-55 5-53 7-51 8-48 14-50 18-53 22-57 24-62 31-62 31-58 32-54 34-52 38-52 41-52 45-52 49-53 51-58 48-59 46-60 45-57 44-56 41-56 39-56 38-56 37-58 37-62 51-62 51-68 31-68 31-73 46-73 46-78 31-78 31-84zM46-28 45-25 44-22 11-22 11-16 42-16 40-12 38-9 35-7 31-4 26-2 20-1 13 1 6 2 8 5 9 8 17 7 24 5 30 3 35 1 40-2 43-5 46-8 48-12 50-16 79-16 78-7 76-2 75 1 73 1 71 2 68 1 63 1 58 1 59 4 60 8 65 8 70 8 74 8 78 7 81 5 83 3 84 0 85-4 86-11 87-18 87-20 87-22 52-22 53-25 53-28zM64-84 64-72 53-72 53-66 64-66 63-60 62-55 58-57 55-59 51-55 56-52 61-49 59-45 56-40 53-37 48-33 51-31 53-29 57-32 61-36 64-41 66-46 71-42 75-38 78-44 76-47 72-49 68-52 69-56 70-61 70-66 80-66 80-58 81-51 81-45 82-40 83-35 84-32 86-29 88-27 91-27 94-27 96-30 97-35 98-42 95-43 93-46 93-39 92-35 91-33 90-34 89-36 88-40 88-44 87-50 87-57 87-64 87-72 71-72 71-84z"/><path id="s230" d="M80-58 79-52 78-47 76-42 75-37 73-32 70-28 68-24 65-29 62-34 60-39 59-45 57-51 56-56 56-58zM57-84 55-78 54-72 52-67 49-61 47-56 44-51 41-47 38-43 41-40 43-37 46-40 49-44 51-48 52-42 54-37 56-32 58-27 61-22 63-17 60-13 56-10 52-6 47-3 42 0 37 2 40 5 42 8 47 6 52 3 56 0 61-3 64-7 68-11 71-7 74-3 78 0 82 3 87 6 92 8 94 5 97 1 92-1 87-3 83-6 79-10 76-13 73-17 75-21 78-26 80-31 82-36 84-41 86-46 87-52 88-58 95-58 95-65 59-65 61-69 62-73 63-78 65-83zM21-84 21-63 5-63 5-55 20-55 18-50 17-44 15-39 13-33 10-28 8-23 5-19 3-15 5-12 7-9 9-13 12-17 14-22 17-28 19-33 21-39 21 8 28 8 28-37 31-32 35-27 38-22 40-19 44-25 42-28 39-32 35-37 31-42 28-46 28-55 42-55 42-63 28-63 28-84z"/><path id="s231" d="M46-84 46-67 5-67 5-60 36-60 36-52 35-45 34-38 32-31 30-25 27-18 23-12 18-7 12-2 4 2 7 5 10 8 15 5 21 2 25-2 29-6 32-11 35-15 37-20 39-25 40-31 42-36 75-36 74-27 73-19 72-13 72-8 71-4 69-2 68 0 66 1 64 1 60 1 54 1 47 0 48 4 49 8 56 8 62 8 66 8 71 7 75 4 76 3 77 0 78-4 79-8 80-14 81-21 82-29 83-39 83-42 83-43 43-43 44-49 44-54 44-60 95-60 95-67 54-67 54-84z"/><path id="s232" d="M7-41 7-36 94-36 94-41zM26-25 74-25 74-16 26-16zM28-10 30-5 32 0 5 0 5 6 95 6 95 0 67 0 70-5 73-10 69-11 82-11 82-31 18-31 18-11 33-11zM37 0 40-1 37-6 34-11 66-11 63-6 60-1 62 0zM21-59 35-59 35-52 21-52zM42-59 56-59 56-52 42-52zM63-59 78-59 78-52 63-52zM21-71 35-71 35-64 21-64zM42-71 56-71 56-64 42-64zM63-71 78-71 78-64 63-64zM56-84 56-77 42-77 42-84 35-84 35-77 14-77 14-47 85-47 85-77 63-77 63-84z"/><path id="s233" d="M46-84 46-66 10-66 10-19 17-19 17-25 46-25 46 8 54 8 54-25 82-25 82-19 90-19 90-66 54-66 54-84zM17-32 17-59 46-59 46-32zM82-32 54-32 54-59 82-59z"/><path id="s234" d="M46-84 46-79 46-73 46-68 45-62 45-55 6-55 6-48 43-48 42-42 40-36 38-31 35-25 32-20 28-15 23-10 18-6 11-2 4 2 7 5 10 8 17 4 23 0 28-4 33-9 37-14 41-19 44-25 46-30 48-36 50-42 53-35 55-29 59-23 62-17 66-12 70-7 74-3 79 1 85 5 90 8 93 4 96 1 90-2 85-5 80-9 76-13 71-18 68-23 64-29 61-35 59-41 56-48 94-48 94-55 53-55 53-62 54-68 54-73 54-79 54-84z"/><path id="s235" d="M43-78 43-49 43-44 43-39 43-34 42-28 41-23 40-17 39-12 36-6 34-1 31 3 34 5 36 8 40 3 42-2 44-7 46-12 48-18 49-23 49-29 50-34 50-40 50-45 51-45 53-39 54-34 56-30 59-25 61-20 64-16 66-12 63-9 59-5 54-3 50 0 45 2 48 5 50 8 54 6 59 3 63 0 67-3 71-6 75-3 79 0 83 3 87 6 92 8 94 5 97 2 92 0 88-3 84-6 80-9 76-12 79-16 81-20 84-24 86-29 88-34 89-39 91-44 92-50 87-52 86-52 50-52 50-71 94-71 94-78zM83-45 82-40 80-35 78-30 76-26 74-22 71-18 68-22 66-26 64-30 61-35 60-40 58-45zM8-80 8 8 15 8 15-73 28-73 27-69 25-64 23-59 22-54 20-50 24-44 27-39 29-34 29-30 29-26 27-23 25-22 24-22 21-22 18-22 19-19 20-16 23-15 26-16 29-16 32-18 34-20 35-24 36-29 35-33 35-37 33-41 30-46 27-51 29-56 31-61 33-66 35-72 37-77 32-80 31-80z"/><path id="s236" d="M24-82 22-77 21-72 19-67 16-62 14-57 11-53 8-49 5-45 9-43 12-41 15-44 18-48 20-53 23-57 46-57 46-35 16-35 16-28 46-28 46-2 6-2 6 5 95 5 95-2 54-2 54-28 86-28 86-35 54-35 54-57 90-57 90-65 54-65 54-84 46-84 46-65 26-65 28-70 30-75 32-81z"/><path id="s237" d="M22-22 24-16 25-10 26-5 30-6 29-11 28-17 26-22zM15-21 16-16 16-11 17-6 16-2 21-3 21-7 20-12 20-16 19-21zM8-22 8-16 7-10 5-4 3 0 7 3 9-1 11-6 12-10 12-16 13-21zM57-84 55-79 54-73 52-68 50-63 47-59 45-55 42-51 46-49 48-46 51-51 54-56 57-61 87-61 87-49 86-39 86-30 86-22 85-16 85-11 85-7 84-4 83-2 83 0 81 1 79 1 76 1 72 1 66 1 68 4 69 8 74 8 78 8 82 8 86 7 89 4 90 2 91 0 91-4 92-8 92-14 93-21 93-29 93-39 94-51 94-64 94-66 94-68 60-68 61-73 63-77 64-82zM52-49 52-9 58-9 58-16 77-16 77-49zM58-42 71-42 71-22 58-22zM25-59 25-50 15-50 15-59zM9-80 9-28 39-28 39-22 38-17 38-13 36-16 35-21 32-24 29-23 31-19 33-14 34-10 38-11 37-5 36-1 35 1 34 2 33 2 29 2 25 2 26 5 26 8 32 8 35 8 38 7 41 5 42 4 43 1 43-3 44-8 44-14 45-22 45-32 45-33 46-34 31-34 31-44 42-44 42-50 31-50 31-59 42-59 42-65 31-65 31-74 44-74 44-80zM25-65 15-65 15-74 25-74zM25-44 25-34 15-34 15-44z"/><path id="s238" d="M82-60 82-9 54-9 54-82 46-82 46-9 18-9 18-60 10-60 10 7 18 7 18-1 82-1 82 6 90 6 90-60z"/><path id="s239" d="M29-57 28-51 26-44 25-38 23-31 21-24 19-18 16-12 12-7 8-2 4 3 7 5 10 8 15 3 19-2 22-8 26-14 28-21 31-28 33-35 34-42 36-49 37-56zM26-76 26-68 61-68 62-59 63-49 65-40 67-32 69-24 72-16 76-9 79-3 84 3 89 8 92 5 96 2 91-3 86-8 82-15 79-22 76-30 74-38 72-47 70-56 69-66 68-76z"/><path id="s240" d="M21-73 81-73 81-62 21-62zM13-79 13-50 13-45 13-40 13-34 12-29 12-23 11-17 9-12 8-6 6-1 3 4 7 6 10 8 12 3 15-3 16-9 18-15 19-21 20-27 20-33 21-39 21-45 21-50 21-55 88-55 88-79zM22-14 23-8 49-12 49-5 49 1 51 4 55 6 62 6 66 6 72 6 79 6 82 6 87 6 90 5 92 2 94-2 94-8 91-10 88-11 87-4 85-1 82 0 78 0 72 0 66 0 62 0 57-1 56-5 56-13 93-19 92-25 56-20 56-29 86-33 84-39 56-35 56-44 62-45 68-47 74-48 79-50 72-55 69-53 64-52 59-51 54-50 49-49 43-48 37-47 31-46 26-45 27-42 28-40 33-40 38-41 43-42 49-43 49-34 25-30 26-24 49-28 49-18z"/><path id="s241" d="M38-80 38-40 53-40 49-36 46-33 41-30 37-27 32-25 28-23 30-20 33-17 38-20 43-22 48-26 48-21 48-18 47-14 46-10 44-7 40-3 35 0 29 3 32 6 34 8 40 5 45 2 49-1 51-5 53-9 54-13 55-17 55-21 55-30 53-30 56-33 59-37 61-40 68-40 70-37 73-33 76-30 72-30 72 8 79 8 79-26 83-23 88-20 92-17 95-20 98-23 93-25 88-28 83-32 79-36 75-40 91-40 91-80zM45-57 61-57 61-46 45-46zM68-57 84-57 84-46 68-46zM45-74 61-74 61-63 45-63zM68-74 84-74 84-63 68-63zM3-20 6-12 11-14 15-17 20-19 25-21 30-24 36-26 34-33 24-29 24-56 34-56 34-64 24-64 24-84 17-84 17-64 5-64 5-56 17-56 17-26 12-23 7-21z"/><path id="s242" d="M88-80 54-80 54-47 84-47 84-1 84 0 82 1 73 1 75-1 76-2 70-4 65-6 61-9 57-13 54-17 76-17 76-22 53-22 53-23 53-30 74-30 74-36 63-36 68-44 61-46 59-41 56-36 43-36 41-41 38-46 32-44 34-40 36-36 26-36 26-30 46-30 46-23 46-22 24-22 24-17 45-17 43-13 40-10 36-7 30-4 23-2 25 1 27 3 34 1 40-2 45-5 48-9 50-12 53-8 57-4 61-1 66 1 72 3 73 1 74 5 75 8 81 8 85 8 88 7 91 4 92-1 92-80zM38-61 38-53 16-53 16-61zM38-66 16-66 16-74 38-74zM84-61 84-53 61-53 61-61zM84-66 61-66 61-74 84-74zM9-80 9 8 16 8 16-47 45-47 45-80z"/><path id="s243" d="M8-74 8-53 15-53 15-67 35-67 34-62 33-57 31-53 28-49 25-46 20-44 14-41 7-40 9-37 11-33 17-35 23-37 28-39 32-42 35-45 37-49 39-53 41-57 42-62 42-67 57-67 57-47 58-42 59-39 63-38 68-37 72-37 78-37 82-37 87-38 90-40 91-44 92-49 89-50 86-52 85-45 82-44 78-44 72-44 69-44 65-44 64-47 64-67 85-67 85-56 92-56 92-74 54-74 54-84 46-84 46-74zM6-2 6 5 94 5 94-2 54-2 54-22 85-22 85-29 16-29 16-22 46-22 46-2z"/><path id="s244" d="M10-15 10 6 16 6 16 1 64 1 64-16 58-16 58-5 40-5 40-19 83-19 82-11 82-5 80-1 79 1 78 2 76 2 71 2 64 1 66 4 66 8 72 8 76 8 79 8 83 7 85 5 87 3 88 0 89-5 90-12 91-21 91-23 91-24 26-24 26-32 95-32 95-38 26-38 26-44 80-44 80-76 49-76 51-79 53-83 44-84 43-80 41-76 18-76 18-19 34-19 34-5 16-5 16-15zM72-58 72-50 26-50 26-58zM72-63 26-63 26-70 72-70z"/><path id="s245" d="M34-9 35-3 36 2 36 7 43 6 43 2 42-4 41-10zM55-9 57-3 59 2 60 7 68 6 66 1 64-5 62-10zM76-9 79-5 83 0 86 4 88 8 95 5 93 1 90-3 86-8 82-12zM17-12 15-7 12-2 9 2 5 5 12 8 16 5 19 0 22-5 24-10zM20-84 18-79 16-74 13-69 5-69 6-62 43-64 45-62 46-60 52-63 50-67 46-71 42-76 38-80 32-77 36-74 39-70 20-69 23-73 26-78 28-82zM39-52 39-46 18-46 18-52zM12-58 12-15 18-15 18-30 39-30 39-23 39-22 37-22 33-21 27-22 28-19 29-16 35-16 39-16 42-17 45-19 46-23 46-58zM18-41 39-41 39-34 18-34zM56-84 56-60 56-55 58-52 62-51 67-51 72-51 79-51 84-51 89-51 92-53 93-57 94-63 91-64 88-66 87-60 86-57 83-57 79-57 72-57 68-57 64-57 63-60 63-66 68-68 74-69 79-71 84-73 89-74 84-79 80-77 74-76 69-74 63-72 63-84zM56-49 56-25 56-20 58-17 62-16 67-15 72-15 80-15 85-15 89-16 92-18 94-22 95-28 92-29 89-31 88-25 87-22 84-22 79-22 73-22 68-22 64-22 63-25 63-32 68-33 74-35 80-36 85-38 89-40 84-45 80-43 75-41 69-39 63-38 63-49z"/><path id="s246" d="M60-62 53-61 54-55 56-49 57-43 59-38 61-33 63-28 65-23 68-18 64-13 60-9 56-6 52-2 47 0 50 3 52 7 56 4 61 1 65-3 69-7 72-11 76-7 80-3 84 1 88 4 92 7 95 4 98 1 93-2 88-5 84-9 81-13 77-18 79-22 82-26 84-31 86-35 87-40 89-46 90-51 91-57 92-63 93-69 88-70 87-70 51-70 51-63 85-63 84-57 82-51 81-45 79-40 77-35 75-30 72-25 70-30 68-35 66-40 64-45 63-51 61-57zM3-12 4-5 9-6 15-6 20-7 27-8 33-9 39-10 39 8 47 8 47-71 54-71 54-78 5-78 5-71 12-71 12-14zM20-71 39-71 39-57 20-57zM20-51 39-51 39-37 20-37zM20-30 39-30 39-17 20-15z"/><path id="s247" d="M56-28 68-28 68-4 56-4zM56-34 56-56 68-56 68-34zM86-28 86-4 74-4 74-28zM86-34 74-34 74-56 86-56zM67-84 67-63 50-63 50 8 56 8 56 2 86 2 86 7 93 7 93-63 74-63 74-84zM8-59 8-24 22-24 22-16 4-16 4-10 22-10 22 8 29 8 29-10 48-10 48-16 29-16 29-24 44-24 44-59 29-59 29-66 46-66 46-73 29-73 29-84 22-84 22-73 5-73 5-66 22-66 22-59zM14-39 23-39 23-30 14-30zM29-39 39-39 39-30 29-30zM14-54 23-54 23-44 14-44zM29-54 39-54 39-44 29-44z"/><path id="s248" d="M69-68 63-65 66-62 68-58 71-53 73-49 79-52 76-56 74-60 71-64zM82-73 76-70 79-67 81-63 84-59 86-54 92-57 90-61 87-66 84-70zM5-26 13-19 15-22 18-26 22-30 25-35 29-40 33-45 36-49 39-52 42-52 45-50 48-46 52-42 57-38 61-33 65-29 68-25 72-21 76-16 79-12 83-7 87-3 94-10 90-14 86-19 81-24 77-28 73-32 70-36 66-40 61-45 57-49 53-53 49-57 44-61 40-62 36-60 32-56 29-52 25-48 22-44 18-40 15-36 12-33 9-29z"/><path id="s249" d="M18-22 26-22 26-27 27-31 29-35 32-39 35-42 38-46 40-50 41-54 42-58 41-64 40-68 37-71 33-74 29-76 23-76 18-76 13-74 8-71 4-67 10-62 13-66 18-68 22-69 27-68 30-65 33-62 33-58 33-54 31-51 29-47 26-44 23-40 21-36 19-32 18-28zM22 1 27-1 29-6 28-9 25-12 22-13 17-11 16-6 17-1z"/><path id="s250" d="M8-44 8-16 25-16 25-9 5-9 5-4 25-4 25 8 32 8 32-4 52-4 52-9 32-9 32-16 48-16 48-44 32-44 32-49 51-49 51-55 32-55 32-60 25-60 25-55 6-55 6-49 25-49 25-44zM55-56 55-5 55 1 57 5 61 6 67 7 70 7 76 7 82 7 85 7 89 6 93 5 95 2 96-3 97-10 93-12 90-13 89-5 88-1 84 0 79 0 72 0 68 0 63-1 62-5 62-50 84-50 84-27 84-25 82-25 78-25 71-25 73-22 74-18 80-18 84-19 88-19 91-22 91-26 91-56zM15-27 25-27 25-20 15-20zM32-27 42-27 42-20 32-20zM15-39 25-39 25-32 15-32zM32-39 42-39 42-32 32-32zM58-84 55-79 52-75 49-70 49-76 22-76 24-79 25-83 18-84 16-80 13-75 10-71 7-67 4-63 7-61 10-59 13-62 16-66 18-70 23-70 25-65 27-60 34-62 32-66 30-70 48-70 45-67 42-64 45-62 48-60 51-63 55-66 58-70 65-70 68-66 70-63 72-59 79-62 77-66 74-70 95-70 95-76 62-76 63-79 65-83z"/><path id="s251" d="M59-49 59-35 42-35 42-42 42-49zM36-68 36-55 23-55 23-49 36-49 36-42 36-39 36-35 22-35 22-29 35-29 33-24 31-20 27-16 22-12 25-10 27-7 32-11 36-15 38-19 40-24 42-29 59-29 59-8 65-8 65-29 79-29 79-35 65-35 65-49 79-49 79-55 65-55 65-68 59-68 59-55 42-55 42-68zM8-79 8 8 16 8 16 4 84 4 84 8 92 8 92-79zM16-4 16-72 84-72 84-4z"/><path id="s252" d="M24 20 30 17 27 12 24 7 22 2 21-3 19-9 18-14 17-20 17-25 17-31 17-37 17-42 18-48 19-53 21-59 22-64 24-69 27-74 30-79 24-82 21-77 19-73 17-68 15-63 13-58 12-53 11-48 10-42 9-37 9-31 9-25 10-20 11-14 12-9 13-4 15 1 17 6 19 10 21 15z"/><path id="s253" d="M0 0 10 0 17-22 44-22 51 0 60 0 36-73 25-73zM19-30 23-41 24-46 26-51 27-56 29-61 30-66 32-61 33-56 35-51 36-46 38-41 41-30z"/><path id="s254" d="M10 20 13 15 15 10 17 6 19 1 21-4 22-9 23-14 24-20 24-25 25-31 24-37 24-42 23-48 22-53 21-58 19-63 17-68 15-73 13-77 10-82 4-79 7-74 9-69 11-64 13-59 15-53 16-48 16-42 17-37 17-31 17-25 16-20 16-14 15-9 13-3 11 2 9 7 7 12 4 17z"/><path id="s255" d="M14-39 19-41 20-46 19-51 14-53 9-51 7-46 9-41zM14 1 19-1 20-6 19-11 14-13 9-11 7-6 9-1z"/><path id="s256" d="M17-63 20-58 22-53 24-48 25-44 27-40 34-42 33-46 31-51 29-56 27-60 24-65zM76-66 74-61 72-56 69-51 67-46 65-42 71-40 74-44 76-48 79-53 81-58 83-63zM5-35 5-27 46-27 46 8 54 8 54-27 95-27 95-35 54-35 54-70 89-70 89-77 10-77 10-70 46-70 46-35z"/><path id="s257" d="M44-47 44-40 75-40 75-47zM39-15 42-8 47-10 51-11 56-13 62-15 67-17 72-20 77-22 76-28 70-26 64-24 59-22 53-20 48-18 43-16zM51-84 49-78 47-72 44-67 42-61 39-56 36-52 32-48 36-45 39-43 42-47 44-51 47-55 50-60 87-60 86-49 86-39 85-30 85-23 84-17 84-11 83-7 82-4 81-2 80-1 79 1 76 1 73 1 67 1 61 0 63 4 63 8 69 8 75 8 79 8 84 7 87 4 88 2 89-1 90-4 91-9 92-14 92-21 93-29 93-39 94-50 94-63 94-66 94-67 53-67 55-72 57-77 58-82zM3-16 6-9 11-11 16-13 22-15 28-18 33-20 39-22 38-30 25-24 25-54 37-54 37-61 25-61 25-83 18-83 18-61 5-61 5-54 18-54 18-22 13-20 8-18z"/><path id="s258" d="M25-59 25-53 83-53 83-59zM25-84 24-79 22-74 19-69 17-64 14-60 11-56 7-52 4-49 7-47 11-44 14-48 18-52 21-57 24-62 27-67 93-67 93-73 30-73 32-78 33-82zM14-45 14-38 71-38 72-30 72-23 73-16 73-10 75-5 76 0 78 3 81 6 84 8 87 8 91 7 94 4 95-1 96-9 93-11 90-14 90-6 89-1 88 1 86 0 84-2 82-5 81-10 80-15 80-21 79-29 79-36 79-45zM16-28 21-25 26-22 31-19 35-15 31-12 26-8 22-5 17-2 12 1 6 3 9 6 12 9 17 6 22 3 27 0 32-3 37-7 41-11 46-7 51-3 55 1 59 4 65-1 61-5 57-9 52-13 47-17 50-21 53-25 57-29 59-34 52-36 50-32 47-28 44-24 41-21 36-24 31-27 26-30 22-32z"/><path id="s259" d="M44-58 79-58 79-48 44-48zM44-73 79-73 79-64 44-64zM38-80 38-41 86-41 86-80zM10-77 15-75 20-72 24-69 28-67 32-73 29-75 24-78 19-81 14-83zM4-50 9-48 14-45 19-42 22-39 26-45 23-48 18-51 13-53 8-56zM6 2 13 6 15 2 18-2 20-7 23-12 25-17 28-21 30-26 24-31 22-26 19-21 17-16 14-11 11-6 9-2zM26-2 26 5 96 5 96-2 89-2 89-33 34-33 34-2zM41-2 41-26 51-26 51-2zM57-2 57-26 66-26 66-2zM72-2 72-26 82-26 82-2z"/><path id="s260" d="M13-22 19-22 20-64 21-75 12-75 12-64zM16 1 21-1 23-6 21-11 16-13 11-11 10-6 11-1z"/><path id="s261" d="M25 12 32 12 32 1 36 0 41-2 44-5 47-9 48-13 49-18 48-25 46-30 42-34 38-37 33-39 29-41 24-44 21-47 18-50 18-54 18-59 21-62 24-64 29-65 34-64 38-62 42-59 47-64 44-67 41-70 36-71 32-72 32-84 25-84 25-72 19-71 15-68 12-64 9-59 9-54 10-48 12-43 15-40 20-37 24-34 29-32 33-29 37-26 39-23 40-18 39-13 37-9 33-7 27-6 22-7 18-8 14-11 10-14 6-7 10-4 14-2 20 0 25 1z"/><path id="s262" d="M19-38 19-66 32-66 38-65 43-64 46-62 49-58 49-53 49-48 46-44 43-41 38-39 32-38zM50 0 61 0 42-32 47-34 51-36 54-39 57-43 58-47 59-53 58-58 57-62 54-66 51-69 48-71 43-72 38-73 33-73 10-73 10 0 19 0 19-31 32-31z"/><path id="s263" d="M4-46 52-46 52-52 4-52zM4-22 52-22 52-28 4-28z"/><path id="s264" d="M21-79 21-48 21-43 20-38 20-33 19-27 18-22 16-17 14-11 11-6 7-2 3 3 6 5 9 8 13 4 16 0 19-4 21-9 23-14 25-18 26-23 74-23 74-3 74-1 71 0 68 0 64 0 58 0 52 0 54 4 56 8 63 8 69 7 73 7 77 6 80 4 82 1 82-3 82-79zM28-71 74-71 74-55 28-55zM28-48 74-48 74-30 27-30 28-36 28-42z"/><path id="s265" d="M8 19 12 16 17 13 20 9 21 4 22-2 21-8 19-11 14-13 10-11 8-6 10-2 14 0 15 0 15 4 13 8 9 11 5 14z"/><path id="s266" d="M37 1 42 1 47 0 52-3 56-5 60-9 63-13 65-18 67-24 68-30 68-37 68-44 67-50 65-55 63-60 60-65 56-68 52-71 47-73 42-74 37-75 32-74 27-73 22-71 18-68 15-65 12-60 9-55 7-50 6-44 6-37 6-30 7-24 9-18 12-13 15-9 18-5 22-3 27 0 32 1zM37-7 32-7 28-9 24-11 21-15 19-19 17-24 16-30 15-37 16-43 17-49 19-54 21-59 24-62 28-64 32-66 37-66 42-66 46-64 50-62 53-59 55-54 57-49 59-43 59-37 59-30 57-24 55-19 53-15 50-11 46-9 42-7z"/><path id="s267" d="M11-27 12-19 16-20 21-20 25-21 30-22 35-23 42-24 48-25 52-5 53 0 54 4 63 3 61-2 60-6 56-26 81-30 86-31 90-32 88-40 84-39 79-38 55-34 51-54 74-58 78-58 81-59 80-67 76-66 72-65 68-65 63-64 56-63 49-61 47-72 47-76 46-79 37-78 38-74 39-71 41-60 34-59 28-58 23-57 19-57 15-57 11-56 13-47 17-48 21-49 43-53 47-32 40-31 34-30 28-30 23-29 20-28 15-28z"/><path id="s268" d="M86-48 82-51 80-50 78-50 75-49 70-48 64-47 58-46 50-44 43-43 40-55 39-58 38-61 30-59 31-56 32-53 36-42 23-39 19-39 15-38 17-31 37-35 47 2 48 5 49 9 57 7 56 3 55 0 54-3 53-7 52-12 50-17 49-24 47-30 45-36 75-42 73-38 70-34 66-30 62-25 58-22 65-18 68-22 72-26 75-30 78-35 82-39 84-44z"/><path id="s269" d="M89-58 83-62 80-61 77-60 75-60 71-59 66-58 60-57 53-55 46-54 39-52 39-68 39-73 39-77 30-77 30-73 31-68 31-51 24-50 19-49 14-48 9-47 6-47 8-38 31-43 31-13 31-8 32-5 35-2 39 0 45 1 53 2 59 2 64 2 70 1 75 1 79 0 84 0 84-9 79-8 74-7 69-7 64-6 59-6 53-6 46-6 41-8 39-11 39-15 39-45 76-52 75-49 72-45 69-41 66-36 62-32 59-29 66-24 70-29 74-34 77-39 81-44 84-49 86-54 87-56z"/><path id="s270" d="M20-28 20 8 28 8 28 4 72 4 72 8 80 8 80-28zM28-3 28-21 72-21 72-3zM37-85 35-80 31-76 28-72 24-68 19-64 15-60 10-57 6-54 9-52 11-49 15-51 19-54 23-58 27-61 31-57 35-54 39-50 44-47 39-44 34-42 29-40 23-38 18-36 13-34 8-33 3-32 5-29 7-25 12-27 18-28 23-30 29-32 34-34 40-37 45-39 51-42 55-39 60-37 65-34 70-32 76-30 81-29 87-27 92-26 94-29 97-32 92-34 87-35 81-36 76-38 71-40 67-42 62-44 58-46 62-50 67-54 71-57 75-62 79-66 82-70 77-74 76-74 38-74 42-78 45-82zM32-66 33-67 70-67 67-63 63-60 59-57 55-54 50-51 46-53 42-56 39-59 35-63z"/><path id="s271" d="M5-22 5-15 51-15 51 8 59 8 59-15 95-15 95-22 59-22 59-42 88-42 88-49 59-49 59-65 91-65 91-72 31-72 33-77 35-82 28-84 26-79 23-74 21-70 18-65 15-61 12-57 9-53 5-50 8-47 12-45 15-48 18-52 21-56 24-60 27-65 51-65 51-49 21-49 21-22zM29-22 29-42 51-42 51-22z"/><path id="s272" d="M45-81 45-76 44-69 43-61 42-52 39-43 35-33 30-23 23-14 14-6 3 1 7 4 9 7 17 3 23-2 28-8 33-14 37-20 41-26 44-32 46-39 48-45 50-51 51-45 53-38 56-32 59-25 63-19 67-13 72-7 78-2 84 3 92 7 94 4 97 1 87-5 78-13 71-21 65-30 61-39 58-49 56-57 54-65 53-72 53-76 53-81z"/><path id="s273" d="M13-74 13 6 20 6 20-3 80-3 80 5 88 5 88-74zM20-11 20-66 80-66 80-11z"/><path id="s274" d="M43-75 43-47 32-43 35-36 43-40 43-8 43-2 45 2 48 4 52 5 58 6 61 6 67 6 73 6 79 6 82 6 88 5 92 3 94 0 96-5 96-12 93-14 90-15 89-8 88-4 86-2 82-1 78-1 73-1 67-1 61-1 58-1 53-2 51-4 50-8 50-43 64-48 64-14 71-14 71-51 85-57 85-48 84-41 84-35 84-30 84-28 83-25 81-25 78-25 74-25 75-22 76-19 81-19 85-19 89-21 91-26 91-28 91-32 92-37 92-42 92-49 92-56 92-64 92-65 87-67 86-66 84-65 71-59 71-84 64-84 64-56 50-50 50-75zM3-15 6-8 11-10 16-12 21-14 26-17 32-19 37-22 36-29 24-24 24-53 36-53 36-60 24-60 24-83 17-83 17-60 4-60 4-53 17-53 17-21 12-19 7-17z"/><path id="s275" d="M29-10 31-3 36-5 42-6 48-8 54-9 60-11 66-13 65-19 59-18 54-16 48-15 43-14 38-12 33-11zM42-47 55-47 55-30 42-30zM36-53 36-24 61-24 61-53zM4-13 6-6 10-7 15-10 19-12 24-14 29-17 33-19 31-26 22-21 22-52 31-52 31-60 22-60 22-83 15-83 15-60 4-60 4-52 15-52 15-18 11-16 7-14zM86-53 85-47 83-42 81-37 79-32 77-27 76-32 75-38 75-43 74-49 74-56 74-62 95-62 95-69 90-69 94-74 91-77 86-80 82-84 77-80 82-76 86-73 89-69 74-69 73-84 66-84 66-69 33-69 33-62 67-62 67-56 67-50 68-44 68-38 69-33 69-27 70-22 71-18 67-13 64-9 60-5 55-1 50 2 53 5 56 7 61 4 65 0 69-5 73-9 75-3 77 1 80 5 83 7 86 8 90 7 92 6 94 2 95-3 96-10 93-11 91-14 90-5 89-1 87 1 85 0 82-4 80-9 78-17 81-21 83-26 86-30 88-35 90-41 91-46 93-52z"/><path id="s276" d="M33-84 31-81 28-77 24-73 20-69 15-66 10-62 5-59 8-57 10-54 13-56 16-58 16-41 41-41 36-39 30-37 24-35 18-33 13-31 7-30 9-27 11-25 15-26 20-27 25-29 30-31 35-32 38-30 40-28 36-26 30-23 25-21 19-19 13-17 7-16 9-13 11-10 16-12 21-13 26-15 31-17 36-20 40-22 44-24 46-22 48-20 44-17 39-13 34-11 28-8 23-5 17-3 11-1 5 0 8 3 10 6 15 4 20 2 26 0 31-2 37-5 42-8 46-11 51-14 52-8 51-3 49 0 46 1 42 2 38 2 33 1 35 5 35 8 40 8 44 8 49 8 54 5 56 3 58 0 59-4 59-8 59-12 57-17 55-21 52-26 47-31 42-35 47-38 52-40 54-34 57-28 59-22 63-17 67-12 71-8 75-4 80-1 85 2 91 5 93 2 96-1 90-3 85-6 81-9 76-13 72-16 69-21 74-23 78-26 83-29 88-32 93-35 87-40 83-37 79-34 75-31 70-28 66-26 63-30 61-35 59-41 85-41 85-64 58-64 60-67 63-71 65-74 60-78 59-77 37-77 39-80 41-83zM32-71 54-71 52-67 49-64 24-64 28-68zM23-58 46-58 46-47 23-47zM53-58 78-58 78-47 53-47z"/><path id="s277" d="M60-57 84-57 84-46 60-46zM60-40 84-40 84-30 60-30zM60-73 84-73 84-63 60-63zM29-25 29-18 19-18 19-25zM53-80 53-23 60-23 59-18 58-13 56-9 53-5 50-1 50-5 36-5 36-13 48-13 48-18 36-18 36-25 47-25 47-31 36-31 36-38 49-38 49-43 36-43 40-50 33-51 31-47 30-43 19-43 22-48 25-53 50-53 50-59 27-59 29-64 31-69 48-69 48-75 20-75 21-79 22-82 16-84 14-78 11-73 8-68 4-64 8-62 10-60 13-64 16-69 24-69 22-64 20-59 5-59 5-53 17-53 15-49 12-45 9-41 6-37 3-34 5-31 8-28 10-31 12-33 12 6 19 6 19 1 46 1 44 2 42 3 44 5 46 8 52 5 56 2 60-2 62-7 64-12 66-17 67-23 74-23 74-2 75 3 77 6 82 7 85 7 89 7 93 6 95 3 96-2 97-10 94-11 91-13 90-4 90-1 88 0 86 0 83 0 81 0 81-2 81-23 92-23 92-80zM29-31 19-31 19-38 29-38zM29-13 29-5 19-5 19-13z"/><path id="s278" d="M38-54 54-54 54-42 38-42zM38-36 54-36 54-23 38-23zM38-73 54-73 54-61 38-61zM31-80 31-16 60-16 60-80zM49-12 52-8 55-3 58 1 60 4 66 1 64-3 61-7 58-11 55-15zM35-14 33-9 30-4 26 0 22 4 25 6 28 8 31 5 34 1 37-3 40-8 42-12zM85-84 85-1 85 0 83 1 80 1 76 1 70 1 72 4 72 8 80 8 85 7 88 6 91 4 92-1 92-84zM68-74 68-16 75-16 75-74zM8-78 13-75 17-72 21-69 24-67 28-73 25-75 21-78 17-81 12-83zM4-51 8-48 13-46 17-43 20-41 24-47 21-49 17-52 13-54 8-56zM6 3 13 7 15 2 17-3 19-9 22-14 24-20 26-25 20-29 18-23 15-18 13-12 10-7 8-2z"/><path id="s279" d="M69-27 69-14 55-14 55-27zM69-42 69-33 41-33 41-27 48-27 48-14 36-14 36-7 69-7 69 8 76 8 76-7 95-7 95-14 76-14 76-27 92-27 92-33 76-33 76-42zM8-80 8 8 15 8 15-73 28-73 27-69 25-64 23-59 22-54 20-50 24-44 27-39 29-34 29-30 29-26 27-23 25-22 24-22 21-22 18-22 19-19 20-16 23-15 26-16 29-16 32-18 34-20 35-24 36-29 35-33 35-37 33-41 30-46 27-51 29-56 31-61 33-66 35-72 37-77 32-80 31-80zM79-69 77-65 74-62 71-59 67-56 63-60 60-64 56-68 57-69zM59-84 57-80 54-76 50-71 46-67 42-63 36-59 39-57 41-55 45-57 49-60 52-64 55-59 58-55 62-52 57-49 52-46 47-44 42-42 36-41 38-38 40-35 45-36 50-38 54-40 59-42 63-44 68-47 72-44 77-42 82-39 87-38 93-36 95-39 97-42 92-43 87-45 82-47 77-49 73-52 77-55 80-59 84-64 86-68 89-73 84-76 83-75 62-75 64-79 66-83z"/><path id="s280" d="M6-58 6-51 32-51 30-45 28-39 26-34 23-29 20-25 17-21 14-17 10-13 7-10 3-8 6-5 9-2 13-5 17-9 21-13 25-18 29-23 32-29 35-35 37-42 39-49 41-57 36-59 34-58zM86-68 83-64 79-59 75-55 71-51 67-47 62-43 61-47 59-52 57-56 55-61 54-66 54-84 46-84 46-3 46-1 44 0 40 0 35 0 28 0 30 4 31 8 37 8 42 8 46 7 49 6 53 3 54-3 54-46 57-40 59-34 62-28 66-23 69-18 73-14 77-9 82-6 86-2 91 0 94-3 97-6 92-9 88-12 83-15 79-19 76-23 72-27 69-32 66-37 70-40 74-43 78-47 82-51 86-55 90-59 93-63z"/><path id="s281" d="M25-66 75-66 75-61 25-61zM25-76 75-76 75-71 25-71zM18-81 18-56 82-56 82-81zM5-52 5-46 95-46 95-52zM23-27 46-27 46-22 23-22zM54-27 78-27 78-22 54-22zM23-37 46-37 46-32 23-32zM54-37 78-37 78-32 54-32zM5 0 5 6 96 6 96 0 54 0 54-6 87-6 87-11 54-11 54-17 85-17 85-42 16-42 16-17 46-17 46-11 13-11 13-6 46-6 46 0z"/><path id="s282" d="M53-40 49-38 45-36 40-34 35-32 30-30 25-29 27-26 29-24 35-26 40-27 45-30 50-32 55-35 59-37zM63-29 60-26 56-24 51-22 46-20 41-18 35-16 30-15 24-14 27-11 29-8 34-10 40-11 45-13 51-15 56-18 61-20 65-23 69-26zM76-17 73-14 69-11 64-9 58-6 53-4 46-3 40-1 33 0 26 1 19 2 21 5 22 9 30 7 37 6 44 5 51 3 58 1 64-2 69-4 74-7 79-11 83-14zM5-52 5-45 30-45 26-41 22-37 17-34 12-30 7-28 2-25 5-22 7-19 13-22 18-25 22-28 27-32 31-36 35-40 39-45 61-45 65-41 69-36 73-32 78-29 82-25 87-22 92-20 94-23 97-26 92-28 87-31 82-34 78-37 73-41 70-45 95-45 95-52 43-52 46-56 48-61 79-62 83-58 86-55 92-59 89-63 85-66 81-70 76-73 71-77 66-80 61-76 64-74 68-71 72-68 34-67 37-71 40-74 42-78 45-82 37-84 34-80 32-75 29-71 26-67 9-67 10-60 40-61 37-56 35-52z"/><path id="s283" d="M53-41 82-41 82-26 53-26zM46-47 46-19 90-19 90-47zM34-12 35-7 35-2 36 3 36 8 43 6 43 2 43-3 42-8 41-13zM55-13 57-8 59-2 60 3 62 7 69 6 68 1 66-4 64-9 62-14zM76-13 79-9 82-5 84 0 87 4 88 8 96 5 94 1 91-3 89-8 86-12 83-16zM17-15 15-11 13-6 10-2 7 2 4 5 12 8 14 5 17 0 20-4 22-9 25-13zM16-73 31-73 31-55 16-55zM16-29 16-49 31-49 31-29zM9-80 9-17 16-17 16-22 38-22 38-80zM43-80 43-73 60-73 58-69 56-65 54-61 50-58 46-56 40-54 42-51 44-48 50-51 55-53 59-56 62-60 64-64 66-68 67-73 85-73 84-65 83-61 82-58 81-58 79-58 75-58 69-58 70-55 71-52 77-52 82-52 86-52 88-54 90-57 91-61 91-68 92-77 92-79 92-80z"/><path id="s284" d="M20-28 25-29 29-31 33-34 35-39 37-45 37-52 37-58 35-64 33-69 29-72 25-74 20-75 16-74 12-72 8-69 6-64 4-58 4-52 4-45 6-39 8-34 12-31 16-29zM20-34 17-35 15-37 13-40 11-45 11-52 11-58 13-63 15-66 17-68 20-69 24-68 26-66 28-63 30-58 30-52 30-45 28-40 26-37 24-35zM23 1 29 1 69-75 63-75zM72 1 76 1 80-1 84-5 86-9 88-15 88-22 88-29 86-34 84-39 80-42 76-44 72-45 67-44 63-42 60-39 57-34 56-29 55-22 56-15 57-9 60-5 63-1 67 1zM72-4 68-5 66-7 64-11 62-16 62-22 62-28 64-33 66-37 68-39 72-39 75-39 78-37 80-33 81-28 81-22 81-16 80-11 78-7 75-5z"/></defs></svg>
<div class="a" style="left:0px;top:0px;width:1075px;height:35px;background:#217346;"></div>
<div class="a" style="left:0px;top:0px;width:1075px;height:1px;background:#4e5d53;"></div>
<svg class="a" style="left:0;top:0" width="1" height="1"><g fill="#d5e6da" transform="translate(23.02 21.94) scale(0.1237 0.1300)"><use href="#s0" x="0.0"/><use href="#s1" x="100.0"/><use href="#s2" x="200.0"/><use href="#s3" x="300.0"/></g></svg>
<div class="a" style="left:79px;top:9px;width:38px;height:16px;background:#fff;border-radius:8px"></div>
<svg class="a" style="left:0;top:0" width="1" height="1"><g fill="#217346" transform="translate(84.31 21.18) scale(0.0765 0.1100)"><use href="#s4" x="0.0"/><use href="#s5" x="100.0"/></g></svg>
<div class="a" style="left:105px;top:13px;width:8px;height:8px;background:#217346;border-radius:4px"></div>
<svg class="a" style="left:129px;top:7px;" width="22" height="22" viewBox="0 0 22 22"><g fill="none" stroke="#6f9f80" stroke-width="1"><path d="M3.5 3.5h10l3 3v4M3.5 3.5v14h5M6 3.5v4.5h6.5V3.5"/><path d="M10.5 16.5a4 4 0 0 1 7-3.5M18 14.5a4 4 0 0 1-7 3.5M17.5 11v2h-2M11 20v-2h2"/></g></svg>
<svg class="a" style="left:161px;top:7px;" width="22" height="22" viewBox="0 0 22 22"><g fill="none" stroke="#e6efe9" stroke-width="1.3"><path d="M5 4v5h5"/><path d="M5.5 8.5c2.5-3 6-3.5 8.5-2 3 2 3 6 .5 9l-5 5"/></g></svg>
<svg class="a" style="left:181px;top:12px;" width="8" height="8" viewBox="0 0 8 8"><path d="M1.5 3l2.5 2.5 2.5-2.5" fill="none" stroke="#e6efe9" stroke-width="1"/></svg>
<svg class="a" style="left:198px;top:7px;" width="22" height="22" viewBox="0 0 22 22"><g fill="none" stroke="#5e9372" stroke-width="1.3"><path d="M17 4v5h-5"/><path d="M16.5 8.5c-2.5-3-6-3.5-8.5-2-3 2-3 6-.5 9l5 5"/></g></svg>
<svg class="a" style="left:221px;top:12px;" width="8" height="8" viewBox="0 0 8 8"><path d="M1.5 3l2.5 2.5 2.5-2.5" fill="none" stroke="#5e9372" stroke-width="1"/></svg>
<svg class="a" style="left:240px;top:10px;" width="14" height="14" viewBox="0 0 14 14"><g fill="none" stroke="#e6efe9" stroke-width="1.2"><path d="M3 4.5h8M3.5 8l3.5 3 3.5-3"/></g></svg>
<svg class="a" style="left:0;top:0" width="1" height="1"><g fill="#dcebe1" transform="translate(283.60 21.94) scale(0.1329 0.1300)"><use href="#s6" x="0.0"/><use href="#s7" x="46.8"/><use href="#s8" x="103.1"/><use href="#s9" x="195.7"/><use href="#s10" x="257.7"/><use href="#s11" x="286.1"/><use href="#s12" x="341.5"/><use href="#s13" x="397.0"/><use href="#s14" x="424.8"/></g></svg>
<svg class="a" style="left:0;top:0" width="1" height="1"><g fill="#dcebe1" transform="translate(361.44 21.94) scale(0.1129 0.1300)"><use href="#s15" x="0.0"/><use href="#s2" x="79.5"/><use href="#s3" x="179.5"/><use href="#s16" x="279.5"/><use href="#s17" x="379.5"/></g></svg>
<svg class="a" style="left:421px;top:14px;" width="8" height="6" viewBox="0 0 8 6"><path d="M0.5 1h7l-3.5 4z" fill="#e6efe9"/></svg>
<div class="a" style="left:457px;top:7px;width:274px;height:22px;background:#a0cfb1;"></div>
<svg class="a" style="left:474px;top:9px;" width="18" height="18" viewBox="0 0 18 18"><g fill="none" stroke="#236f43" stroke-width="1.2"><circle cx="11" cy="7" r="5"/><path d="M7.5 10.5l-6 6"/></g></svg>
<svg class="a" style="left:0;top:0" width="1" height="1"><g fill="#236f43" transform="translate(505.62 22.94) scale(0.1257 0.1300)"><use href="#s18" x="0.0"/><use href="#s19" x="100.0"/></g></svg>
<svg class="a" style="left:0;top:0" width="1" height="1"><g fill="#d5e6da" transform="translate(752.73 22.94) scale(0.1266 0.1300)"><use href="#s20" x="0.0"/><use href="#s21" x="64.6"/><use href="#s22" x="125.2"/><use href="#s7" x="185.9"/><use href="#s8" x="242.2"/><use href="#s7" x="334.8"/><use href="#s23" x="413.5"/><use href="#s21" x="466.6"/><use href="#s6" x="527.2"/><use href="#s22" x="574.0"/><use href="#s24" x="634.7"/><use href="#s11" x="662.2"/></g></svg>
<div class="a" style="left:854px;top:6px;width:24px;height:24px;background:#fff;border-radius:12px"></div>
<svg class="a" style="left:854px;top:10px;" width="26" height="16" viewBox="0 0 26 16"><path d="M2 9c2-3 6-4 10-4 4 0 7 1 10 2 2 .5 3 1.5 3 2s-1 1.5-3 2c-3 1.5-7 2-10 2-4 0-8-1-10-4z" fill="#ee77ee"/><path d="M2 9.5h9M4 7.5h4M12 6l2-1.5 3 1.5M3 11h5" stroke="#222" stroke-width="0.9" stroke-dasharray="1 0.8"/></svg>
<svg class="a" style="left:904px;top:10px;" width="17" height="15" viewBox="0 0 17 15"><g fill="none" stroke="#e6efe9" stroke-width="1"><rect x="1.5" y="1.5" width="14" height="11"/><path d="M1.5 4.5h14M8.5 11V6.5M6.5 8.5l2-2 2 2"/></g></svg>
<div class="a" style="left:954px;top:17px;width:11px;height:1px;background:#e6efe9;"></div>
<div class="a" style="left:1000px;top:12px;width:11px;height:11px;background:transparent;border:1px solid #e6efe9"></div>
<svg class="a" style="left:1044px;top:11px;" width="13" height="13" viewBox="0 0 13 13"><path d="M1 1l11 11M12 1L1 12" stroke="#e6efe9" stroke-width="1.1"/></svg>
<div class="a" style="left:0px;top:35px;width:1075px;height:127px;background:#f3f2f1;"></div>
<svg class="a" style="left:0;top:0" width="1" height="1"><g fill="#333" transform="translate(12.64 55.82) scale(0.0971 0.1400)"><use href="#s25" x="0.0"/><use href="#s26" x="100.0"/><use href="#s27" x="200.0"/><use href="#s28" x="300.0"/></g></svg>
<svg class="a" style="left:0;top:0" width="1" height="1"><g fill="#333" transform="translate(80.07 55.82) scale(0.1158 0.1400)"><use href="#s29" x="0.0"/><use href="#s30" x="100.0"/><use href="#s31" x="200.0"/></g></svg>
<svg class="a" style="left:0;top:0" width="1" height="1"><g fill="#333" transform="translate(140.61 55.82) scale(0.1289 0.1400)"><use href="#s32" x="0.0"/><use href="#s33" x="100.0"/></g></svg>
<svg class="a" style="left:0;top:0" width="1" height="1"><g fill="#333" transform="translate(194.46 55.82) scale(0.1084 0.1400)"><use href="#s34" x="0.0"/><use href="#s30" x="100.0"/><use href="#s35" x="200.0"/><use href="#s36" x="322.4"/><use href="#s27" x="422.4"/><use href="#s37" x="522.4"/><use href="#s38" x="622.4"/><use href="#s39" x="722.4"/></g></svg>
<svg class="a" style="left:0;top:0" width="1" height="1"><g fill="#333" transform="translate(310.61 55.82) scale(0.1289 0.1400)"><use href="#s40" x="0.0"/><use href="#s41" x="100.0"/></g></svg>
<svg class="a" style="left:0;top:0" width="1" height="1"><g fill="#333" transform="translate(363.11 55.82) scale(0.1111 0.1400)"><use href="#s42" x="0.0"/><use href="#s30" x="100.0"/><use href="#s43" x="200.0"/></g></svg>
<svg class="a" style="left:0;top:0" width="1" height="1"><g fill="#333" transform="translate(423.62 55.82) scale(0.1270 0.1400)"><use href="#s44" x="0.0"/><use href="#s45" x="100.0"/></g></svg>
<svg class="a" style="left:0;top:0" width="1" height="1"><g fill="#333" transform="translate(475.61 55.82) scale(0.1309 0.1400)"><use href="#s46" x="0.0"/><use href="#s47" x="100.0"/></g></svg>
<svg class="a" style="left:0;top:0" width="1" height="1"><g fill="#333" transform="translate(527.32 55.82) scale(0.1130 0.1400)"><use href="#s48" x="0.0"/><use href="#s28" x="100.0"/><use href="#s49" x="200.0"/></g></svg>
<svg class="a" style="left:0;top:0" width="1" height="1"><g fill="#1e6c3e" transform="translate(588.56 54.94) scale(0.1089 0.1300)"><use href="#b50" x="0.0"/><use href="#b51" x="100.0"/><use href="#b52" x="200.0"/><use href="#b53" x="300.0"/><use href="#b54" x="400.0"/><use href="#b55" x="500.0"/><use href="#b56" x="600.0"/><use href="#b57" x="700.0"/></g></svg>
<div class="a" style="left:589px;top:60px;width:86px;height:3px;background:#217346;"></div>
<svg class="a" style="left:0;top:0" width="1" height="1"><g fill="#2a7a4c" transform="translate(700.18 54.94) scale(0.1361 0.1300)"><use href="#s58" x="0.0"/><use href="#s41" x="100.0"/></g></svg>
<div class="a" style="left:920px;top:38px;width:59px;height:24px;background:#f9f9f9;border:1px solid #e1dfdd;border-radius:2px"></div>
<svg class="a" style="left:927px;top:43px;" width="14" height="14" viewBox="0 0 14 14"><g fill="none" stroke="#bdbdbd" stroke-width="1"><path d="M2 5.5v7h9V9.5M4.5 10c.5-4 3.5-6 7-6M9.5 1.5l2.5 2.5-2.5 2.5"/></g></svg>
<svg class="a" style="left:0;top:0" width="1" height="1"><g fill="#b3b3b3" transform="translate(943.48 55.44) scale(0.1309 0.1300)"><use href="#b59" x="0.0"/><use href="#b60" x="100.0"/></g></svg>
<div class="a" style="left:988px;top:38px;width:73px;height:24px;background:#fff;border:1px solid #e1dfdd;border-radius:2px"></div>
<svg class="a" style="left:995px;top:44px;" width="13" height="13" viewBox="0 0 13 13"><path d="M1.5 1.5h10v7h-7l-3 3z" fill="none" stroke="#1e6c3e" stroke-width="1.1"/></svg>
<svg class="a" style="left:0;top:0" width="1" height="1"><g fill="#1e6c3e" transform="translate(1009.42 55.44) scale(0.1126 0.1300)"><use href="#b61" x="0.0"/><use href="#b62" x="100.0"/><use href="#b57" x="200.0"/><use href="#b63" x="300.0"/></g></svg>
<div class="a" style="left:131px;top:69px;width:1px;height:89px;background:#c8c6c4;"></div>
<div class="a" style="left:738px;top:69px;width:1px;height:89px;background:#c8c6c4;"></div>
<div class="a" style="left:843px;top:69px;width:1px;height:89px;background:#c8c6c4;"></div>
<div class="a" style="left:923px;top:69px;width:1px;height:89px;background:#c8c6c4;"></div>
<div class="a" style="left:981px;top:69px;width:1px;height:89px;background:#c8c6c4;"></div>
<svg class="a" style="left:20px;top:70px;" width="36" height="36" viewBox="0 0 36 36"><g stroke="#9d9d9d" stroke-width="1"><rect x="3.5" y="14.5" width="8" height="16" fill="#d6d6d6"/><rect x="11.5" y="3.5" width="8" height="27" fill="#ececec"/><rect x="19.5" y="8.5" width="8" height="22" fill="#dcdcdc"/></g><path d="M24 18v15M17 25h15" stroke="#9d9d9d" stroke-width="1.4"/></svg>
<svg class="a" style="left:0;top:0" width="1" height="1"><g fill="#a6a6a6" transform="translate(10.40 118.94) scale(0.1002 0.1300)"><use href="#s64" x="0.0"/><use href="#s65" x="100.0"/><use href="#s25" x="200.0"/><use href="#s66" x="300.0"/><use href="#s67" x="400.0"/></g></svg>
<svg class="a" style="left:0;top:0" width="1" height="1"><g fill="#a6a6a6" transform="translate(11.86 133.94) scale(0.1139 0.1300)"><use href="#s68" x="0.0"/><use href="#s69" x="100.0"/><use href="#s70" x="200.0"/></g></svg>
<svg class="a" style="left:51px;top:126px;" width="7" height="5" viewBox="0 0 7 5"><path d="M0.5 0.5l3 3 3-3" fill="none" stroke="#9a9a9a" stroke-width="1"/></svg>
<svg class="a" style="left:76px;top:70px;" width="34" height="34" viewBox="0 0 34 34"><g fill="none" stroke="#a3a3a3" stroke-width="1"><path d="M3.5 4v27h28M3.5 10.5h28M3.5 14.5h28M3.5 18.5h28M3.5 22.5h28M3.5 26.5h28"/></g><rect x="8.5" y="3.5" width="17" height="3" fill="#d0d0d0" stroke="#a3a3a3"/><g stroke="#a3a3a3"><rect x="9.5" y="17.5" width="5" height="13" fill="#eee"/><rect x="14.5" y="12.5" width="5" height="18" fill="#d6d6d6"/><rect x="19.5" y="22.5" width="5" height="8" fill="#eee"/></g></svg>
<svg class="a" style="left:0;top:0" width="1" height="1"><g fill="#a6a6a6" transform="translate(76.15 118.94) scale(0.0849 0.1300)"><use href="#s71" x="0.0"/><use href="#s27" x="100.0"/><use href="#s72" x="200.0"/><use href="#s71" x="300.0"/></g></svg>
<svg class="a" style="left:0;top:0" width="1" height="1"><g fill="#a6a6a6" transform="translate(63.43 133.94) scale(0.0940 0.1300)"><use href="#s36" x="0.0"/><use href="#s27" x="100.0"/><use href="#s37" x="200.0"/><use href="#s38" x="300.0"/><use href="#s39" x="400.0"/></g></svg>
<svg class="a" style="left:113px;top:126px;" width="7" height="5" viewBox="0 0 7 5"><path d="M0.5 0.5l3 3 3-3" fill="none" stroke="#9a9a9a" stroke-width="1"/></svg>
<svg class="a" style="left:145px;top:71px;" width="32" height="32" viewBox="0 0 32 32"><path d="M16 2.5c8 0 13.5 5 13.5 12.5 0 7-4 13-10 13-3 0-4-2-4-4.5 0-3-2-4.5-4.5-4.5-2 0-4 1.5-6.5 1.5S2.5 19 2.5 15.5C2.5 8 9 2.5 16 2.5z" fill="#e8e8e8" stroke="#9d9d9d" stroke-width="1.2"/><g fill="#a8a8a8"><circle cx="8" cy="11" r="1.8"/><circle cx="14" cy="7" r="1.8"/><circle cx="21" cy="9" r="1.8"/><circle cx="24" cy="15" r="1.8"/><circle cx="19" cy="21" r="1.8"/></g></svg>
<svg class="a" style="left:0;top:0" width="1" height="1"><g fill="#a6a6a6" transform="translate(149.53 118.94) scale(0.1176 0.1300)"><use href="#s73" x="0.0"/><use href="#s74" x="100.0"/></g></svg>
<svg class="a" style="left:0;top:0" width="1" height="1"><g fill="#a6a6a6" transform="translate(142.50 133.94) scale(0.1244 0.1300)"><use href="#s75" x="0.0"/><use href="#s76" x="100.0"/></g></svg>
<svg class="a" style="left:171px;top:126px;" width="7" height="5" viewBox="0 0 7 5"><path d="M0.5 0.5l3 3 3-3" fill="none" stroke="#9a9a9a" stroke-width="1"/></svg>
<svg class="a" style="left:0;top:0" width="1" height="1"><g fill="#444" transform="translate(25.46 158.15) scale(0.0899 0.1209)"><use href="#s64" x="0.0"/><use href="#s65" x="100.0"/><use href="#s25" x="200.0"/><use href="#s74" x="300.0"/><use href="#s36" x="400.0"/><use href="#s27" x="500.0"/><use href="#s37" x="600.0"/><use href="#s38" x="700.0"/><use href="#s39" x="800.0"/></g></svg>
<svg class="a" style="left:0;top:0" width="1" height="1"><g fill="#444" transform="translate(401.46 157.99) scale(0.0908 0.1154)"><use href="#s64" x="0.0"/><use href="#s65" x="100.0"/><use href="#s25" x="200.0"/><use href="#s77" x="322.4"/><use href="#s43" x="422.4"/><use href="#s27" x="522.4"/><use href="#s28" x="622.4"/></g></svg>
<svg class="a" style="left:0;top:0" width="1" height="1"><g fill="#444" transform="translate(776.19 158.34) scale(0.1014 0.1264)"><use href="#s42" x="0.0"/><use href="#s30" x="100.0"/><use href="#s43" x="200.0"/></g></svg>
<svg class="a" style="left:0;top:0" width="1" height="1"><g fill="#444" transform="translate(870.13 158.09) scale(0.1241 0.1264)"><use href="#s78" x="0.0"/><use href="#s79" x="100.0"/></g></svg>
<svg class="a" style="left:0;top:0" width="1" height="1"><g fill="#444" transform="translate(939.84 158.09) scale(0.1201 0.1264)"><use href="#s80" x="0.0"/><use href="#s81" x="100.0"/></g></svg>
<svg class="a" style="left:1054px;top:150px;" width="12" height="8" viewBox="0 0 12 8"><path d="M1.5 6.5l4.5-4.5 4.5 4.5" fill="none" stroke="#555" stroke-width="1.1"/></svg>
<div class="a" style="left:183px;top:71px;width:545px;height:60px;background:#fff;border:1px solid #d2d0ce"></div>
<div class="a" style="left:188px;top:77px;width:80px;height:48px;background:#f3eef4;border:1px solid #e4dce6"></div>
<svg class="a" style="left:188px;top:77px;" width="80" height="48" viewBox="0 0 80 48"><path d="M8 8.5H77" stroke="#e2dbe4" stroke-width="1"/><path d="M8 12.5H77" stroke="#e2dbe4" stroke-width="1"/><path d="M8 15.5H77" stroke="#e2dbe4" stroke-width="1"/><path d="M8 19.5H77" stroke="#e2dbe4" stroke-width="1"/><path d="M8 22.5H77" stroke="#e2dbe4" stroke-width="1"/><path d="M8 26.5H77" stroke="#e2dbe4" stroke-width="1"/><path d="M8 29.5H77" stroke="#e2dbe4" stroke-width="1"/><path d="M8 33.5H77" stroke="#e2dbe4" stroke-width="1"/><path d="M2 8.5h4" stroke="#c9c1cb" stroke-width="1"/><path d="M2 12.5h4" stroke="#c9c1cb" stroke-width="1"/><path d="M2 15.5h4" stroke="#c9c1cb" stroke-width="1"/><path d="M2 19.5h4" stroke="#c9c1cb" stroke-width="1"/><path d="M2 22.5h4" stroke="#c9c1cb" stroke-width="1"/><path d="M2 26.5h4" stroke="#c9c1cb" stroke-width="1"/><path d="M2 29.5h4" stroke="#c9c1cb" stroke-width="1"/><path d="M2 33.5h4" stroke="#c9c1cb" stroke-width="1"/><path d="M28 4.5h14" stroke="#c9c1cb" stroke-width="1.5"/><path d="M10.5,31 L16.4,31 L26.1,24 L38.6,18.5 L45.7,14 L51.5,14 L75.3,28" fill="none" stroke="#b8b8b8" stroke-width="2" transform="translate(0,3)"/><path d="M10.5,31 L16.4,31 L26.1,24 L38.6,18.5 L45.7,14 L51.5,14 L75.3,28" fill="none" stroke="#9c9c9c" stroke-width="3" transform="translate(0,1)"/><path d="M9 36.5h67" stroke="#c9c1cb" stroke-width="0.8" stroke-dasharray="1 5"/><path d="M14 41.5h8M25 41.5h9M36 41.5h9M48 41.5h9M59 41.5h10M14 45h8M26 45h8M37 45h15" stroke="#c9c1cb" stroke-width="1.2"/></svg>
<div class="a" style="left:276px;top:77px;width:80px;height:48px;background:radial-gradient(ellipse at 50% 45%,#ececec,#d2d2d2);border:1px solid #d8d8d8"></div>
<svg class="a" style="left:276px;top:77px;" width="80" height="48" viewBox="0 0 80 48"><path d="M8 8.5H77" stroke="#cfcfcf" stroke-width="1"/><path d="M8 12.5H77" stroke="#cfcfcf" stroke-width="1"/><path d="M8 15.5H77" stroke="#cfcfcf" stroke-width="1"/><path d="M8 19.5H77" stroke="#cfcfcf" stroke-width="1"/><path d="M8 22.5H77" stroke="#cfcfcf" stroke-width="1"/><path d="M8 26.5H77" stroke="#cfcfcf" stroke-width="1"/><path d="M8 29.5H77" stroke="#cfcfcf" stroke-width="1"/><path d="M8 33.5H77" stroke="#cfcfcf" stroke-width="1"/><path d="M2 8.5h4" stroke="#9a9a9a" stroke-width="1"/><path d="M2 12.5h4" stroke="#9a9a9a" stroke-width="1"/><path d="M2 15.5h4" stroke="#9a9a9a" stroke-width="1"/><path d="M2 19.5h4" stroke="#9a9a9a" stroke-width="1"/><path d="M2 22.5h4" stroke="#9a9a9a" stroke-width="1"/><path d="M2 26.5h4" stroke="#9a9a9a" stroke-width="1"/><path d="M2 29.5h4" stroke="#9a9a9a" stroke-width="1"/><path d="M2 33.5h4" stroke="#9a9a9a" stroke-width="1"/><path d="M28 4.5h14" stroke="#9a9a9a" stroke-width="1.5"/><path d="M10.5,31 L16.4,31 L26.1,24 L38.6,18.5 L45.7,14 L51.5,14 L75.3,28" fill="none" stroke="#f4f4f4" stroke-width="2" transform="translate(0,3)"/><path d="M10.5,31 L16.4,31 L26.1,24 L38.6,18.5 L45.7,14 L51.5,14 L75.3,28" fill="none" stroke="#a8a8a8" stroke-width="3" transform="translate(0,1)"/><rect x="6" y="29" width="5" height="5" fill="#f6f6f6" stroke="#b0b0b0" stroke-width="0.6"/><rect x="12" y="29" width="5" height="5" fill="#f6f6f6" stroke="#b0b0b0" stroke-width="0.6"/><rect x="18" y="26" width="5" height="5" fill="#f6f6f6" stroke="#b0b0b0" stroke-width="0.6"/><rect x="24" y="22" width="5" height="5" fill="#f6f6f6" stroke="#b0b0b0" stroke-width="0.6"/><rect x="30" y="19" width="5" height="5" fill="#f6f6f6" stroke="#b0b0b0" stroke-width="0.6"/><rect x="36" y="16.5" width="5" height="5" fill="#f6f6f6" stroke="#b0b0b0" stroke-width="0.6"/><rect x="42" y="12" width="5" height="5" fill="#f6f6f6" stroke="#b0b0b0" stroke-width="0.6"/><rect x="49" y="12" width="5" height="5" fill="#f6f6f6" stroke="#b0b0b0" stroke-width="0.6"/><rect x="56" y="16" width="5" height="5" fill="#f6f6f6" stroke="#b0b0b0" stroke-width="0.6"/><rect x="62" y="19" width="5" height="5" fill="#f6f6f6" stroke="#b0b0b0" stroke-width="0.6"/><rect x="68" y="22" width="5" height="5" fill="#f6f6f6" stroke="#b0b0b0" stroke-width="0.6"/><rect x="73" y="25" width="5" height="5" fill="#f6f6f6" stroke="#b0b0b0" stroke-width="0.6"/><path d="M9 36.5h67" stroke="#9a9a9a" stroke-width="0.8" stroke-dasharray="1 5"/><path d="M14 41.5h8M25 41.5h9M36 41.5h9M48 41.5h9M59 41.5h10M14 45h8M26 45h8M37 45h15" stroke="#9a9a9a" stroke-width="1.2"/></svg>
<div class="a" style="left:364px;top:77px;width:80px;height:48px;background:#f3eef4;border:1px solid #e4dce6"></div>
<svg class="a" style="left:364px;top:77px;" width="80" height="48" viewBox="0 0 80 48"><path d="M8 8.5H77" stroke="#e2dbe4" stroke-width="1"/><path d="M8 12.5H77" stroke="#e2dbe4" stroke-width="1"/><path d="M8 15.5H77" stroke="#e2dbe4" stroke-width="1"/><path d="M8 19.5H77" stroke="#e2dbe4" stroke-width="1"/><path d="M8 22.5H77" stroke="#e2dbe4" stroke-width="1"/><path d="M8 26.5H77" stroke="#e2dbe4" stroke-width="1"/><path d="M8 29.5H77" stroke="#e2dbe4" stroke-width="1"/><path d="M8 33.5H77" stroke="#e2dbe4" stroke-width="1"/><path d="M2 8.5h4" stroke="#c9c1cb" stroke-width="1"/><path d="M2 12.5h4" stroke="#c9c1cb" stroke-width="1"/><path d="M2 15.5h4" stroke="#c9c1cb" stroke-width="1"/><path d="M2 19.5h4" stroke="#c9c1cb" stroke-width="1"/><path d="M2 22.5h4" stroke="#c9c1cb" stroke-width="1"/><path d="M2 26.5h4" stroke="#c9c1cb" stroke-width="1"/><path d="M2 29.5h4" stroke="#c9c1cb" stroke-width="1"/><path d="M2 33.5h4" stroke="#c9c1cb" stroke-width="1"/><path d="M28 4.5h14" stroke="#c9c1cb" stroke-width="1.5"/><path d="M10.5,31 L16.4,31 L26.1,24 L38.6,18.5 L45.7,14 L51.5,14 L75.3,28" fill="none" stroke="#b8b8b8" stroke-width="2" transform="translate(0,3)"/><path d="M10.5,31 L16.4,31 L26.1,24 L38.6,18.5 L45.7,14 L51.5,14 L75.3,28" fill="none" stroke="#9c9c9c" stroke-width="3" transform="translate(0,1)"/><path d="M9 36.5h67" stroke="#c9c1cb" stroke-width="0.8" stroke-dasharray="1 5"/><path d="M14 41.5h8M25 41.5h9M36 41.5h9M48 41.5h9M59 41.5h10M14 45h8M26 45h8M37 45h15" stroke="#c9c1cb" stroke-width="1.2"/></svg>
<div class="a" style="left:452px;top:77px;width:80px;height:48px;background:#f3eef4;border:1px solid #e4dce6"></div>
<svg class="a" style="left:452px;top:77px;" width="80" height="48" viewBox="0 0 80 48"><path d="M8 8.5H77" stroke="#e2dbe4" stroke-width="1"/><path d="M8 12.5H77" stroke="#e2dbe4" stroke-width="1"/><path d="M8 15.5H77" stroke="#e2dbe4" stroke-width="1"/><path d="M8 19.5H77" stroke="#e2dbe4" stroke-width="1"/><path d="M8 22.5H77" stroke="#e2dbe4" stroke-width="1"/><path d="M8 26.5H77" stroke="#e2dbe4" stroke-width="1"/><path d="M8 29.5H77" stroke="#e2dbe4" stroke-width="1"/><path d="M8 33.5H77" stroke="#e2dbe4" stroke-width="1"/><path d="M2 8.5h4" stroke="#c9c1cb" stroke-width="1"/><path d="M2 12.5h4" stroke="#c9c1cb" stroke-width="1"/><path d="M2 15.5h4" stroke="#c9c1cb" stroke-width="1"/><path d="M2 19.5h4" stroke="#c9c1cb" stroke-width="1"/><path d="M2 22.5h4" stroke="#c9c1cb" stroke-width="1"/><path d="M2 26.5h4" stroke="#c9c1cb" stroke-width="1"/><path d="M2 29.5h4" stroke="#c9c1cb" stroke-width="1"/><path d="M2 33.5h4" stroke="#c9c1cb" stroke-width="1"/><path d="M28 4.5h14" stroke="#c9c1cb" stroke-width="1.5"/><path d="M10.5,31 L16.4,31 L26.1,24 L38.6,18.5 L45.7,14 L51.5,14 L75.3,28" fill="none" stroke="#b8b8b8" stroke-width="2" transform="translate(0,3)"/><path d="M10.5,31 L16.4,31 L26.1,24 L38.6,18.5 L45.7,14 L51.5,14 L75.3,28" fill="none" stroke="#9c9c9c" stroke-width="3" transform="translate(0,1)"/><path d="M9 36.5h67" stroke="#c9c1cb" stroke-width="0.8" stroke-dasharray="1 5"/><path d="M14 41.5h8M25 41.5h9M36 41.5h9M48 41.5h9M59 41.5h10M14 45h8M26 45h8M37 45h15" stroke="#c9c1cb" stroke-width="1.2"/></svg>
<div class="a" style="left:540px;top:77px;width:80px;height:48px;background:#f3eef4;border:1px solid #e4dce6"></div>
<svg class="a" style="left:540px;top:77px;" width="80" height="48" viewBox="0 0 80 48"><path d="M8 8.5H77" stroke="#e2dbe4" stroke-width="1"/><path d="M8 12.5H77" stroke="#e2dbe4" stroke-width="1"/><path d="M8 15.5H77" stroke="#e2dbe4" stroke-width="1"/><path d="M8 19.5H77" stroke="#e2dbe4" stroke-width="1"/><path d="M8 22.5H77" stroke="#e2dbe4" stroke-width="1"/><path d="M8 26.5H77" stroke="#e2dbe4" stroke-width="1"/><path d="M8 29.5H77" stroke="#e2dbe4" stroke-width="1"/><path d="M8 33.5H77" stroke="#e2dbe4" stroke-width="1"/><path d="M2 8.5h4" stroke="#c9c1cb" stroke-width="1"/><path d="M2 12.5h4" stroke="#c9c1cb" stroke-width="1"/><path d="M2 15.5h4" stroke="#c9c1cb" stroke-width="1"/><path d="M2 19.5h4" stroke="#c9c1cb" stroke-width="1"/><path d="M2 22.5h4" stroke="#c9c1cb" stroke-width="1"/><path d="M2 26.5h4" stroke="#c9c1cb" stroke-width="1"/><path d="M2 29.5h4" stroke="#c9c1cb" stroke-width="1"/><path d="M2 33.5h4" stroke="#c9c1cb" stroke-width="1"/><path d="M28 4.5h14" stroke="#c9c1cb" stroke-width="1.5"/><path d="M10.5,31 L16.4,31 L26.1,24 L38.6,18.5 L45.7,14 L51.5,14 L75.3,28" fill="none" stroke="#b8b8b8" stroke-width="2" transform="translate(0,3)"/><path d="M10.5,31 L16.4,31 L26.1,24 L38.6,18.5 L45.7,14 L51.5,14 L75.3,28" fill="none" stroke="#9c9c9c" stroke-width="3" transform="translate(0,1)"/><path d="M9 36.5h67" stroke="#c9c1cb" stroke-width="0.8" stroke-dasharray="1 5"/><path d="M14 41.5h8M25 41.5h9M36 41.5h9M48 41.5h9M59 41.5h10M14 45h8M26 45h8M37 45h15" stroke="#c9c1cb" stroke-width="1.2"/></svg>
<div class="a" style="left:628px;top:77px;width:80px;height:48px;background:#8c8c8c;border:1px solid #8c8c8c"></div>
<svg class="a" style="left:628px;top:77px;" width="80" height="48" viewBox="0 0 80 48"><path d="M8 8.5H77" stroke="#9c9c9c" stroke-width="1"/><path d="M8 12.5H77" stroke="#9c9c9c" stroke-width="1"/><path d="M8 15.5H77" stroke="#9c9c9c" stroke-width="1"/><path d="M8 19.5H77" stroke="#9c9c9c" stroke-width="1"/><path d="M8 22.5H77" stroke="#9c9c9c" stroke-width="1"/><path d="M8 26.5H77" stroke="#9c9c9c" stroke-width="1"/><path d="M8 29.5H77" stroke="#9c9c9c" stroke-width="1"/><path d="M8 33.5H77" stroke="#9c9c9c" stroke-width="1"/><path d="M2 8.5h4" stroke="#c8c8c8" stroke-width="1"/><path d="M2 12.5h4" stroke="#c8c8c8" stroke-width="1"/><path d="M2 15.5h4" stroke="#c8c8c8" stroke-width="1"/><path d="M2 19.5h4" stroke="#c8c8c8" stroke-width="1"/><path d="M2 22.5h4" stroke="#c8c8c8" stroke-width="1"/><path d="M2 26.5h4" stroke="#c8c8c8" stroke-width="1"/><path d="M2 29.5h4" stroke="#c8c8c8" stroke-width="1"/><path d="M2 33.5h4" stroke="#c8c8c8" stroke-width="1"/><path d="M28 4.5h14" stroke="#c8c8c8" stroke-width="1.5"/><path d="M10.5,31 L16.4,31 L26.1,24 L38.6,18.5 L45.7,14 L51.5,14 L75.3,28" fill="none" stroke="#c4c4c4" stroke-width="2" transform="translate(0,3)"/><path d="M10.5,31 L16.4,31 L26.1,24 L38.6,18.5 L45.7,14 L51.5,14 L75.3,28" fill="none" stroke="#b4b4b4" stroke-width="3" transform="translate(0,1)"/><path d="M9 36.5h67" stroke="#c8c8c8" stroke-width="0.8" stroke-dasharray="1 5"/><path d="M14 41.5h8M25 41.5h9M36 41.5h9M48 41.5h9M59 41.5h10M14 45h8M26 45h8M37 45h15" stroke="#c8c8c8" stroke-width="1.2"/></svg>
<div class="a" style="left:713px;top:71px;width:15px;height:60px;background:#f3f2f1;border:1px solid #d2d0ce"></div>
<div class="a" style="left:713px;top:91px;width:15px;height:1px;background:#d2d0ce;"></div>
<div class="a" style="left:713px;top:111px;width:15px;height:1px;background:#d2d0ce;"></div>
<svg class="a" style="left:714px;top:76px;" width="13" height="10" viewBox="0 0 13 10"><path d="M3 7l3.5-3.5 3.5 3.5" fill="none" stroke="#777" stroke-width="1"/></svg>
<svg class="a" style="left:714px;top:96px;" width="13" height="10" viewBox="0 0 13 10"><path d="M3 3l3.5 3.5 3.5-3.5" fill="none" stroke="#777" stroke-width="1"/></svg>
<svg class="a" style="left:714px;top:115px;" width="13" height="12" viewBox="0 0 13 12"><path d="M3 2.5h7M3 6l3.5 3.5 3.5-3.5" fill="none" stroke="#777" stroke-width="1"/></svg>
<svg class="a" style="left:740px;top:66px;" width="50" height="40" viewBox="0 0 50 40"><g stroke="#999" stroke-width="1"><path d="M25.5 10.5h18v21h-27v-14h9z" fill="#f5f5f5"/><rect x="25.5" y="10.5" width="18" height="7" fill="#d4d4d4"/><rect x="16.5" y="17.5" width="9" height="14" fill="#d4d4d4"/><path d="M25.5 10.5v21M34.5 10.5v21M16.5 24.5h27M25.5 17.5h18" fill="none"/></g><g fill="none" stroke="#999" stroke-width="1.1"><path d="M15 20.5L25 10.5h3.5M14.5 15v6h5.5M25.5 6.5l3.5 4-3.5 4"/></g></svg>
<svg class="a" style="left:0;top:0" width="1" height="1"><g fill="#a6a6a6" transform="translate(749.77 118.94) scale(0.1158 0.1300)"><use href="#s82" x="0.0"/><use href="#s83" x="100.0"/><use href="#s84" x="139.2"/><use href="#s74" x="239.2"/></g></svg>
<svg class="a" style="left:0;top:0" width="1" height="1"><g fill="#a6a6a6" transform="translate(748.68 132.94) scale(0.1057 0.1300)"><use href="#s85" x="0.0"/><use href="#s86" x="100.0"/><use href="#s87" x="200.0"/><use href="#s88" x="300.0"/></g></svg>
<svg class="a" style="left:798px;top:72px;" width="34" height="32" viewBox="0 0 34 32"><g stroke="#999" stroke-width="1"><rect x="2.5" y="4.5" width="27" height="21" fill="#f5f5f5"/><rect x="2.5" y="4.5" width="18" height="14" fill="#d4d4d4"/><path d="M11.5 4.5v21M20.5 4.5v21M2.5 11.5h27M2.5 18.5h27" fill="none"/><rect x="17.5" y="19.5" width="5" height="11" fill="#d8d8d8"/><rect x="22.5" y="15.5" width="5" height="15" fill="#f2f2f2"/><rect x="27.5" y="19.5" width="4.5" height="11" fill="#d8d8d8"/></g></svg>
<svg class="a" style="left:0;top:0" width="1" height="1"><g fill="#a6a6a6" transform="translate(794.21 118.94) scale(0.0992 0.1300)"><use href="#s42" x="0.0"/><use href="#s30" x="100.0"/><use href="#s43" x="200.0"/><use href="#s74" x="300.0"/></g></svg>
<svg class="a" style="left:0;top:0" width="1" height="1"><g fill="#a6a6a6" transform="translate(801.63 132.94) scale(0.1231 0.1300)"><use href="#s89" x="0.0"/><use href="#s90" x="100.0"/></g></svg>
<svg class="a" style="left:868px;top:71px;" width="30" height="32" viewBox="0 0 30 32"><g stroke="#9d9d9d" stroke-width="1"><rect x="3.5" y="13.5" width="8" height="17" fill="#d6d6d6"/><rect x="11.5" y="2.5" width="8" height="28" fill="#ececec"/><rect x="19.5" y="7.5" width="8" height="23" fill="#d6d6d6"/></g></svg>
<svg class="a" style="left:0;top:0" width="1" height="1"><g fill="#a6a6a6" transform="translate(853.40 118.94) scale(0.0997 0.1300)"><use href="#s64" x="0.0"/><use href="#s65" x="100.0"/><use href="#s25" x="200.0"/><use href="#s74" x="300.0"/><use href="#s78" x="400.0"/><use href="#s79" x="500.0"/></g></svg>
<svg class="a" style="left:0;top:0" width="1" height="1"><g fill="#a6a6a6" transform="translate(864.94 132.94) scale(0.1181 0.1300)"><use href="#s74" x="0.0"/><use href="#s75" x="100.0"/><use href="#s76" x="200.0"/></g></svg>
<svg class="a" style="left:937px;top:72px;" width="34" height="32" viewBox="0 0 34 32"><g stroke="#9d9d9d" stroke-width="1"><path d="M2.5 2.5h28v23h-28z" fill="#f5f5f5"/><path d="M11.5 2.5v22M20.5 2.5v22M2.5 9.5h28M2.5 17.5h28" fill="none"/><path d="M2.5 25.5h10l-3 3h-7z" fill="#f5f5f5"/><rect x="16.5" y="19.5" width="5" height="11" fill="#d8d8d8"/><rect x="21.5" y="14.5" width="5" height="16" fill="#f2f2f2"/><rect x="26.5" y="18.5" width="5" height="12" fill="#d8d8d8"/></g></svg>
<svg class="a" style="left:0;top:0" width="1" height="1"><g fill="#a6a6a6" transform="translate(934.47 118.94) scale(0.0883 0.1300)"><use href="#s64" x="0.0"/><use href="#s65" x="100.0"/><use href="#s25" x="200.0"/><use href="#s74" x="300.0"/></g></svg>
<svg class="a" style="left:0;top:0" width="1" height="1"><g fill="#a6a6a6" transform="translate(940.64 132.94) scale(0.1204 0.1300)"><use href="#s91" x="0.0"/><use href="#s1" x="100.0"/></g></svg>
<div class="a" style="left:0px;top:162px;width:1075px;height:52px;background:#e6e6e6;"></div>
<div class="a" style="left:0px;top:162px;width:1075px;height:1px;background:#d6d6d6;"></div>
<div class="a" style="left:6px;top:173px;width:102px;height:31px;background:#fff;border:1px solid #c8c8c8"></div>
<svg class="a" style="left:0;top:0" width="1" height="1"><g fill="#3b3b3b" transform="translate(12.05 195.82) scale(0.1580 0.1400)"><use href="#s92" x="0.0"/><use href="#s93" x="68.9"/></g></svg>
<svg class="a" style="left:93px;top:186px;" width="9" height="5" viewBox="0 0 9 5"><path d="M0.5 0.5h8l-4 4z" fill="#777"/></svg>
<div class="a" style="left:122px;top:184px;width:1.5px;height:1.5px;background:#a8a8a8;"></div>
<div class="a" style="left:122px;top:188px;width:1.5px;height:1.5px;background:#a8a8a8;"></div>
<div class="a" style="left:122px;top:192px;width:1.5px;height:1.5px;background:#a8a8a8;"></div>
<div class="a" style="left:138px;top:173px;width:110px;height:31px;background:#fff;border:1px solid #c8c8c8"></div>
<svg class="a" style="left:152px;top:183px;" width="11" height="11" viewBox="0 0 11 11"><path d="M1 1l9 9M10 1L1 10" stroke="#b8b8b8" stroke-width="1.4"/></svg>
<svg class="a" style="left:186px;top:182px;" width="14" height="12" viewBox="0 0 14 12"><path d="M1.5 6.5l4 4 7-9" fill="none" stroke="#b8b8b8" stroke-width="1.8"/></svg>
<svg class="a" style="left:0;top:0" width="1" height="1"><g fill="#555" transform="translate(225.00 193.32) scale(0.1429 0.1400)"><use href="#I94" x="0.0"/></g></svg>
<svg class="a" style="left:0;top:0" width="1" height="1"><g fill="#555" transform="translate(230.10 193.80) scale(0.1020 0.1000)"><use href="#I95" x="0.0"/></g></svg>
<div class="a" style="left:251px;top:173px;width:818px;height:31px;background:#fff;border:1px solid #c8c8c8"></div>
<svg class="a" style="left:0;top:0" width="1" height="1"><g fill="#3b3b3b" transform="translate(263.25 192.82) scale(0.1386 0.1400)"><use href="#s12" x="0.0"/><use href="#s13" x="55.5"/><use href="#s96" x="83.3"/></g></svg>
<svg class="a" style="left:1056px;top:185px;" width="10" height="7" viewBox="0 0 10 7"><path d="M1.5 1.5l3.5 3.5 3.5-3.5" fill="none" stroke="#b0b0b0" stroke-width="1.6"/></svg>
<div class="a" style="left:0px;top:214px;width:1052px;height:19px;background:#e6e6e6;"></div>
<div class="a" style="left:30px;top:214px;width:67px;height:17px;background:#d2d2d2;"></div>
<div class="a" style="left:96px;top:214px;width:1px;height:18px;background:#c6c6c6;"></div>
<svg class="a" style="left:0;top:0" width="1" height="1"><g fill="#217346" transform="translate(57.56 228.70) scale(0.2175 0.1500)"><use href="#r97" x="0.0"/></g></svg>
<div class="a" style="left:156px;top:214px;width:1px;height:18px;background:#c6c6c6;"></div>
<svg class="a" style="left:0;top:0" width="1" height="1"><g fill="#111" transform="translate(121.17 228.70) scale(0.2175 0.1500)"><use href="#r98" x="0.0"/></g></svg>
<div class="a" style="left:216px;top:214px;width:1px;height:18px;background:#c6c6c6;"></div>
<svg class="a" style="left:0;top:0" width="1" height="1"><g fill="#111" transform="translate(181.17 228.70) scale(0.2175 0.1500)"><use href="#r99" x="0.0"/></g></svg>
<div class="a" style="left:276px;top:214px;width:1px;height:18px;background:#c6c6c6;"></div>
<svg class="a" style="left:0;top:0" width="1" height="1"><g fill="#111" transform="translate(241.17 228.70) scale(0.2175 0.1500)"><use href="#r100" x="0.0"/></g></svg>
<div class="a" style="left:336px;top:214px;width:1px;height:18px;background:#c6c6c6;"></div>
<svg class="a" style="left:0;top:0" width="1" height="1"><g fill="#111" transform="translate(301.28 228.70) scale(0.2175 0.1500)"><use href="#r101" x="0.0"/></g></svg>
<div class="a" style="left:389px;top:214px;width:1px;height:18px;background:#c6c6c6;"></div>
<svg class="a" style="left:0;top:0" width="1" height="1"><g fill="#111" transform="translate(357.56 228.70) scale(0.2175 0.1500)"><use href="#r102" x="0.0"/></g></svg>
<div class="a" style="left:390px;top:214px;width:47px;height:17px;background:#d2d2d2;"></div>
<div class="a" style="left:436px;top:214px;width:1px;height:18px;background:#c6c6c6;"></div>
<svg class="a" style="left:0;top:0" width="1" height="1"><g fill="#217346" transform="translate(407.24 228.70) scale(0.2175 0.1500)"><use href="#r103" x="0.0"/></g></svg>
<div class="a" style="left:437px;top:214px;width:47px;height:17px;background:#d2d2d2;"></div>
<div class="a" style="left:483px;top:214px;width:1px;height:18px;background:#c6c6c6;"></div>
<svg class="a" style="left:0;top:0" width="1" height="1"><g fill="#217346" transform="translate(454.56 228.70) scale(0.2175 0.1500)"><use href="#r104" x="0.0"/></g></svg>
<div class="a" style="left:484px;top:214px;width:47px;height:17px;background:#d2d2d2;"></div>
<div class="a" style="left:530px;top:214px;width:1px;height:18px;background:#c6c6c6;"></div>
<svg class="a" style="left:0;top:0" width="1" height="1"><g fill="#217346" transform="translate(501.56 228.70) scale(0.2175 0.1500)"><use href="#r105" x="0.0"/></g></svg>
<div class="a" style="left:531px;top:214px;width:47px;height:17px;background:#d2d2d2;"></div>
<div class="a" style="left:577px;top:214px;width:1px;height:18px;background:#c6c6c6;"></div>
<svg class="a" style="left:0;top:0" width="1" height="1"><g fill="#217346" transform="translate(549.00 228.70) scale(0.2175 0.1500)"><use href="#r106" x="0.0"/></g></svg>
<div class="a" style="left:578px;top:214px;width:47px;height:17px;background:#d2d2d2;"></div>
<div class="a" style="left:624px;top:214px;width:1px;height:18px;background:#c6c6c6;"></div>
<svg class="a" style="left:0;top:0" width="1" height="1"><g fill="#217346" transform="translate(595.45 228.70) scale(0.2175 0.1500)"><use href="#r107" x="0.0"/></g></svg>
<div class="a" style="left:625px;top:214px;width:47px;height:17px;background:#d2d2d2;"></div>
<div class="a" style="left:671px;top:214px;width:1px;height:18px;background:#c6c6c6;"></div>
<svg class="a" style="left:0;top:0" width="1" height="1"><g fill="#217346" transform="translate(642.45 228.70) scale(0.2175 0.1500)"><use href="#r108" x="0.0"/></g></svg>
<div class="a" style="left:672px;top:214px;width:47px;height:17px;background:#d2d2d2;"></div>
<div class="a" style="left:718px;top:214px;width:1px;height:18px;background:#c6c6c6;"></div>
<svg class="a" style="left:0;top:0" width="1" height="1"><g fill="#217346" transform="translate(689.67 228.70) scale(0.2175 0.1500)"><use href="#r109" x="0.0"/></g></svg>
<div class="a" style="left:719px;top:214px;width:47px;height:17px;background:#d2d2d2;"></div>
<div class="a" style="left:765px;top:214px;width:1px;height:18px;background:#c6c6c6;"></div>
<svg class="a" style="left:0;top:0" width="1" height="1"><g fill="#217346" transform="translate(736.45 228.70) scale(0.2175 0.1500)"><use href="#r110" x="0.0"/></g></svg>
<div class="a" style="left:766px;top:214px;width:47px;height:17px;background:#d2d2d2;"></div>
<div class="a" style="left:812px;top:214px;width:1px;height:18px;background:#c6c6c6;"></div>
<svg class="a" style="left:0;top:0" width="1" height="1"><g fill="#217346" transform="translate(783.56 228.70) scale(0.2175 0.1500)"><use href="#r111" x="0.0"/></g></svg>
<div class="a" style="left:813px;top:214px;width:47px;height:17px;background:#d2d2d2;"></div>
<div class="a" style="left:859px;top:214px;width:1px;height:18px;background:#c6c6c6;"></div>
<svg class="a" style="left:0;top:0" width="1" height="1"><g fill="#217346" transform="translate(830.56 228.70) scale(0.2175 0.1500)"><use href="#r112" x="0.0"/></g></svg>
<div class="a" style="left:860px;top:214px;width:47px;height:17px;background:#d2d2d2;"></div>
<div class="a" style="left:906px;top:214px;width:1px;height:18px;background:#c6c6c6;"></div>
<svg class="a" style="left:0;top:0" width="1" height="1"><g fill="#217346" transform="translate(877.35 228.70) scale(0.2175 0.1500)"><use href="#r113" x="0.0"/></g></svg>
<div class="a" style="left:907px;top:214px;width:47px;height:17px;background:#d2d2d2;"></div>
<div class="a" style="left:953px;top:214px;width:1px;height:18px;background:#c6c6c6;"></div>
<svg class="a" style="left:0;top:0" width="1" height="1"><g fill="#217346" transform="translate(924.35 228.70) scale(0.2175 0.1500)"><use href="#r114" x="0.0"/></g></svg>
<div class="a" style="left:1016px;top:214px;width:1px;height:18px;background:#c6c6c6;"></div>
<svg class="a" style="left:0;top:0" width="1" height="1"><g fill="#111" transform="translate(979.45 228.70) scale(0.2175 0.1500)"><use href="#r115" x="0.0"/></g></svg>
<div class="a" style="left:1079px;top:214px;width:1px;height:18px;background:#c6c6c6;"></div>
<svg class="a" style="left:0;top:0" width="1" height="1"><g fill="#111" transform="translate(1042.56 228.70) scale(0.2175 0.1500)"><use href="#r116" x="0.0"/></g></svg>
<div class="a" style="left:0px;top:232px;width:1052px;height:1px;background:#bdbdbd;"></div>
<div class="a" style="left:30px;top:231px;width:67px;height:2px;background:#217346;"></div>
<div class="a" style="left:390px;top:231px;width:564px;height:2px;background:#217346;"></div>
<svg class="a" style="left:12px;top:217px;" width="15" height="13" viewBox="0 0 15 13"><path d="M14 1v11H2z" fill="#b9b9b9"/></svg>
<div class="a" style="left:29px;top:214px;width:1px;height:18px;background:#c6c6c6;"></div>
<div class="a" style="left:0px;top:233px;width:29px;height:391px;background:#e6e6e6;"></div>
<div class="a" style="left:0px;top:252px;width:29px;height:1px;background:#c6c6c6;"></div>
<svg class="a" style="left:0;top:0" width="1" height="1"><g fill="#111" transform="translate(10.53 248.20) scale(0.1500 0.1500)"><use href="#s117" x="0.0"/></g></svg>
<div class="a" style="left:0px;top:285px;width:29px;height:1px;background:#c6c6c6;"></div>
<svg class="a" style="left:0;top:0" width="1" height="1"><g fill="#111" transform="translate(10.22 281.20) scale(0.1500 0.1500)"><use href="#s118" x="0.0"/></g></svg>
<div class="a" style="left:0px;top:318px;width:29px;height:1px;background:#c6c6c6;"></div>
<svg class="a" style="left:0;top:0" width="1" height="1"><g fill="#111" transform="translate(10.30 314.20) scale(0.1500 0.1500)"><use href="#s93" x="0.0"/></g></svg>
<div class="a" style="left:0px;top:339px;width:29px;height:1px;background:#c6c6c6;"></div>
<svg class="a" style="left:0;top:0" width="1" height="1"><g fill="#111" transform="translate(10.30 335.20) scale(0.1500 0.1500)"><use href="#s119" x="0.0"/></g></svg>
<div class="a" style="left:0px;top:340px;width:29px;height:25px;background:#d2d2d2;"></div>
<div class="a" style="left:0px;top:365px;width:29px;height:1px;background:#c6c6c6;"></div>
<svg class="a" style="left:0;top:0" width="1" height="1"><g fill="#217346" transform="translate(10.45 361.20) scale(0.1500 0.1500)"><use href="#s120" x="0.0"/></g></svg>
<div class="a" style="left:0px;top:366px;width:29px;height:25px;background:#d2d2d2;"></div>
<div class="a" style="left:0px;top:391px;width:29px;height:1px;background:#c6c6c6;"></div>
<svg class="a" style="left:0;top:0" width="1" height="1"><g fill="#217346" transform="translate(5.84 387.20) scale(0.1500 0.1500)"><use href="#s12" x="0.0"/><use href="#s121" x="55.5"/></g></svg>
<div class="a" style="left:0px;top:392px;width:29px;height:25px;background:#d2d2d2;"></div>
<div class="a" style="left:0px;top:417px;width:29px;height:1px;background:#c6c6c6;"></div>
<svg class="a" style="left:0;top:0" width="1" height="1"><g fill="#217346" transform="translate(5.99 413.20) scale(0.1500 0.1500)"><use href="#s12" x="0.0"/><use href="#s12" x="55.5"/></g></svg>
<div class="a" style="left:0px;top:418px;width:29px;height:25px;background:#d2d2d2;"></div>
<div class="a" style="left:0px;top:443px;width:29px;height:1px;background:#c6c6c6;"></div>
<svg class="a" style="left:0;top:0" width="1" height="1"><g fill="#217346" transform="translate(5.91 439.20) scale(0.1500 0.1500)"><use href="#s12" x="0.0"/><use href="#s122" x="55.5"/></g></svg>
<div class="a" style="left:0px;top:444px;width:29px;height:25px;background:#d2d2d2;"></div>
<div class="a" style="left:0px;top:469px;width:29px;height:1px;background:#c6c6c6;"></div>
<svg class="a" style="left:0;top:0" width="1" height="1"><g fill="#217346" transform="translate(5.91 465.20) scale(0.1500 0.1500)"><use href="#s12" x="0.0"/><use href="#s123" x="55.5"/></g></svg>
<div class="a" style="left:0px;top:470px;width:29px;height:25px;background:#d2d2d2;"></div>
<div class="a" style="left:0px;top:495px;width:29px;height:1px;background:#c6c6c6;"></div>
<svg class="a" style="left:0;top:0" width="1" height="1"><g fill="#217346" transform="translate(5.76 491.20) scale(0.1500 0.1500)"><use href="#s12" x="0.0"/><use href="#s96" x="55.5"/></g></svg>
<div class="a" style="left:0px;top:496px;width:29px;height:25px;background:#d2d2d2;"></div>
<div class="a" style="left:0px;top:521px;width:29px;height:1px;background:#c6c6c6;"></div>
<svg class="a" style="left:0;top:0" width="1" height="1"><g fill="#217346" transform="translate(5.91 517.20) scale(0.1500 0.1500)"><use href="#s12" x="0.0"/><use href="#s117" x="55.5"/></g></svg>
<div class="a" style="left:0px;top:522px;width:29px;height:25px;background:#d2d2d2;"></div>
<div class="a" style="left:0px;top:547px;width:29px;height:1px;background:#c6c6c6;"></div>
<svg class="a" style="left:0;top:0" width="1" height="1"><g fill="#217346" transform="translate(5.84 543.20) scale(0.1500 0.1500)"><use href="#s12" x="0.0"/><use href="#s118" x="55.5"/></g></svg>
<div class="a" style="left:0px;top:548px;width:29px;height:25px;background:#d2d2d2;"></div>
<div class="a" style="left:0px;top:573px;width:29px;height:1px;background:#c6c6c6;"></div>
<svg class="a" style="left:0;top:0" width="1" height="1"><g fill="#217346" transform="translate(5.84 569.20) scale(0.1500 0.1500)"><use href="#s12" x="0.0"/><use href="#s93" x="55.5"/></g></svg>
<div class="a" style="left:0px;top:593px;width:29px;height:1px;background:#c6c6c6;"></div>
<svg class="a" style="left:0;top:0" width="1" height="1"><g fill="#111" transform="translate(5.84 589.20) scale(0.1500 0.1500)"><use href="#s12" x="0.0"/><use href="#s119" x="55.5"/></g></svg>
<div class="a" style="left:0px;top:611px;width:29px;height:1px;background:#c6c6c6;"></div>
<svg class="a" style="left:0;top:0" width="1" height="1"><g fill="#111" transform="translate(5.91 607.20) scale(0.1500 0.1500)"><use href="#s12" x="0.0"/><use href="#s120" x="55.5"/></g></svg>
<div class="a" style="left:0px;top:630px;width:29px;height:1px;background:#c6c6c6;"></div>
<svg class="a" style="left:0;top:0" width="1" height="1"><g fill="#111" transform="translate(6.21 626.20) scale(0.1500 0.1500)"><use href="#s122" x="0.0"/><use href="#s121" x="55.5"/></g></svg>
<div class="a" style="left:29px;top:233px;width:1px;height:391px;background:#bdbdbd;"></div>
<div class="a" style="left:28px;top:340px;width:2px;height:234px;background:#217346;"></div>
<div class="a" style="left:30px;top:233px;width:1022px;height:391px;background:#fff;"></div>
<svg class="a" style="left:0;top:0" width="1" height="1"><g fill="#000" transform="translate(115.07 248.32) scale(0.1421 0.1400)"><use href="#r124" x="0.0"/><use href="#r125" x="100.0"/><use href="#r126" x="200.0"/><use href="#r127" x="300.0"/><use href="#r128" x="400.0"/><use href="#r129" x="500.0"/><use href="#r130" x="600.0"/><use href="#r131" x="700.0"/><use href="#r132" x="800.0"/><use href="#r133" x="900.0"/><use href="#r134" x="1000.0"/><use href="#r135" x="1100.0"/><use href="#r136" x="1200.0"/><use href="#r137" x="1300.0"/><use href="#r138" x="1400.0"/><use href="#r139" x="1500.0"/><use href="#r140" x="1600.0"/><use href="#r134" x="1700.0"/><use href="#r141" x="1800.0"/><use href="#r142" x="1900.0"/><use href="#r143" x="2000.0"/><use href="#r139" x="2100.0"/><use href="#r144" x="2200.0"/><use href="#r145" x="2300.0"/><use href="#r140" x="2400.0"/><use href="#r146" x="2500.0"/><use href="#r147" x="2600.0"/><use href="#r148" x="2700.0"/><use href="#r149" x="2800.0"/><use href="#r150" x="2900.0"/><use href="#r151" x="3000.0"/><use href="#r152" x="3100.0"/><use href="#r153" x="3200.0"/><use href="#r154" x="3300.0"/><use href="#r155" x="3400.0"/><use href="#r135" x="3500.0"/><use href="#r156" x="3600.0"/><use href="#r157" x="3700.0"/><use href="#r140" x="3800.0"/><use href="#r158" x="3900.0"/><use href="#r159" x="4000.0"/><use href="#r138" x="4100.0"/><use href="#r160" x="4200.0"/><use href="#r161" x="4300.0"/><use href="#r162" x="4350.0"/><use href="#r163" x="4400.0"/><use href="#r164" x="4450.0"/><use href="#r165" x="4550.0"/><use href="#r127" x="4650.0"/><use href="#r166" x="4750.0"/><use href="#r167" x="4850.0"/><use href="#r156" x="4950.0"/><use href="#r132" x="5050.0"/></g></svg>
<div class="a" style="left:30px;top:251px;width:924px;height:2px;background:#000;"></div>
<svg class="a" style="left:0;top:0" width="1" height="1"><g fill="#000" transform="translate(31.84 291.32) scale(0.1622 0.1400)"><use href="#r168" x="0.0"/><use href="#r169" x="100.0"/><use href="#r170" x="200.0"/></g></svg>
<svg class="a" style="left:0;top:0" width="1" height="1"><g fill="#000" transform="translate(98.30 290.32) scale(0.1407 0.1400)"><use href="#r171" x="0.0"/><use href="#r172" x="100.0"/><use href="#r173" x="200.0"/><use href="#r174" x="250.0"/><use href="#r175" x="300.0"/></g></svg>
<svg class="a" style="left:0;top:0" width="1" height="1"><g fill="#000" transform="translate(158.30 290.32) scale(0.1407 0.1400)"><use href="#r171" x="0.0"/><use href="#r172" x="100.0"/><use href="#r173" x="200.0"/><use href="#r176" x="250.0"/><use href="#r175" x="300.0"/></g></svg>
<svg class="a" style="left:0;top:0" width="1" height="1"><g fill="#000" transform="translate(218.30 290.32) scale(0.1407 0.1400)"><use href="#r171" x="0.0"/><use href="#r172" x="100.0"/><use href="#r173" x="200.0"/><use href="#r161" x="250.0"/><use href="#r175" x="300.0"/></g></svg>
<svg class="a" style="left:0;top:0" width="1" height="1"><g fill="#000" transform="translate(278.30 290.32) scale(0.1407 0.1400)"><use href="#r171" x="0.0"/><use href="#r172" x="100.0"/><use href="#r173" x="200.0"/><use href="#r177" x="250.0"/><use href="#r175" x="300.0"/></g></svg>
<div class="a" style="left:96px;top:253px;width:1px;height:65px;background:#000;"></div>
<div class="a" style="left:156px;top:253px;width:1px;height:65px;background:#000;"></div>
<div class="a" style="left:216px;top:253px;width:1px;height:65px;background:#000;"></div>
<div class="a" style="left:276px;top:253px;width:1px;height:65px;background:#000;"></div>
<div class="a" style="left:336px;top:253px;width:1px;height:65px;background:#000;"></div>
<svg class="a" style="left:0;top:0" width="1" height="1"><g fill="#000" transform="translate(606.22 274.32) scale(0.1568 0.1400)"><use href="#r171" x="0.0"/><use href="#r172" x="100.0"/><use href="#r178" x="200.0"/><use href="#r179" x="300.0"/><use href="#r175" x="400.0"/></g></svg>
<div class="a" style="left:336px;top:285px;width:618px;height:1px;background:#000;"></div>
<svg class="a" style="left:0;top:0" width="1" height="1"><g fill="#000" transform="translate(344.38 307.82) scale(0.1241 0.1400)"><use href="#r171" x="0.0"/><use href="#r180" x="200.0"/></g></svg>
<div class="a" style="left:436px;top:285px;width:1px;height:33px;background:#000;"></div>
<svg class="a" style="left:0;top:0" width="1" height="1"><g fill="#000" transform="translate(398.10 307.82) scale(0.1891 0.1400)"><use href="#r181" x="0.0"/><use href="#r182" x="50.0"/></g></svg>
<div class="a" style="left:483px;top:285px;width:1px;height:33px;background:#000;"></div>
<svg class="a" style="left:0;top:0" width="1" height="1"><g fill="#000" transform="translate(446.31 307.82) scale(0.1800 0.1400)"><use href="#r173" x="0.0"/><use href="#r182" x="50.0"/></g></svg>
<div class="a" style="left:530px;top:285px;width:1px;height:33px;background:#000;"></div>
<svg class="a" style="left:0;top:0" width="1" height="1"><g fill="#000" transform="translate(493.50 307.82) scale(0.1786 0.1400)"><use href="#r183" x="0.0"/><use href="#r182" x="50.0"/></g></svg>
<div class="a" style="left:577px;top:285px;width:1px;height:33px;background:#000;"></div>
<svg class="a" style="left:0;top:0" width="1" height="1"><g fill="#000" transform="translate(541.23 307.82) scale(0.1731 0.1400)"><use href="#r184" x="0.0"/><use href="#r182" x="50.0"/></g></svg>
<div class="a" style="left:624px;top:285px;width:1px;height:33px;background:#000;"></div>
<svg class="a" style="left:0;top:0" width="1" height="1"><g fill="#000" transform="translate(587.50 307.82) scale(0.1786 0.1400)"><use href="#r185" x="0.0"/><use href="#r182" x="50.0"/></g></svg>
<div class="a" style="left:671px;top:285px;width:1px;height:33px;background:#000;"></div>
<svg class="a" style="left:0;top:0" width="1" height="1"><g fill="#000" transform="translate(634.50 307.82) scale(0.1786 0.1400)"><use href="#r174" x="0.0"/><use href="#r182" x="50.0"/></g></svg>
<div class="a" style="left:718px;top:285px;width:1px;height:33px;background:#000;"></div>
<svg class="a" style="left:0;top:0" width="1" height="1"><g fill="#000" transform="translate(681.50 307.82) scale(0.1786 0.1400)"><use href="#r176" x="0.0"/><use href="#r182" x="50.0"/></g></svg>
<div class="a" style="left:765px;top:285px;width:1px;height:33px;background:#000;"></div>
<svg class="a" style="left:0;top:0" width="1" height="1"><g fill="#000" transform="translate(728.50 307.82) scale(0.1786 0.1400)"><use href="#r161" x="0.0"/><use href="#r182" x="50.0"/></g></svg>
<div class="a" style="left:812px;top:285px;width:1px;height:33px;background:#000;"></div>
<svg class="a" style="left:0;top:0" width="1" height="1"><g fill="#000" transform="translate(775.31 307.82) scale(0.1800 0.1400)"><use href="#r177" x="0.0"/><use href="#r182" x="50.0"/></g></svg>
<div class="a" style="left:859px;top:285px;width:1px;height:33px;background:#000;"></div>
<svg class="a" style="left:0;top:0" width="1" height="1"><g fill="#000" transform="translate(818.10 307.82) scale(0.1716 0.1400)"><use href="#r181" x="0.0"/><use href="#r162" x="50.0"/><use href="#r182" x="100.0"/></g></svg>
<div class="a" style="left:906px;top:285px;width:1px;height:33px;background:#000;"></div>
<svg class="a" style="left:0;top:0" width="1" height="1"><g fill="#000" transform="translate(865.10 307.82) scale(0.1716 0.1400)"><use href="#r181" x="0.0"/><use href="#r181" x="50.0"/><use href="#r182" x="100.0"/></g></svg>
<div class="a" style="left:953px;top:285px;width:1px;height:33px;background:#000;"></div>
<svg class="a" style="left:0;top:0" width="1" height="1"><g fill="#000" transform="translate(912.10 307.82) scale(0.1716 0.1400)"><use href="#r181" x="0.0"/><use href="#r173" x="50.0"/><use href="#r182" x="100.0"/></g></svg>
<div class="a" style="left:30px;top:318px;width:924px;height:1px;background:#000;"></div>
<svg class="a" style="left:388px;top:284px" width="567" height="36" viewBox="0 0 567 36"><rect x="2" y="2" width="563" height="32" fill="none" stroke="#fff" stroke-width="2"/><rect x="2" y="2" width="563" height="32" fill="none" stroke="#1a6a3b" stroke-width="2" stroke-dasharray="6.5 2.4"/></svg>
<div class="a" style="left:29px;top:339px;width:68px;height:234px;background:#d4d4d4;"></div>
<div class="a" style="left:30px;top:340px;width:66px;height:232px;background:#fff;"></div>
<div class="a" style="left:31px;top:341px;width:64px;height:230px;background:#c6c6c6;"></div>
<div class="a" style="left:389px;top:339px;width:565px;height:234px;background:#d4d4d4;"></div>
<div class="a" style="left:390px;top:340px;width:563px;height:232px;background:#fff;"></div>
<div class="a" style="left:391px;top:341px;width:561px;height:230px;background:#c6c6c6;"></div>
<div class="a" style="left:28px;top:340px;width:2px;height:234px;background:#217346;"></div>
<div class="a" style="left:30px;top:573px;width:924px;height:1px;background:#000;"></div>
<svg class="a" style="left:0;top:0" width="1" height="1"><g fill="#000" transform="translate(32.55 359.12) scale(0.1505 0.1400)"><use href="#r186" x="0.0"/></g></svg>
<svg class="a" style="left:0;top:0" width="1" height="1"><g fill="#000" transform="translate(77.40 359.12) scale(0.1505 0.1400)"><use href="#r187" x="0.0"/></g></svg>
<svg class="a" style="left:0;top:0" width="1" height="1"><g fill="#000" transform="translate(125.43 358.93) scale(0.1480 0.1350)"><use href="#r181" x="0.0"/><use href="#r183" x="50.0"/><use href="#r188" x="100.0"/><use href="#r162" x="150.0"/></g></svg>
<svg class="a" style="left:0;top:0" width="1" height="1"><g fill="#000" transform="translate(32.55 385.12) scale(0.1505 0.1400)"><use href="#r189" x="0.0"/></g></svg>
<svg class="a" style="left:0;top:0" width="1" height="1"><g fill="#000" transform="translate(76.87 385.12) scale(0.1609 0.1400)"><use href="#r148" x="0.0"/></g></svg>
<svg class="a" style="left:0;top:0" width="1" height="1"><g fill="#000" transform="translate(125.43 384.93) scale(0.1480 0.1350)"><use href="#r181" x="0.0"/><use href="#r185" x="50.0"/><use href="#r188" x="100.0"/><use href="#r162" x="150.0"/></g></svg>
<svg class="a" style="left:0;top:0" width="1" height="1"><g fill="#000" transform="translate(32.39 411.12) scale(0.1522 0.1400)"><use href="#r190" x="0.0"/></g></svg>
<svg class="a" style="left:0;top:0" width="1" height="1"><g fill="#000" transform="translate(75.85 411.12) scale(0.1795 0.1400)"><use href="#r191" x="0.0"/></g></svg>
<svg class="a" style="left:0;top:0" width="1" height="1"><g fill="#000" transform="translate(125.43 410.93) scale(0.1480 0.1350)"><use href="#r181" x="0.0"/><use href="#r174" x="50.0"/><use href="#r188" x="100.0"/><use href="#r162" x="150.0"/></g></svg>
<svg class="a" style="left:0;top:0" width="1" height="1"><g fill="#000" transform="translate(32.23 437.12) scale(0.1538 0.1400)"><use href="#r192" x="0.0"/></g></svg>
<svg class="a" style="left:0;top:0" width="1" height="1"><g fill="#000" transform="translate(76.58 437.12) scale(0.1573 0.1400)"><use href="#r193" x="0.0"/></g></svg>
<svg class="a" style="left:0;top:0" width="1" height="1"><g fill="#000" transform="translate(125.43 436.93) scale(0.1480 0.1350)"><use href="#r181" x="0.0"/><use href="#r174" x="50.0"/><use href="#r188" x="100.0"/><use href="#r162" x="150.0"/></g></svg>
<svg class="a" style="left:0;top:0" width="1" height="1"><g fill="#000" transform="translate(32.39 463.12) scale(0.1522 0.1400)"><use href="#r194" x="0.0"/></g></svg>
<svg class="a" style="left:0;top:0" width="1" height="1"><g fill="#000" transform="translate(55.70 463.12) scale(0.1505 0.1400)"><use href="#r195" x="0.0"/></g></svg>
<svg class="a" style="left:0;top:0" width="1" height="1"><g fill="#000" transform="translate(75.64 463.12) scale(0.1818 0.1400)"><use href="#r196" x="0.0"/></g></svg>
<svg class="a" style="left:0;top:0" width="1" height="1"><g fill="#000" transform="translate(125.43 462.93) scale(0.1480 0.1350)"><use href="#r181" x="0.0"/><use href="#r181" x="50.0"/><use href="#r188" x="100.0"/><use href="#r162" x="150.0"/></g></svg>
<svg class="a" style="left:0;top:0" width="1" height="1"><g fill="#000" transform="translate(32.24 489.12) scale(0.1522 0.1400)"><use href="#r197" x="0.0"/></g></svg>
<svg class="a" style="left:0;top:0" width="1" height="1"><g fill="#000" transform="translate(77.54 489.12) scale(0.1522 0.1400)"><use href="#r198" x="0.0"/></g></svg>
<svg class="a" style="left:0;top:0" width="1" height="1"><g fill="#000" transform="translate(125.43 488.93) scale(0.1480 0.1350)"><use href="#r181" x="0.0"/><use href="#r174" x="50.0"/><use href="#r188" x="100.0"/><use href="#r162" x="150.0"/></g></svg>
<svg class="a" style="left:0;top:0" width="1" height="1"><g fill="#000" transform="translate(55.56 515.12) scale(0.1458 0.1400)"><use href="#r199" x="0.0"/></g></svg>
<svg class="a" style="left:0;top:0" width="1" height="1"><g fill="#000" transform="translate(125.43 514.93) scale(0.1480 0.1350)"><use href="#r181" x="0.0"/><use href="#r174" x="50.0"/><use href="#r188" x="100.0"/><use href="#r162" x="150.0"/></g></svg>
<svg class="a" style="left:0;top:0" width="1" height="1"><g fill="#000" transform="translate(31.52 541.12) scale(0.1647 0.1400)"><use href="#r200" x="0.0"/></g></svg>
<svg class="a" style="left:0;top:0" width="1" height="1"><g fill="#000" transform="translate(55.06 541.12) scale(0.1573 0.1400)"><use href="#r201" x="0.0"/></g></svg>
<svg class="a" style="left:0;top:0" width="1" height="1"><g fill="#000" transform="translate(76.55 541.12) scale(0.1609 0.1400)"><use href="#r202" x="0.0"/></g></svg>
<svg class="a" style="left:0;top:0" width="1" height="1"><g fill="#000" transform="translate(125.43 540.93) scale(0.1480 0.1350)"><use href="#r181" x="0.0"/><use href="#r174" x="50.0"/><use href="#r188" x="100.0"/><use href="#r162" x="150.0"/></g></svg>
<svg class="a" style="left:0;top:0" width="1" height="1"><g fill="#000" transform="translate(32.39 567.12) scale(0.1522 0.1400)"><use href="#r203" x="0.0"/></g></svg>
<svg class="a" style="left:0;top:0" width="1" height="1"><g fill="#000" transform="translate(77.40 567.12) scale(0.1489 0.1400)"><use href="#r204" x="0.0"/></g></svg>
<svg class="a" style="left:0;top:0" width="1" height="1"><g fill="#000" transform="translate(125.43 566.93) scale(0.1480 0.1350)"><use href="#r181" x="0.0"/><use href="#r185" x="50.0"/><use href="#r188" x="100.0"/><use href="#r162" x="150.0"/></g></svg>
<svg class="a" style="left:0;top:0" width="1" height="1"><g fill="#000" transform="translate(591.75 358.93) scale(0.1533 0.1350)"><use href="#r181" x="0.0"/><use href="#r174" x="50.0"/><use href="#r188" x="100.0"/><use href="#r161" x="150.0"/></g></svg>
<svg class="a" style="left:0;top:0" width="1" height="1"><g fill="#000" transform="translate(639.71 358.93) scale(0.1492 0.1350)"><use href="#r173" x="0.0"/><use href="#r162" x="50.0"/><use href="#r188" x="100.0"/><use href="#r176" x="150.0"/></g></svg>
<svg class="a" style="left:0;top:0" width="1" height="1"><g fill="#000" transform="translate(686.71 358.93) scale(0.1492 0.1350)"><use href="#r173" x="0.0"/><use href="#r176" x="50.0"/><use href="#r188" x="100.0"/><use href="#r162" x="150.0"/></g></svg>
<svg class="a" style="left:0;top:0" width="1" height="1"><g fill="#000" transform="translate(733.71 358.93) scale(0.1492 0.1350)"><use href="#r173" x="0.0"/><use href="#r174" x="50.0"/><use href="#r188" x="100.0"/><use href="#r185" x="150.0"/></g></svg>
<svg class="a" style="left:0;top:0" width="1" height="1"><g fill="#000" transform="translate(780.73 358.93) scale(0.1468 0.1350)"><use href="#r173" x="0.0"/><use href="#r181" x="50.0"/><use href="#r188" x="100.0"/><use href="#r184" x="150.0"/></g></svg>
<svg class="a" style="left:0;top:0" width="1" height="1"><g fill="#000" transform="translate(826.74 358.93) scale(0.1542 0.1350)"><use href="#r181" x="0.0"/><use href="#r174" x="50.0"/><use href="#r188" x="100.0"/><use href="#r162" x="150.0"/></g></svg>
<svg class="a" style="left:0;top:0" width="1" height="1"><g fill="#000" transform="translate(873.75 358.93) scale(0.1533 0.1350)"><use href="#r181" x="0.0"/><use href="#r162" x="50.0"/><use href="#r188" x="100.0"/><use href="#r161" x="150.0"/></g></svg>
<svg class="a" style="left:0;top:0" width="1" height="1"><g fill="#000" transform="translate(928.73 358.93) scale(0.1522 0.1350)"><use href="#r185" x="0.0"/><use href="#r188" x="50.0"/><use href="#r176" x="100.0"/></g></svg>
<svg class="a" style="left:0;top:0" width="1" height="1"><g fill="#000" transform="translate(591.73 384.93) scale(0.1551 0.1350)"><use href="#r181" x="0.0"/><use href="#r177" x="50.0"/><use href="#r188" x="100.0"/><use href="#r174" x="150.0"/></g></svg>
<svg class="a" style="left:0;top:0" width="1" height="1"><g fill="#000" transform="translate(639.67 384.93) scale(0.1542 0.1350)"><use href="#r173" x="0.0"/><use href="#r183" x="50.0"/><use href="#r188" x="100.0"/><use href="#r181" x="150.0"/></g></svg>
<svg class="a" style="left:0;top:0" width="1" height="1"><g fill="#000" transform="translate(686.71 384.93) scale(0.1492 0.1350)"><use href="#r173" x="0.0"/><use href="#r177" x="50.0"/><use href="#r188" x="100.0"/><use href="#r173" x="150.0"/></g></svg>
<svg class="a" style="left:0;top:0" width="1" height="1"><g fill="#000" transform="translate(733.71 384.93) scale(0.1492 0.1350)"><use href="#r173" x="0.0"/><use href="#r177" x="50.0"/><use href="#r188" x="100.0"/><use href="#r173" x="150.0"/></g></svg>
<svg class="a" style="left:0;top:0" width="1" height="1"><g fill="#000" transform="translate(780.70 384.93) scale(0.1500 0.1350)"><use href="#r173" x="0.0"/><use href="#r183" x="50.0"/><use href="#r188" x="100.0"/><use href="#r183" x="150.0"/></g></svg>
<svg class="a" style="left:0;top:0" width="1" height="1"><g fill="#000" transform="translate(826.74 384.93) scale(0.1542 0.1350)"><use href="#r181" x="0.0"/><use href="#r161" x="50.0"/><use href="#r188" x="100.0"/><use href="#r176" x="150.0"/></g></svg>
<svg class="a" style="left:0;top:0" width="1" height="1"><g fill="#000" transform="translate(873.73 384.93) scale(0.1551 0.1350)"><use href="#r181" x="0.0"/><use href="#r183" x="50.0"/><use href="#r188" x="100.0"/><use href="#r183" x="150.0"/></g></svg>
<svg class="a" style="left:0;top:0" width="1" height="1"><g fill="#000" transform="translate(928.73 384.93) scale(0.1533 0.1350)"><use href="#r161" x="0.0"/><use href="#r188" x="50.0"/><use href="#r183" x="100.0"/></g></svg>
<svg class="a" style="left:0;top:0" width="1" height="1"><g fill="#000" transform="translate(591.74 410.93) scale(0.1542 0.1350)"><use href="#r181" x="0.0"/><use href="#r177" x="50.0"/><use href="#r188" x="100.0"/><use href="#r176" x="150.0"/></g></svg>
<svg class="a" style="left:0;top:0" width="1" height="1"><g fill="#000" transform="translate(639.67 410.93) scale(0.1542 0.1350)"><use href="#r173" x="0.0"/><use href="#r183" x="50.0"/><use href="#r188" x="100.0"/><use href="#r181" x="150.0"/></g></svg>
<svg class="a" style="left:0;top:0" width="1" height="1"><g fill="#000" transform="translate(686.70 410.93) scale(0.1500 0.1350)"><use href="#r173" x="0.0"/><use href="#r177" x="50.0"/><use href="#r188" x="100.0"/><use href="#r183" x="150.0"/></g></svg>
<svg class="a" style="left:0;top:0" width="1" height="1"><g fill="#000" transform="translate(733.73 410.93) scale(0.1468 0.1350)"><use href="#r173" x="0.0"/><use href="#r177" x="50.0"/><use href="#r188" x="100.0"/><use href="#r184" x="150.0"/></g></svg>
<svg class="a" style="left:0;top:0" width="1" height="1"><g fill="#000" transform="translate(780.71 410.93) scale(0.1492 0.1350)"><use href="#r173" x="0.0"/><use href="#r183" x="50.0"/><use href="#r188" x="100.0"/><use href="#r176" x="150.0"/></g></svg>
<svg class="a" style="left:0;top:0" width="1" height="1"><g fill="#000" transform="translate(826.75 410.93) scale(0.1533 0.1350)"><use href="#r181" x="0.0"/><use href="#r161" x="50.0"/><use href="#r188" x="100.0"/><use href="#r161" x="150.0"/></g></svg>
<svg class="a" style="left:0;top:0" width="1" height="1"><g fill="#000" transform="translate(873.74 410.93) scale(0.1542 0.1350)"><use href="#r181" x="0.0"/><use href="#r183" x="50.0"/><use href="#r188" x="100.0"/><use href="#r185" x="150.0"/></g></svg>
<svg class="a" style="left:0;top:0" width="1" height="1"><g fill="#000" transform="translate(928.73 410.93) scale(0.1533 0.1350)"><use href="#r161" x="0.0"/><use href="#r188" x="50.0"/><use href="#r183" x="100.0"/></g></svg>
<svg class="a" style="left:0;top:0" width="1" height="1"><g fill="#000" transform="translate(592.67 436.93) scale(0.1542 0.1350)"><use href="#r173" x="0.0"/><use href="#r162" x="50.0"/><use href="#r188" x="100.0"/><use href="#r181" x="150.0"/></g></svg>
<svg class="a" style="left:0;top:0" width="1" height="1"><g fill="#000" transform="translate(639.73 436.93) scale(0.1468 0.1350)"><use href="#r173" x="0.0"/><use href="#r183" x="50.0"/><use href="#r188" x="100.0"/><use href="#r184" x="150.0"/></g></svg>
<svg class="a" style="left:0;top:0" width="1" height="1"><g fill="#000" transform="translate(686.71 436.93) scale(0.1492 0.1350)"><use href="#r173" x="0.0"/><use href="#r177" x="50.0"/><use href="#r188" x="100.0"/><use href="#r185" x="150.0"/></g></svg>
<svg class="a" style="left:0;top:0" width="1" height="1"><g fill="#000" transform="translate(733.71 436.93) scale(0.1492 0.1350)"><use href="#r173" x="0.0"/><use href="#r177" x="50.0"/><use href="#r188" x="100.0"/><use href="#r176" x="150.0"/></g></svg>
<svg class="a" style="left:0;top:0" width="1" height="1"><g fill="#000" transform="translate(780.67 436.93) scale(0.1542 0.1350)"><use href="#r173" x="0.0"/><use href="#r184" x="50.0"/><use href="#r188" x="100.0"/><use href="#r181" x="150.0"/></g></svg>
<svg class="a" style="left:0;top:0" width="1" height="1"><g fill="#000" transform="translate(826.74 436.93) scale(0.1542 0.1350)"><use href="#r181" x="0.0"/><use href="#r177" x="50.0"/><use href="#r188" x="100.0"/><use href="#r176" x="150.0"/></g></svg>
<svg class="a" style="left:0;top:0" width="1" height="1"><g fill="#000" transform="translate(873.73 436.93) scale(0.1551 0.1350)"><use href="#r181" x="0.0"/><use href="#r184" x="50.0"/><use href="#r188" x="100.0"/><use href="#r174" x="150.0"/></g></svg>
<svg class="a" style="left:0;top:0" width="1" height="1"><g fill="#000" transform="translate(928.60 436.93) scale(0.1500 0.1350)"><use href="#r177" x="0.0"/><use href="#r188" x="50.0"/><use href="#r184" x="100.0"/></g></svg>
<svg class="a" style="left:0;top:0" width="1" height="1"><g fill="#000" transform="translate(591.74 462.93) scale(0.1542 0.1350)"><use href="#r181" x="0.0"/><use href="#r185" x="50.0"/><use href="#r188" x="100.0"/><use href="#r173" x="150.0"/></g></svg>
<svg class="a" style="left:0;top:0" width="1" height="1"><g fill="#000" transform="translate(638.78 462.93) scale(0.1516 0.1350)"><use href="#r181" x="0.0"/><use href="#r161" x="50.0"/><use href="#r188" x="100.0"/><use href="#r184" x="150.0"/></g></svg>
<svg class="a" style="left:0;top:0" width="1" height="1"><g fill="#000" transform="translate(686.71 462.93) scale(0.1492 0.1350)"><use href="#r173" x="0.0"/><use href="#r184" x="50.0"/><use href="#r188" x="100.0"/><use href="#r173" x="150.0"/></g></svg>
<svg class="a" style="left:0;top:0" width="1" height="1"><g fill="#000" transform="translate(733.71 462.93) scale(0.1492 0.1350)"><use href="#r173" x="0.0"/><use href="#r183" x="50.0"/><use href="#r188" x="100.0"/><use href="#r177" x="150.0"/></g></svg>
<svg class="a" style="left:0;top:0" width="1" height="1"><g fill="#000" transform="translate(779.73 462.93) scale(0.1551 0.1350)"><use href="#r181" x="0.0"/><use href="#r177" x="50.0"/><use href="#r188" x="100.0"/><use href="#r183" x="150.0"/></g></svg>
<svg class="a" style="left:0;top:0" width="1" height="1"><g fill="#000" transform="translate(826.73 462.93) scale(0.1551 0.1350)"><use href="#r181" x="0.0"/><use href="#r184" x="50.0"/><use href="#r188" x="100.0"/><use href="#r183" x="150.0"/></g></svg>
<svg class="a" style="left:0;top:0" width="1" height="1"><g fill="#000" transform="translate(881.56 462.93) scale(0.1545 0.1350)"><use href="#r177" x="0.0"/><use href="#r188" x="50.0"/><use href="#r174" x="100.0"/></g></svg>
<svg class="a" style="left:0;top:0" width="1" height="1"><g fill="#000" transform="translate(929.35 462.93) scale(0.1489 0.1350)"><use href="#r184" x="0.0"/><use href="#r188" x="50.0"/><use href="#r183" x="100.0"/></g></svg>
<svg class="a" style="left:0;top:0" width="1" height="1"><g fill="#000" transform="translate(592.71 488.93) scale(0.1492 0.1350)"><use href="#r173" x="0.0"/><use href="#r162" x="50.0"/><use href="#r188" x="100.0"/><use href="#r162" x="150.0"/></g></svg>
<svg class="a" style="left:0;top:0" width="1" height="1"><g fill="#000" transform="translate(639.70 488.93) scale(0.1500 0.1350)"><use href="#r173" x="0.0"/><use href="#r183" x="50.0"/><use href="#r188" x="100.0"/><use href="#r174" x="150.0"/></g></svg>
<svg class="a" style="left:0;top:0" width="1" height="1"><g fill="#000" transform="translate(686.71 488.93) scale(0.1484 0.1350)"><use href="#r173" x="0.0"/><use href="#r177" x="50.0"/><use href="#r188" x="100.0"/><use href="#r161" x="150.0"/></g></svg>
<svg class="a" style="left:0;top:0" width="1" height="1"><g fill="#000" transform="translate(733.71 488.93) scale(0.1484 0.1350)"><use href="#r173" x="0.0"/><use href="#r177" x="50.0"/><use href="#r188" x="100.0"/><use href="#r161" x="150.0"/></g></svg>
<svg class="a" style="left:0;top:0" width="1" height="1"><g fill="#000" transform="translate(780.71 488.93) scale(0.1492 0.1350)"><use href="#r173" x="0.0"/><use href="#r184" x="50.0"/><use href="#r188" x="100.0"/><use href="#r173" x="150.0"/></g></svg>
<svg class="a" style="left:0;top:0" width="1" height="1"><g fill="#000" transform="translate(826.73 488.93) scale(0.1551 0.1350)"><use href="#r181" x="0.0"/><use href="#r177" x="50.0"/><use href="#r188" x="100.0"/><use href="#r183" x="150.0"/></g></svg>
<svg class="a" style="left:0;top:0" width="1" height="1"><g fill="#000" transform="translate(873.74 488.93) scale(0.1542 0.1350)"><use href="#r181" x="0.0"/><use href="#r183" x="50.0"/><use href="#r188" x="100.0"/><use href="#r177" x="150.0"/></g></svg>
<svg class="a" style="left:0;top:0" width="1" height="1"><g fill="#000" transform="translate(928.57 488.93) scale(0.1533 0.1350)"><use href="#r177" x="0.0"/><use href="#r188" x="50.0"/><use href="#r162" x="100.0"/></g></svg>
<svg class="a" style="left:0;top:0" width="1" height="1"><g fill="#000" transform="translate(591.73 514.93) scale(0.1551 0.1350)"><use href="#r181" x="0.0"/><use href="#r177" x="50.0"/><use href="#r188" x="100.0"/><use href="#r174" x="150.0"/></g></svg>
<svg class="a" style="left:0;top:0" width="1" height="1"><g fill="#000" transform="translate(639.70 514.93) scale(0.1500 0.1350)"><use href="#r173" x="0.0"/><use href="#r183" x="50.0"/><use href="#r188" x="100.0"/><use href="#r183" x="150.0"/></g></svg>
<svg class="a" style="left:0;top:0" width="1" height="1"><g fill="#000" transform="translate(686.73 514.93) scale(0.1468 0.1350)"><use href="#r173" x="0.0"/><use href="#r177" x="50.0"/><use href="#r188" x="100.0"/><use href="#r184" x="150.0"/></g></svg>
<svg class="a" style="left:0;top:0" width="1" height="1"><g fill="#000" transform="translate(733.71 514.93) scale(0.1492 0.1350)"><use href="#r173" x="0.0"/><use href="#r177" x="50.0"/><use href="#r188" x="100.0"/><use href="#r185" x="150.0"/></g></svg>
<svg class="a" style="left:0;top:0" width="1" height="1"><g fill="#000" transform="translate(780.71 514.93) scale(0.1492 0.1350)"><use href="#r173" x="0.0"/><use href="#r184" x="50.0"/><use href="#r188" x="100.0"/><use href="#r162" x="150.0"/></g></svg>
<svg class="a" style="left:0;top:0" width="1" height="1"><g fill="#000" transform="translate(826.73 514.93) scale(0.1551 0.1350)"><use href="#r181" x="0.0"/><use href="#r177" x="50.0"/><use href="#r188" x="100.0"/><use href="#r183" x="150.0"/></g></svg>
<svg class="a" style="left:0;top:0" width="1" height="1"><g fill="#000" transform="translate(873.74 514.93) scale(0.1542 0.1350)"><use href="#r181" x="0.0"/><use href="#r183" x="50.0"/><use href="#r188" x="100.0"/><use href="#r177" x="150.0"/></g></svg>
<svg class="a" style="left:0;top:0" width="1" height="1"><g fill="#000" transform="translate(928.57 514.93) scale(0.1533 0.1350)"><use href="#r177" x="0.0"/><use href="#r188" x="50.0"/><use href="#r173" x="100.0"/></g></svg>
<svg class="a" style="left:0;top:0" width="1" height="1"><g fill="#000" transform="translate(591.75 540.93) scale(0.1533 0.1350)"><use href="#r181" x="0.0"/><use href="#r161" x="50.0"/><use href="#r188" x="100.0"/><use href="#r161" x="150.0"/></g></svg>
<svg class="a" style="left:0;top:0" width="1" height="1"><g fill="#000" transform="translate(639.71 540.93) scale(0.1492 0.1350)"><use href="#r173" x="0.0"/><use href="#r173" x="50.0"/><use href="#r188" x="100.0"/><use href="#r185" x="150.0"/></g></svg>
<svg class="a" style="left:0;top:0" width="1" height="1"><g fill="#000" transform="translate(686.73 540.93) scale(0.1468 0.1350)"><use href="#r173" x="0.0"/><use href="#r161" x="50.0"/><use href="#r188" x="100.0"/><use href="#r184" x="150.0"/></g></svg>
<svg class="a" style="left:0;top:0" width="1" height="1"><g fill="#000" transform="translate(733.71 540.93) scale(0.1492 0.1350)"><use href="#r173" x="0.0"/><use href="#r177" x="50.0"/><use href="#r188" x="100.0"/><use href="#r162" x="150.0"/></g></svg>
<svg class="a" style="left:0;top:0" width="1" height="1"><g fill="#000" transform="translate(780.71 540.93) scale(0.1492 0.1350)"><use href="#r173" x="0.0"/><use href="#r184" x="50.0"/><use href="#r188" x="100.0"/><use href="#r173" x="150.0"/></g></svg>
<svg class="a" style="left:0;top:0" width="1" height="1"><g fill="#000" transform="translate(826.74 540.93) scale(0.1542 0.1350)"><use href="#r181" x="0.0"/><use href="#r177" x="50.0"/><use href="#r188" x="100.0"/><use href="#r177" x="150.0"/></g></svg>
<svg class="a" style="left:0;top:0" width="1" height="1"><g fill="#000" transform="translate(873.73 540.93) scale(0.1551 0.1350)"><use href="#r181" x="0.0"/><use href="#r185" x="50.0"/><use href="#r188" x="100.0"/><use href="#r183" x="150.0"/></g></svg>
<svg class="a" style="left:0;top:0" width="1" height="1"><g fill="#000" transform="translate(920.74 540.93) scale(0.1542 0.1350)"><use href="#r181" x="0.0"/><use href="#r162" x="50.0"/><use href="#r188" x="100.0"/><use href="#r173" x="150.0"/></g></svg>
<svg class="a" style="left:0;top:0" width="1" height="1"><g fill="#000" transform="translate(591.74 566.93) scale(0.1542 0.1350)"><use href="#r181" x="0.0"/><use href="#r177" x="50.0"/><use href="#r188" x="100.0"/><use href="#r162" x="150.0"/></g></svg>
<svg class="a" style="left:0;top:0" width="1" height="1"><g fill="#000" transform="translate(639.70 566.93) scale(0.1500 0.1350)"><use href="#r173" x="0.0"/><use href="#r173" x="50.0"/><use href="#r188" x="100.0"/><use href="#r183" x="150.0"/></g></svg>
<svg class="a" style="left:0;top:0" width="1" height="1"><g fill="#000" transform="translate(686.71 566.93) scale(0.1492 0.1350)"><use href="#r173" x="0.0"/><use href="#r176" x="50.0"/><use href="#r188" x="100.0"/><use href="#r177" x="150.0"/></g></svg>
<svg class="a" style="left:0;top:0" width="1" height="1"><g fill="#000" transform="translate(733.70 566.93) scale(0.1500 0.1350)"><use href="#r173" x="0.0"/><use href="#r161" x="50.0"/><use href="#r188" x="100.0"/><use href="#r183" x="150.0"/></g></svg>
<svg class="a" style="left:0;top:0" width="1" height="1"><g fill="#000" transform="translate(780.71 566.93) scale(0.1492 0.1350)"><use href="#r173" x="0.0"/><use href="#r183" x="50.0"/><use href="#r188" x="100.0"/><use href="#r173" x="150.0"/></g></svg>
<svg class="a" style="left:0;top:0" width="1" height="1"><g fill="#000" transform="translate(826.67 566.93) scale(0.1595 0.1350)"><use href="#r181" x="0.0"/><use href="#r161" x="50.0"/><use href="#r188" x="100.0"/><use href="#r181" x="150.0"/></g></svg>
<svg class="a" style="left:0;top:0" width="1" height="1"><g fill="#000" transform="translate(873.74 566.93) scale(0.1542 0.1350)"><use href="#r181" x="0.0"/><use href="#r183" x="50.0"/><use href="#r188" x="100.0"/><use href="#r173" x="150.0"/></g></svg>
<svg class="a" style="left:0;top:0" width="1" height="1"><g fill="#000" transform="translate(928.73 566.93) scale(0.1533 0.1350)"><use href="#r161" x="0.0"/><use href="#r188" x="50.0"/><use href="#r174" x="100.0"/></g></svg>
<svg class="a" style="left:0;top:0" width="1" height="1"><g fill="#0000ee" transform="translate(48.70 590.32) scale(0.1487 0.1400)"><use href="#r136" x="0.0"/><use href="#r137" x="100.0"/></g></svg>
<svg class="a" style="left:0;top:0" width="1" height="1"><g fill="#0000ee" transform="translate(110.59 590.32) scale(0.2021 0.1400)"><use href="#r205" x="0.0"/><use href="#r145" x="100.0"/><use href="#r206" x="200.0"/></g></svg>
<svg class="a" style="left:0;top:0" width="1" height="1"><g fill="#000" transform="translate(139.48 334.72) scale(0.1307 0.1379)"><use href="#r207" x="0.0"/></g></svg>
<div class="a" style="left:137px;top:328px;width:481px;height:289px;background:#fff;border:1px solid #d9d9d9"></div>
<svg class="a" style="left:0;top:0" width="1" height="1"><g fill="#595959" transform="translate(320.43 357.94) scale(0.1526 0.1764)"><use href="#l208" x="0.0"/><use href="#l209" x="100.0"/><use href="#l210" x="200.0"/><use href="#l211" x="322.1"/><use href="#l212" x="422.1"/><use href="#l213" x="522.1"/><use href="#l214" x="622.1"/></g></svg>
<svg class="a" style="left:0;top:0" width="1075" height="675"><path d="M183 551.5H603" stroke="#d9d9d9" stroke-width="1"/><path d="M183 529.5H603" stroke="#d9d9d9" stroke-width="1"/><path d="M183 508.5H603" stroke="#d9d9d9" stroke-width="1"/><path d="M183 486.5H603" stroke="#d9d9d9" stroke-width="1"/><path d="M183 465.5H603" stroke="#d9d9d9" stroke-width="1"/><path d="M183 443.5H603" stroke="#d9d9d9" stroke-width="1"/><path d="M183 422.5H603" stroke="#d9d9d9" stroke-width="1"/><path d="M183 400.5H603" stroke="#d9d9d9" stroke-width="1"/><path d="M183 379.5H603" stroke="#d9d9d9" stroke-width="1"/></svg>
<svg class="a" style="left:0;top:0" width="1" height="1"><g fill="#595959" transform="translate(142.55 556.08) scale(0.1355 0.1350)"><use href="#r215" x="0.0"/><use href="#L216" x="100.0"/><use href="#L217" x="150.0"/><use href="#L218" x="175.0"/></g></svg>
<svg class="a" style="left:0;top:0" width="1" height="1"><g fill="#595959" transform="translate(167.38 534.34) scale(0.1538 0.1300)"><use href="#L219" x="0.0"/></g></svg>
<svg class="a" style="left:0;top:0" width="1" height="1"><g fill="#595959" transform="translate(154.61 512.98) scale(0.1478 0.1350)"><use href="#L216" x="0.0"/><use href="#L217" x="50.0"/><use href="#L218" x="75.0"/></g></svg>
<svg class="a" style="left:0;top:0" width="1" height="1"><g fill="#595959" transform="translate(148.22 491.43) scale(0.1420 0.1350)"><use href="#L220" x="0.0"/><use href="#L218" x="50.0"/><use href="#L217" x="100.0"/><use href="#L218" x="125.0"/></g></svg>
<svg class="a" style="left:0;top:0" width="1" height="1"><g fill="#595959" transform="translate(148.22 469.88) scale(0.1420 0.1350)"><use href="#L220" x="0.0"/><use href="#L216" x="50.0"/><use href="#L217" x="100.0"/><use href="#L218" x="125.0"/></g></svg>
<svg class="a" style="left:0;top:0" width="1" height="1"><g fill="#595959" transform="translate(148.95 448.33) scale(0.1377 0.1350)"><use href="#L221" x="0.0"/><use href="#L218" x="50.0"/><use href="#L217" x="100.0"/><use href="#L218" x="125.0"/></g></svg>
<svg class="a" style="left:0;top:0" width="1" height="1"><g fill="#595959" transform="translate(148.95 426.78) scale(0.1377 0.1350)"><use href="#L221" x="0.0"/><use href="#L216" x="50.0"/><use href="#L217" x="100.0"/><use href="#L218" x="125.0"/></g></svg>
<svg class="a" style="left:0;top:0" width="1" height="1"><g fill="#595959" transform="translate(148.81 405.23) scale(0.1386 0.1350)"><use href="#L222" x="0.0"/><use href="#L218" x="50.0"/><use href="#L217" x="100.0"/><use href="#L218" x="125.0"/></g></svg>
<svg class="a" style="left:0;top:0" width="1" height="1"><g fill="#595959" transform="translate(148.81 383.68) scale(0.1386 0.1350)"><use href="#L222" x="0.0"/><use href="#L216" x="50.0"/><use href="#L217" x="100.0"/><use href="#L218" x="125.0"/></g></svg>
<svg class="a" style="left:0;top:0" width="1" height="1"><g fill="#595959" transform="translate(189.62 549.94) scale(0.1532 0.1300)"><use href="#L220" x="0.0"/><use href="#r182" x="50.0"/></g></svg>
<svg class="a" style="left:0;top:0" width="1" height="1"><g fill="#595959" transform="translate(225.41 549.94) scale(0.1473 0.1300)"><use href="#L221" x="0.0"/><use href="#r182" x="50.0"/></g></svg>
<svg class="a" style="left:0;top:0" width="1" height="1"><g fill="#595959" transform="translate(260.26 549.94) scale(0.1484 0.1300)"><use href="#L222" x="0.0"/><use href="#r182" x="50.0"/></g></svg>
<svg class="a" style="left:0;top:0" width="1" height="1"><g fill="#595959" transform="translate(295.71 549.94) scale(0.1450 0.1300)"><use href="#L223" x="0.0"/><use href="#r182" x="50.0"/></g></svg>
<svg class="a" style="left:0;top:0" width="1" height="1"><g fill="#595959" transform="translate(330.10 549.94) scale(0.1496 0.1300)"><use href="#L216" x="0.0"/><use href="#r182" x="50.0"/></g></svg>
<svg class="a" style="left:0;top:0" width="1" height="1"><g fill="#595959" transform="translate(365.41 549.94) scale(0.1473 0.1300)"><use href="#L224" x="0.0"/><use href="#r182" x="50.0"/></g></svg>
<svg class="a" style="left:0;top:0" width="1" height="1"><g fill="#595959" transform="translate(399.94 549.94) scale(0.1508 0.1300)"><use href="#L225" x="0.0"/><use href="#r182" x="50.0"/></g></svg>
<svg class="a" style="left:0;top:0" width="1" height="1"><g fill="#595959" transform="translate(435.41 549.94) scale(0.1473 0.1300)"><use href="#L226" x="0.0"/><use href="#r182" x="50.0"/></g></svg>
<svg class="a" style="left:0;top:0" width="1" height="1"><g fill="#595959" transform="translate(470.56 549.94) scale(0.1462 0.1300)"><use href="#L227" x="0.0"/><use href="#r182" x="50.0"/></g></svg>
<svg class="a" style="left:0;top:0" width="1" height="1"><g fill="#595959" transform="translate(576.71 549.94) scale(0.1429 0.1300)"><use href="#L220" x="0.0"/></g></svg>
<svg class="a" style="left:0;top:0" width="1075" height="675"><polyline points="200.5,523.4 235.5,521.6 270.5,494.9 305.5,470.8 340.5,457.0 375.5,440.2 410.5,413.0 445.5,415.2 480.5,437.2 515.5,460.4 550.5,482.9 585.5,504.8" fill="none" stroke="#4472c4" stroke-width="3.2" stroke-linejoin="round" stroke-linecap="round"/><polyline points="200.5,513.0 235.5,510.9 270.5,485.4 305.5,460.9 340.5,444.9 375.5,429.8 410.5,403.5 445.5,403.5 480.5,429.0 515.5,448.8 550.5,472.1 585.5,493.6" fill="none" stroke="#ed7d31" stroke-width="3.2" stroke-linejoin="round" stroke-linecap="round"/><polyline points="200.5,511.3 235.5,509.1 270.5,484.6 305.5,460.0 340.5,444.5 375.5,429.8 410.5,403.1 445.5,402.7 480.5,427.3 515.5,448.4 550.5,471.2 585.5,493.6" fill="none" stroke="#a5a5a5" stroke-width="3.2" stroke-linejoin="round" stroke-linecap="round"/><polyline points="200.5,508.3 235.5,506.6 270.5,482.4 305.5,457.9 340.5,442.8 375.5,428.5 410.5,402.3 445.5,401.4 480.5,425.5 515.5,444.5 550.5,466.5 585.5,488.9" fill="none" stroke="#ffc000" stroke-width="3.2" stroke-linejoin="round" stroke-linecap="round"/><polyline points="200.5,530.7 235.5,529.4 270.5,499.7 305.5,476.8 340.5,463.9 375.5,450.1 410.5,425.1 445.5,426.4 480.5,446.2 515.5,467.8 550.5,488.0 585.5,510.9" fill="none" stroke="#5b9bd5" stroke-width="3.2" stroke-linejoin="round" stroke-linecap="round"/><polyline points="200.5,508.7 235.5,507.0 270.5,482.0 305.5,456.6 340.5,443.2 375.5,427.7 410.5,401.0 445.5,401.0 480.5,425.1 515.5,446.2 550.5,469.5 585.5,490.6" fill="none" stroke="#70ad47" stroke-width="3.2" stroke-linejoin="round" stroke-linecap="round"/><polyline points="200.5,509.6 235.5,507.8 270.5,483.7 305.5,458.7 340.5,444.9 375.5,429.0 410.5,402.7 445.5,402.3 480.5,426.0 515.5,446.2 550.5,469.5 585.5,489.7" fill="none" stroke="#264478" stroke-width="3.2" stroke-linejoin="round" stroke-linecap="round"/><polyline points="200.5,504.8 235.5,506.1 270.5,486.3 305.5,463.5 340.5,448.4 375.5,432.4 410.5,407.0 445.5,404.4 480.5,425.1 515.5,443.6 550.5,463.5 585.5,485.4" fill="none" stroke="#9e480e" stroke-width="3.2" stroke-linejoin="round" stroke-linecap="round"/><polyline points="200.5,510.9 235.5,509.6 270.5,484.6 305.5,460.9 340.5,447.5 375.5,433.3 410.5,409.2 445.5,407.4 480.5,429.4 515.5,451.4 550.5,472.5 585.5,492.3" fill="none" stroke="#636363" stroke-width="3.2" stroke-linejoin="round" stroke-linecap="round"/></svg>
<svg class="a" style="left:0;top:0" width="1075" height="675"><path d="M211 577.5H236" stroke="#4472c4" stroke-width="3.2" stroke-linecap="round"/><path d="M279 577.5H304" stroke="#ed7d31" stroke-width="3.2" stroke-linecap="round"/><path d="M348 577.5H373" stroke="#a5a5a5" stroke-width="3.2" stroke-linecap="round"/><path d="M415 577.5H440" stroke="#ffc000" stroke-width="3.2" stroke-linecap="round"/><path d="M483 577.5H508" stroke="#5b9bd5" stroke-width="3.2" stroke-linecap="round"/><path d="M211 600H236" stroke="#70ad47" stroke-width="3.2" stroke-linecap="round"/><path d="M279 600H304" stroke="#264478" stroke-width="3.2" stroke-linecap="round"/><path d="M348 600H373" stroke="#9e480e" stroke-width="3.2" stroke-linecap="round"/><path d="M415 600H440" stroke="#636363" stroke-width="3.2" stroke-linecap="round"/></svg>
<svg class="a" style="left:0;top:0" width="1" height="1"><g fill="#595959" transform="translate(238.53 581.44) scale(0.1186 0.1300)"><use href="#s228" x="0.0"/><use href="#s229" x="100.0"/></g></svg>
<svg class="a" style="left:0;top:0" width="1" height="1"><g fill="#595959" transform="translate(305.62 581.44) scale(0.1250 0.1300)"><use href="#s230" x="0.0"/><use href="#s231" x="100.0"/></g></svg>
<svg class="a" style="left:0;top:0" width="1" height="1"><g fill="#595959" transform="translate(374.38 581.44) scale(0.1243 0.1300)"><use href="#s232" x="0.0"/><use href="#s233" x="100.0"/></g></svg>
<svg class="a" style="left:0;top:0" width="1" height="1"><g fill="#595959" transform="translate(442.50 581.44) scale(0.1244 0.1300)"><use href="#s234" x="0.0"/><use href="#s235" x="100.0"/></g></svg>
<svg class="a" style="left:0;top:0" width="1" height="1"><g fill="#595959" transform="translate(510.37 581.44) scale(0.1263 0.1300)"><use href="#s236" x="0.0"/><use href="#s237" x="100.0"/><use href="#s238" x="200.0"/></g></svg>
<svg class="a" style="left:0;top:0" width="1" height="1"><g fill="#595959" transform="translate(238.52 603.94) scale(0.1211 0.1300)"><use href="#s239" x="0.0"/><use href="#s240" x="100.0"/></g></svg>
<svg class="a" style="left:0;top:0" width="1" height="1"><g fill="#595959" transform="translate(305.62 603.94) scale(0.1263 0.1300)"><use href="#s241" x="0.0"/></g></svg>
<svg class="a" style="left:0;top:0" width="1" height="1"><g fill="#595959" transform="translate(373.90 603.94) scale(0.1224 0.1300)"><use href="#s242" x="0.0"/><use href="#s243" x="100.0"/><use href="#s244" x="200.0"/></g></svg>
<svg class="a" style="left:0;top:0" width="1" height="1"><g fill="#595959" transform="translate(442.38 603.94) scale(0.1244 0.1300)"><use href="#s245" x="0.0"/><use href="#s246" x="100.0"/></g></svg>
<div class="a" style="left:478px;top:441px;width:311px;height:119px;background:#f0f0f0;border:1px solid #e3008c"></div>
<div class="a" style="left:478px;top:441px;width:311px;height:31px;background:#e3008c;"></div>
<svg class="a" style="left:0;top:0" width="1" height="1"><g fill="#fff" transform="translate(486.59 461.94) scale(0.1023 0.1300)"><use href="#s247" x="0.0"/><use href="#s65" x="100.0"/><use href="#s248" x="200.0"/><use href="#s28" x="300.0"/></g></svg>
<svg class="a" style="left:0;top:0" width="1" height="1"><g fill="#fff" transform="translate(716.37 461.56) scale(0.1579 0.1200)"><use href="#s249" x="0.0"/></g></svg>
<svg class="a" style="left:758px;top:450px;" width="13" height="13" viewBox="0 0 13 13"><path d="M1 1l11 11M12 1L1 12" stroke="#fff" stroke-width="1.1"/></svg>
<svg class="a" style="left:0;top:0" width="1" height="1"><g fill="#000" transform="translate(485.55 492.94) scale(0.1137 0.1300)"><use href="#s247" x="0.0"/><use href="#s65" x="100.0"/><use href="#s248" x="200.0"/><use href="#s28" x="300.0"/><use href="#s74" x="400.0"/><use href="#s250" x="500.0"/><use href="#s251" x="600.0"/><use href="#s252" x="700.0"/><use href="#s253" x="733.8"/><use href="#s254" x="794.6"/><use href="#s255" x="828.4"/></g></svg>
<div class="a" style="left:570px;top:494px;width:7px;height:1px;background:#000;"></div>
<div class="a" style="left:485px;top:500px;width:199px;height:22px;background:#fff;border:1px solid #a9a9a9"></div>
<svg class="a" style="left:0;top:0" width="1" height="1"><g fill="#000" transform="translate(488.75 515.94) scale(0.1256 0.1300)"><use href="#s81" x="0.0"/><use href="#s256" x="100.0"/><use href="#s257" x="200.0"/><use href="#s258" x="300.0"/><use href="#s259" x="400.0"/><use href="#s260" x="500.0"/><use href="#s261" x="532.3"/><use href="#s92" x="587.8"/><use href="#s261" x="656.7"/><use href="#s93" x="712.2"/><use href="#s255" x="767.7"/><use href="#s261" x="795.5"/><use href="#s262" x="851.0"/><use href="#s261" x="914.5"/><use href="#s93" x="970.0"/></g></svg>
<div class="a" style="left:663px;top:500px;width:21px;height:22px;background:#d9d9d9;border:1px solid #a9a9a9"></div>
<div class="a" style="left:665px;top:502px;width:17px;height:18px;background:#fff;border:1px solid #c8c8c8"></div>
<svg class="a" style="left:667px;top:503px;" width="13" height="15" viewBox="0 0 13 15"><path d="M6.5 3l-4 4h2.5v3.5h3V7H10.5z" fill="#000"/><path d="M2.5 12h8" stroke="#000" stroke-width="1.4"/></svg>
<div class="a" style="left:690px;top:500px;width:98px;height:22px;overflow:hidden">
<svg class="a" style="left:0;top:0" width="1" height="1"><g fill="#000" transform="translate(5.02 15.34) scale(0.1708 0.1300)"><use href="#s263" x="0.0"/></g></svg>
<svg class="a" style="left:0;top:0" width="1" height="1"><g fill="#000" transform="translate(20.63 15.34) scale(0.1518 0.1300)"><use href="#s12" x="0.0"/><use href="#s264" x="55.5"/></g></svg>
<svg class="a" style="left:0;top:0" width="1" height="1"><g fill="#000" transform="translate(42.55 17.94) scale(0.1706 0.1300)"><use href="#s265" x="0.0"/></g></svg>
<svg class="a" style="left:0;top:0" width="1" height="1"><g fill="#000" transform="translate(52.90 15.34) scale(0.1491 0.1300)"><use href="#s122" x="0.0"/><use href="#s264" x="55.5"/></g></svg>
<svg class="a" style="left:0;top:0" width="1" height="1"><g fill="#000" transform="translate(73.92 17.94) scale(0.1765 0.1300)"><use href="#s265" x="0.0"/></g></svg>
<svg class="a" style="left:0;top:0" width="1" height="1"><g fill="#000" transform="translate(85.05 15.34) scale(0.1487 0.1300)"><use href="#s123" x="0.0"/><use href="#s264" x="55.5"/></g></svg>
</div>
<div class="a" style="left:624px;top:528px;width:73px;height:22px;background:#e5f1fb;border:1px solid #0078d7"></div>
<svg class="a" style="left:0;top:0" width="1" height="1"><g fill="#000" transform="translate(650.14 543.94) scale(0.1437 0.1300)"><use href="#s266" x="0.0"/><use href="#s20" x="74.2"/></g></svg>
<div class="a" style="left:708px;top:528px;width:73px;height:22px;background:#e1e1e1;border:1px solid #adadad"></div>
<svg class="a" style="left:0;top:0" width="1" height="1"><g fill="#000" transform="translate(720.98 543.94) scale(0.0930 0.1300)"><use href="#s267" x="0.0"/><use href="#s268" x="100.0"/><use href="#s5" x="200.0"/><use href="#s269" x="300.0"/><use href="#s28" x="400.0"/></g></svg>
<div class="a" style="left:788px;top:441px;width:1px;height:119px;background:#e3008c;"></div>
<div class="a" style="left:789px;top:471px;width:4px;height:88px;background:transparent;"></div>
<svg class="a" style="left:673px;top:532px;" width="15" height="22" viewBox="0 0 15 22"><path d="M1.5 1.5v16l4-4 3 7 2.5-1-3-7h5.5z" fill="#fff" stroke="#000" stroke-width="1"/></svg>
<div class="a" style="left:1052px;top:214px;width:22px;height:438px;background:#e6e6e6;"></div>
<div class="a" style="left:1052px;top:232px;width:1px;height:393px;background:#9e9e9e;"></div>
<div class="a" style="left:29px;top:624px;width:1024px;height:1px;background:#9e9e9e;"></div>
<div class="a" style="left:1056px;top:231px;width:15px;height:380px;background:#dadada;"></div>
<div class="a" style="left:1056px;top:216px;width:15px;height:15px;background:#fff;border:1px solid #c6c6c6"></div>
<svg class="a" style="left:1057px;top:220px;" width="13" height="7" viewBox="0 0 13 7"><path d="M2.5 6h8l-4-4.5z" fill="#777"/></svg>
<div class="a" style="left:1056px;top:300px;width:15px;height:275px;background:#fff;border:1px solid #c6c6c6"></div>
<div class="a" style="left:1056px;top:610px;width:15px;height:15px;background:#fff;border:1px solid #c6c6c6"></div>
<svg class="a" style="left:1057px;top:614px;" width="13" height="7" viewBox="0 0 13 7"><path d="M2.5 1h8l-4 4.5z" fill="#777"/></svg>
<div class="a" style="left:0px;top:624px;width:1052px;height:28px;background:#e6e6e6;"></div>
<div class="a" style="left:0px;top:624px;width:1075px;height:1px;background:#c6c6c6;"></div>
<svg class="a" style="left:25px;top:632px;" width="10" height="12" viewBox="0 0 10 12"><path d="M7.5 1.5v9L2 6z" fill="#217346"/></svg>
<svg class="a" style="left:54px;top:632px;" width="10" height="12" viewBox="0 0 10 12"><path d="M2.5 1.5v9L8 6z" fill="#c0c0c0"/></svg>
<div class="a" style="left:82px;top:639px;width:2.2px;height:2.2px;background:#217346;"></div>
<div class="a" style="left:86.5px;top:639px;width:2.2px;height:2.2px;background:#217346;"></div>
<div class="a" style="left:91px;top:639px;width:2.2px;height:2.2px;background:#217346;"></div>
<div class="a" style="left:101px;top:628px;width:1px;height:20px;background:#b7b7b7;"></div>
<svg class="a" style="left:0;top:0" width="1" height="1"><g fill="#444" transform="translate(112.59 642.82) scale(0.1351 0.1400)"><use href="#s270" x="0.0"/><use href="#s271" x="100.0"/><use href="#s272" x="200.0"/><use href="#s273" x="300.0"/></g></svg>
<div class="a" style="left:177px;top:624px;width:168px;height:25px;background:#fff;"></div>
<div class="a" style="left:177px;top:647px;width:168px;height:2px;background:#217346;"></div>
<svg class="a" style="left:0;top:0" width="1" height="1"><g fill="#217346" transform="translate(188.60 642.82) scale(0.1317 0.1400)"><use href="#s274" x="0.0"/><use href="#s275" x="100.0"/><use href="#s258" x="200.0"/><use href="#s276" x="300.0"/><use href="#s277" x="400.0"/><use href="#s278" x="500.0"/><use href="#s81" x="600.0"/><use href="#s256" x="700.0"/><use href="#s257" x="800.0"/><use href="#s258" x="900.0"/><use href="#s259" x="1000.0"/></g></svg>
<svg class="a" style="left:0;top:0" width="1" height="1"><g fill="#444" transform="translate(355.60 642.82) scale(0.1319 0.1400)"><use href="#s274" x="0.0"/><use href="#s275" x="100.0"/><use href="#s258" x="200.0"/><use href="#s276" x="300.0"/><use href="#s277" x="400.0"/><use href="#s278" x="500.0"/><use href="#s81" x="600.0"/><use href="#s279" x="700.0"/><use href="#s280" x="800.0"/><use href="#s281" x="900.0"/></g></svg>
<div class="a" style="left:497px;top:628px;width:1px;height:20px;background:#b7b7b7;"></div>
<svg class="a" style="left:529px;top:628px;" width="20" height="20" viewBox="0 0 20 20"><circle cx="10" cy="10" r="7.5" fill="none" stroke="#777" stroke-width="1.2"/><path d="M10 6v8M6 10h8" stroke="#777" stroke-width="1.6"/></svg>
<div class="a" style="left:645px;top:631px;width:1.5px;height:1.5px;background:#aaa;"></div>
<div class="a" style="left:645px;top:636px;width:1.5px;height:1.5px;background:#aaa;"></div>
<div class="a" style="left:645px;top:641px;width:1.5px;height:1.5px;background:#aaa;"></div>
<div class="a" style="left:662px;top:631px;width:376px;height:15px;background:#dadada;"></div>
<div class="a" style="left:662px;top:631px;width:16px;height:15px;background:#fff;border:1px solid #c6c6c6"></div>
<svg class="a" style="left:664px;top:633px;" width="12" height="11" viewBox="0 0 12 11"><path d="M7.5 1.5v8L3 5.5z" fill="#777"/></svg>
<div class="a" style="left:677px;top:631px;width:275px;height:15px;background:#fff;border:1px solid #c6c6c6"></div>
<div class="a" style="left:1038px;top:631px;width:15px;height:15px;background:#fff;border:1px solid #c6c6c6"></div>
<svg class="a" style="left:1039px;top:633px;" width="12" height="11" viewBox="0 0 12 11"><path d="M4.5 1.5v8L9 5.5z" fill="#777"/></svg>
<div class="a" style="left:0px;top:652px;width:1075px;height:23px;background:#f3f2f1;"></div>
<div class="a" style="left:0px;top:652px;width:1075px;height:1px;background:#dcdcdc;"></div>
<svg class="a" style="left:0;top:0" width="1" height="1"><g fill="#555" transform="translate(8.75 667.94) scale(0.1237 0.1300)"><use href="#s282" x="0.0"/><use href="#s283" x="100.0"/></g></svg>
<svg class="a" style="left:75px;top:655px;" width="18" height="16" viewBox="0 0 18 16"><g fill="none" stroke="#555" stroke-width="1"><path d="M1.5 2.5h13M1.5 2.5v11h6M4 6h4M4 9h3"/><circle cx="12.5" cy="10.5" r="3.5"/></g><circle cx="12.5" cy="10.5" r="1.8" fill="#555"/></svg>
<svg class="a" style="left:767px;top:654px;" width="18" height="18" viewBox="0 0 18 18"><g fill="none" stroke="#b5b5b5" stroke-width="1"><rect x="2.5" y="2.5" width="13" height="13"/><path d="M6.5 2.5v13M11.5 2.5v13M2.5 6.5h13M2.5 11.5h13"/></g></svg>
<svg class="a" style="left:807px;top:654px;" width="18" height="18" viewBox="0 0 18 18"><g fill="none" stroke="#b5b5b5" stroke-width="1"><rect x="2.5" y="2.5" width="13" height="13"/><rect x="5.5" y="5.5" width="7" height="7"/><path d="M7 7.5h4M7 9h4M7 10.5h4"/></g></svg>
<svg class="a" style="left:847px;top:654px;" width="18" height="18" viewBox="0 0 18 18"><g fill="none" stroke="#b5b5b5" stroke-width="1"><path d="M2.5 4.5v11h13v-11M2.5 4.5h13M7.5 4.5v6h4v-6"/></g></svg>
<div class="a" style="left:882px;top:662px;width:9px;height:1px;background:#a0a0a0;"></div>
<div class="a" style="left:896px;top:662px;width:99px;height:1px;background:#b8b8b8;"></div>
<div class="a" style="left:945px;top:659px;width:1px;height:7px;background:#b8b8b8;"></div>
<div class="a" style="left:1000px;top:662px;width:10px;height:1px;background:#a0a0a0;"></div>
<div class="a" style="left:1004.5px;top:657.5px;width:1px;height:10px;background:#a0a0a0;"></div>
<svg class="a" style="left:0;top:0" width="1" height="1"><g fill="#a8a8a8" transform="translate(1020.83 667.94) scale(0.1303 0.1300)"><use href="#s12" x="0.0"/><use href="#s121" x="55.5"/><use href="#s121" x="111.0"/><use href="#s284" x="166.5"/></g></svg>
<div class="a" style="left:0px;top:0px;width:1px;height:675px;background:#8a8a8a;"></div>
<div class="a" style="left:1074px;top:0px;width:1px;height:675px;background:#8a8a8a;"></div>
<div class="a" style="left:0px;top:674px;width:1075px;height:1px;background:#8a8a8a;"></div>
</body></html>
